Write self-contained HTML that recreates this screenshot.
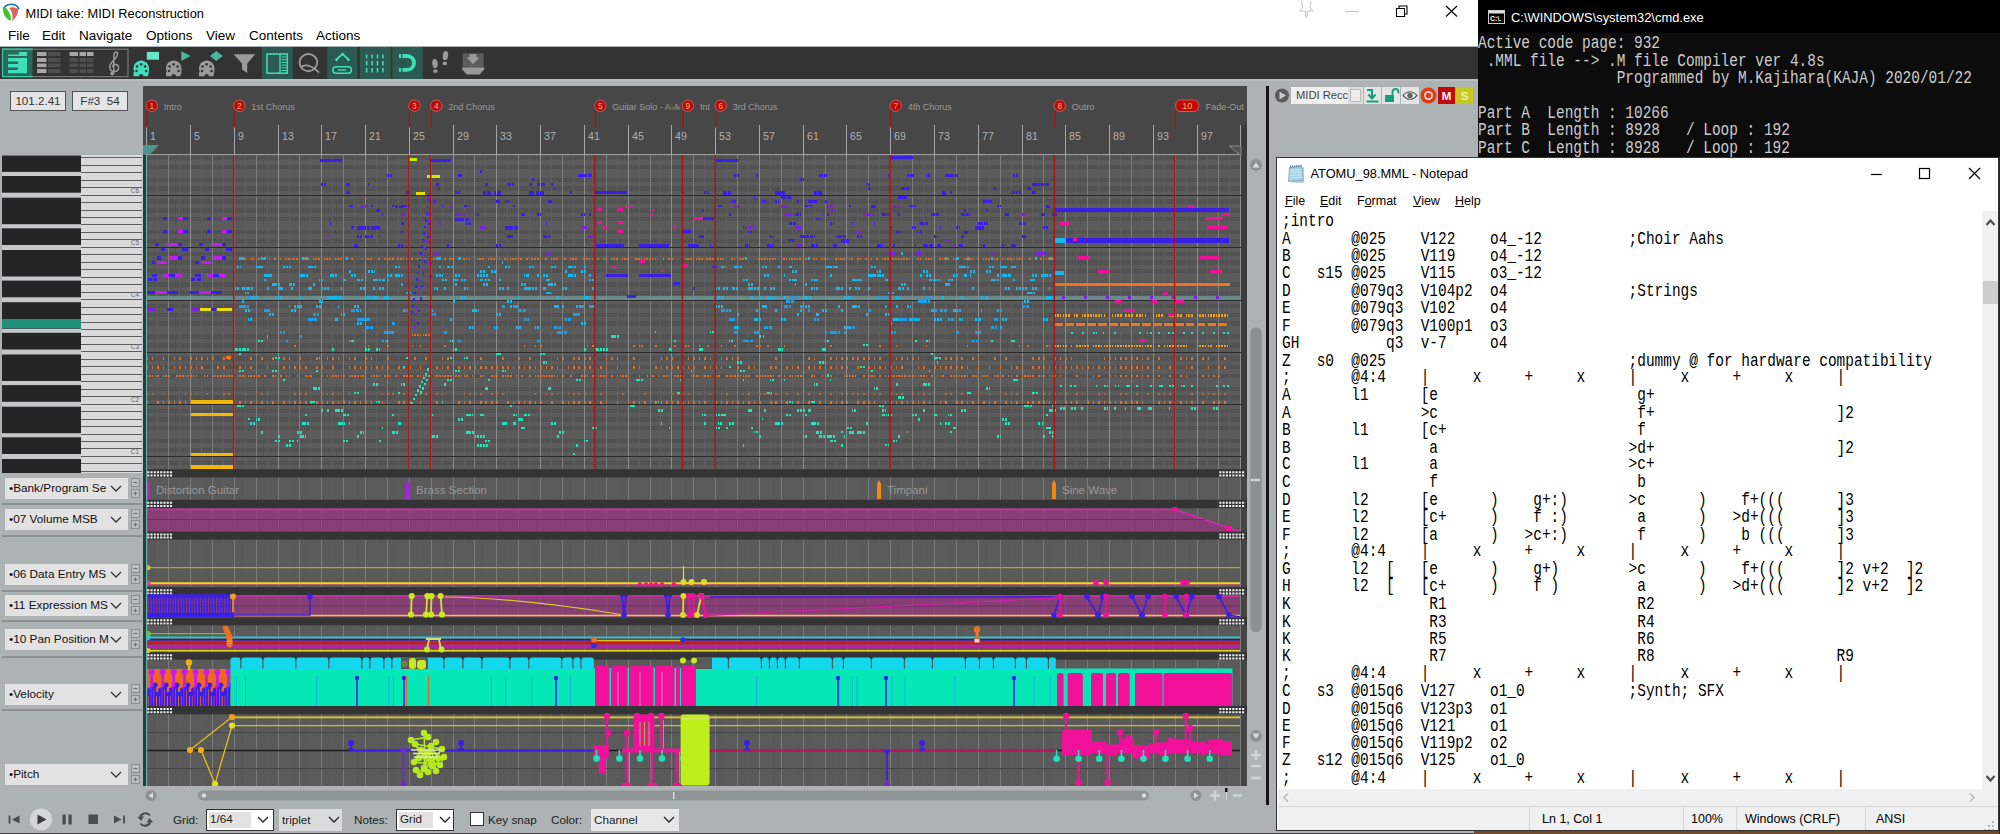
<!DOCTYPE html><html><head><meta charset="utf-8"><title>MIDI take: MIDI Reconstruction</title><style>
*{box-sizing:border-box;margin:0;padding:0}
html,body{width:2000px;height:834px;overflow:hidden;background:#adb2b2;font-family:"Liberation Sans",sans-serif;}
.abs{position:absolute}
#root{position:relative;width:2000px;height:834px;overflow:hidden;background:#adb2b2}
#rtitle{left:0;top:0;width:1478px;height:46px;background:#fff}
#rtitle .t{left:25.5px;top:5.5px;font-size:12.85px;color:#000;white-space:nowrap}
#rmenu span{position:absolute;top:28px;font-size:13.5px;color:#000;white-space:nowrap}
#tb{left:0;top:47px;width:1478px;height:32px;background:#333}
#topshade{left:0;top:79px;width:1478px;height:2px;background:#b7bcbc}
.box{background:#e4e4e4;border:1px solid #555;font-size:11.6px;color:#333;text-align:center;line-height:18px;height:20px;top:91px;white-space:pre}
#ruler{left:143px;top:86px;width:1104px;height:69px;background:#474747;overflow:hidden}
.combo{left:5px;width:123px;height:21px;background:#e2e2e2;font-size:11.8px;color:#111;line-height:21px;padding-left:4px;white-space:nowrap;overflow:hidden}
.pm{left:131px;width:9px;height:9px;border:1px solid #8a8f8f;background:#b9bebe}
.hl{left:2px;width:140px;height:2px;background:#8b9090}
#cmd{left:1478px;top:0;width:522px;height:157px;background:#0c0c0c;overflow:hidden}
#cmdtitle{left:0;top:0;width:522px;height:33px;background:#000}
#cmdtitle .t{left:33px;top:9.5px;font-size:12.9px;color:#fff;white-space:nowrap}
.mono{font-family:"Liberation Mono",monospace;font-size:17.34px;line-height:15.818px;white-space:pre;transform:scale(0.8333,1.1);transform-origin:0 0;tab-size:8;-moz-tab-size:8}
#cmdtext{left:0px;top:35px;color:#ccc}
#np{left:1276px;top:157px;width:723px;height:674px;background:#fff;border:1px solid #333;overflow:hidden}
#nptitle .t{left:32.500px;top:8px;font-size:12.8px;color:#000;white-space:nowrap}
#npmenu span{position:absolute;top:36px;font-size:12.5px;color:#000;white-space:nowrap}
#nptext{left:4px;top:55.200px;color:#000}
#npvs{left:704px;top:53px;width:17px;height:577.500px;background:#f0f0f0}
#nphs{left:0px;top:630.500px;width:721px;height:17.500px;background:#f0f0f0}
#npstat{left:0px;top:648px;width:721px;height:24px;background:#f0f0f0;border-top:1px solid #d7d7d7}
#npstat span{position:absolute;top:4.500px;font-size:12.5px;color:#000;white-space:nowrap}
#npstat i{position:absolute;top:0;width:1px;height:24px;background:#d7d7d7}
.lbl{font-size:11.700px;color:#222;white-space:nowrap}
#npi{position:absolute;left:1px;top:0;width:721px;height:672px;overflow:hidden}</style></head><body><div id="root">
<div id="rtitle" class="abs"><svg class="abs" style="left:0;top:0" width="1478" height="30"><path d="M3.5 9.5C5 3 17 2.500 19 9.500" fill="none" stroke="#2a7db0" stroke-width="1.800"/><path d="M3 8.500C2.500 13 5.500 18.500 10.500 21C12 17 9 10 4.500 7z" fill="#3cc428"/><path d="M9 8c3 3 4.500 8 3 13c4 -3 6.500 -7.500 6 -12c-3 -2 -6 -2.500 -9 -1z" fill="#d4645c"/><path d="M1301.500 1l1 7l-3 3h6v5l0.800 1.500l0.800 -1.500v-5h6l-3 -3l1 -7" fill="none" stroke="#c4c4c4" stroke-width="1"/><path d="M1345 11.500h14" stroke="#bdbdbd" stroke-width="1"/><path d="M1396.500 8.500h8v8h-8zM1399 8.500v-2.500h8v8h-2.500" fill="none" stroke="#000" stroke-width="1.100"/><path d="M1446 6l11 10.500M1457 6l-11 10.500" stroke="#000" stroke-width="1.200"/></svg><div class="abs t">MIDI take: MIDI Reconstruction</div>
<div id="rmenu">
<span style="left:8px">File</span>
<span style="left:42px">Edit</span>
<span style="left:79px">Navigate</span>
<span style="left:146px">Options</span>
<span style="left:206px">View</span>
<span style="left:249px">Contents</span>
<span style="left:316px">Actions</span>
</div></div>
<div id="tb" class="abs"><svg class="abs" style="left:0;top:0" width="1478" height="32" viewBox="0 0 1478 32"><rect x="2" y="1.500" width="30.500" height="28.500" fill="#2a6a5c"/><rect x="262" y="0" width="30.7" height="32" fill="#2c5a52"/><rect x="327.3" y="0" width="30" height="32" fill="#2c5a52"/><rect x="359.8" y="0" width="31" height="32" fill="#2c5a52"/><rect x="392.4" y="0" width="30.4" height="32" fill="#2c5a52"/><rect x="2.500" y="2.200" width="125.500" height="27.500" fill="none" stroke="#858585"/><path d="M32.500 2.200H2.500V29.700H32.500" fill="none" stroke="#35c8a4" stroke-width="1.300"/><path d="M19 5.100h8v3.900h-19v-1.500h11zM8 11h19v3.500h-19zM8 17h19v3.500h-19zM8 23h19v3.300h-19zM18 14.500h9v2.500h-9zM18 20.500h9v2.500h-9z" fill="#3fe0b8"/><rect x="37" y="5" width="9.500" height="4" fill="#a6a6a6"/><rect x="48" y="5" width="12.500" height="4" fill="#4e4e4e"/><rect x="37" y="11" width="9.500" height="4" fill="#a6a6a6"/><rect x="48" y="11" width="12.500" height="4" fill="#4e4e4e"/><rect x="37" y="16.5" width="9.500" height="3.7" fill="#a6a6a6"/><rect x="48" y="16.5" width="12.500" height="3.7" fill="#4e4e4e"/><rect x="37" y="22" width="9.500" height="4" fill="#a6a6a6"/><rect x="48" y="22" width="12.500" height="4" fill="#4e4e4e"/><rect x="69.5" y="5" width="8.5" height="4" fill="#a6a6a6"/><rect x="69.5" y="11" width="8.5" height="4" fill="#4e4e4e"/><rect x="69.5" y="16.5" width="8.5" height="3.7" fill="#4e4e4e"/><rect x="69.5" y="22" width="8.5" height="4" fill="#4e4e4e"/><rect x="79.5" y="5" width="6.5" height="4" fill="#a6a6a6"/><rect x="79.5" y="11" width="6.5" height="4" fill="#4e4e4e"/><rect x="79.5" y="16.5" width="6.5" height="3.7" fill="#4e4e4e"/><rect x="79.5" y="22" width="6.5" height="4" fill="#4e4e4e"/><rect x="87" y="5" width="6.5" height="4" fill="#a6a6a6"/><rect x="87" y="11" width="6.5" height="4" fill="#4e4e4e"/><rect x="87" y="16.5" width="6.5" height="3.7" fill="#4e4e4e"/><rect x="87" y="22" width="6.5" height="4" fill="#4e4e4e"/><path d="M113.800 27V9.500c0 -2.800 1.300 -4.500 2.700 -4.500c1.600 0 1.300 3.800 -1.300 6.600c-2.800 3 -5.400 4.800 -5.400 8.300c0 2.900 2.200 4.500 4.700 4.500c2.500 0 4.100 -1.600 4.100 -3.700c0 -1.900 -1.400 -3.300 -3.200 -3.300c-1.700 0 -2.900 1.200 -2.900 2.700" fill="none" stroke="#9a9a9a" stroke-width="1.500"/><circle cx="112.200" cy="26.600" r="1.900" fill="#9a9a9a"/><path d="M133.5 29.3v-3.200c0 -0.800 0.800 -1.200 0.800 -2c0 -0.600 -0.800 -1 -0.800 -2.400c0 -4.500 3.400 -8.100 7.750 -8.100s7.750 3.600 7.750 8.100c0 2.800 -0.500 5.200 -1.200 7.600h-4.400c0 -1.500 -0.900 -2.300 -2.200 -2.300s-2.200 0.800 -2.200 2.300z" fill="#3fe0b8"/><circle cx="137.1" cy="19.500" r="1.250" fill="#333"/><circle cx="141.1" cy="17.300" r="1.250" fill="#333"/><circle cx="145.1" cy="19.500" r="1.250" fill="#333"/><circle cx="136.5" cy="24" r="1.250" fill="#333"/><circle cx="146.1" cy="24" r="1.250" fill="#333"/><rect x="146.800" y="4.900" width="12.200" height="7.800" fill="#68e6c8"/><path d="M166 29.3v-3.200c0 -0.800 0.800 -1.200 0.800 -2c0 -0.600 -0.800 -1 -0.800 -2.400c0 -4.500 3.400 -8.100 7.750 -8.100s7.750 3.600 7.750 8.100c0 2.800 -0.500 5.200 -1.200 7.600h-4.400c0 -1.500 -0.900 -2.300 -2.200 -2.300s-2.200 0.800 -2.200 2.300z" fill="#9a9a9a"/><circle cx="169.6" cy="19.500" r="1.250" fill="#333"/><circle cx="173.6" cy="17.300" r="1.250" fill="#333"/><circle cx="177.6" cy="19.500" r="1.250" fill="#333"/><circle cx="169" cy="24" r="1.250" fill="#333"/><circle cx="178.6" cy="24" r="1.250" fill="#333"/><path d="M181.300 4.200l9.300 4.900l-9.300 4.900z" fill="#47b898"/><path d="M199 29.3v-3.200c0 -0.800 0.800 -1.200 0.800 -2c0 -0.600 -0.800 -1 -0.800 -2.400c0 -4.500 3.400 -8.100 7.750 -8.100s7.750 3.600 7.750 8.100c0 2.800 -0.500 5.200 -1.200 7.600h-4.400c0 -1.500 -0.900 -2.300 -2.200 -2.300s-2.200 0.800 -2.200 2.300z" fill="#9a9a9a"/><circle cx="202.6" cy="19.500" r="1.250" fill="#333"/><circle cx="206.6" cy="17.300" r="1.250" fill="#333"/><circle cx="210.6" cy="19.500" r="1.250" fill="#333"/><circle cx="202" cy="24" r="1.250" fill="#333"/><circle cx="211.6" cy="24" r="1.250" fill="#333"/><path d="M216.300 3.900l6.500 5l-6.500 5l-6.500 -5z" fill="#47b898"/><path d="M233.600 7.200h21.700l-8.100 9.300v9.400l-5.200 -3.400v-6z" fill="#9a9a9a"/><rect x="267" y="7" width="20.300" height="19.200" fill="none" stroke="#3fe0b8" stroke-width="1.500"/><path d="M280 7v19.200" stroke="#3fe0b8" stroke-width="1.300"/><path d="M281.500 10h5M281.500 12.700h5M281.500 15.400h5M281.500 18.100h5M281.500 20.800h5M281.500 23.500h5" stroke="#3fe0b8" stroke-width="1"/><ellipse cx="308.400" cy="15.600" rx="8.800" ry="8.600" fill="none" stroke="#9a9a9a" stroke-width="1.900"/><path d="M300.500 20.500c4.500 -3.500 11 -2.500 18.500 5.200" fill="none" stroke="#9a9a9a" stroke-width="1.700"/><path d="M336.500 12.500l6 -5.500l6 5.500" fill="none" stroke="#3fe0b8" stroke-width="1.800"/><circle cx="336.500" cy="12.800" r="1.400" fill="#3fe0b8"/><circle cx="348.500" cy="12.800" r="1.400" fill="#3fe0b8"/><circle cx="342.500" cy="7.200" r="1.400" fill="#3fe0b8"/><rect x="332.800" y="19.800" width="18.600" height="6.400" rx="3.200" fill="none" stroke="#3fe0b8" stroke-width="1.500"/><path d="M338 23h8" stroke="#3fe0b8" stroke-width="1.300"/><path d="M366.60 7.500v4M366.60 14v4.500M366.60 21v4.500" stroke="#3fe0b8" stroke-width="1.500"/><path d="M372.05 7.500v4M372.05 14v4.500M372.05 21v4.500" stroke="#3fe0b8" stroke-width="1.500"/><path d="M377.50 7.500v4M377.50 14v4.500M377.50 21v4.500" stroke="#3fe0b8" stroke-width="1.500"/><path d="M382.95 7.500v4M382.95 14v4.500M382.95 21v4.500" stroke="#3fe0b8" stroke-width="1.500"/><path d="M399 9h7.500c5 0 7.500 3.300 7.500 6.900s-2.500 6.900 -7.500 6.900h-7.500" fill="none" stroke="#3fe0b8" stroke-width="3.800"/><path d="M401.800 6.500v5M401.800 20.300v5" stroke="#2c5a52" stroke-width="1.200"/><ellipse cx="435" cy="16.500" rx="2.700" ry="4.600" fill="#9a9a9a" transform="rotate(-8 435 16.500)"/><rect x="433.300" y="22.600" width="4.200" height="3.200" rx="1.200" fill="#9a9a9a"/><ellipse cx="445.400" cy="8.600" rx="2.700" ry="4.600" fill="#9a9a9a" transform="rotate(8 445.400 8.600)"/><rect x="442.800" y="14.700" width="4.200" height="3.200" rx="1.200" fill="#9a9a9a"/><rect x="462.700" y="6.400" width="21" height="14.200" fill="#5c5c5c"/><path d="M469.500 7h7v3.500h3l-6.500 6.500l-6.500 -6.500h3z" fill="#9a9a9a"/><path d="M462.200 20.600h22v1.700l-4.500 5.200h-13l-4.500 -5.200z" fill="#9a9a9a"/></svg></div>
<div id="topshade" class="abs"></div>
<div class="abs box" style="left:10px;width:56px">101.2.41</div>
<div class="abs box" style="left:72px;width:56px">F#3  54</div>
<svg class="abs" style="left:0;top:79px" width="1478" height="755" viewBox="0 79 1478 755"><rect x="143" y="86" width="1104" height="69" fill="#474747"/><rect x="1241" y="125" width="6" height="30" fill="#3a3a3a"/><path d="M146 154.5H1241" stroke="#9c9c9c" stroke-width="1"/><text x="150.0" y="139.5" font-family="Liberation Sans,sans-serif" font-size="10.6" fill="#b0b0b0">1</text><text x="194.0" y="139.5" font-family="Liberation Sans,sans-serif" font-size="10.6" fill="#b0b0b0">5</text><text x="238.0" y="139.5" font-family="Liberation Sans,sans-serif" font-size="10.6" fill="#b0b0b0">9</text><text x="282.0" y="139.5" font-family="Liberation Sans,sans-serif" font-size="10.6" fill="#b0b0b0">13</text><text x="325.0" y="139.5" font-family="Liberation Sans,sans-serif" font-size="10.6" fill="#b0b0b0">17</text><text x="369.0" y="139.5" font-family="Liberation Sans,sans-serif" font-size="10.6" fill="#b0b0b0">21</text><text x="413.0" y="139.5" font-family="Liberation Sans,sans-serif" font-size="10.6" fill="#b0b0b0">25</text><text x="457.0" y="139.5" font-family="Liberation Sans,sans-serif" font-size="10.6" fill="#b0b0b0">29</text><text x="500.0" y="139.5" font-family="Liberation Sans,sans-serif" font-size="10.6" fill="#b0b0b0">33</text><text x="544.0" y="139.5" font-family="Liberation Sans,sans-serif" font-size="10.6" fill="#b0b0b0">37</text><text x="588.0" y="139.5" font-family="Liberation Sans,sans-serif" font-size="10.6" fill="#b0b0b0">41</text><text x="632.0" y="139.5" font-family="Liberation Sans,sans-serif" font-size="10.6" fill="#b0b0b0">45</text><text x="675.0" y="139.5" font-family="Liberation Sans,sans-serif" font-size="10.6" fill="#b0b0b0">49</text><text x="719.0" y="139.5" font-family="Liberation Sans,sans-serif" font-size="10.6" fill="#b0b0b0">53</text><text x="763.0" y="139.5" font-family="Liberation Sans,sans-serif" font-size="10.6" fill="#b0b0b0">57</text><text x="807.0" y="139.5" font-family="Liberation Sans,sans-serif" font-size="10.6" fill="#b0b0b0">61</text><text x="850.0" y="139.5" font-family="Liberation Sans,sans-serif" font-size="10.6" fill="#b0b0b0">65</text><text x="894.0" y="139.5" font-family="Liberation Sans,sans-serif" font-size="10.6" fill="#b0b0b0">69</text><text x="938.0" y="139.5" font-family="Liberation Sans,sans-serif" font-size="10.6" fill="#b0b0b0">73</text><text x="982.0" y="139.5" font-family="Liberation Sans,sans-serif" font-size="10.6" fill="#b0b0b0">77</text><text x="1026.0" y="139.5" font-family="Liberation Sans,sans-serif" font-size="10.6" fill="#b0b0b0">81</text><text x="1069.0" y="139.5" font-family="Liberation Sans,sans-serif" font-size="10.6" fill="#b0b0b0">85</text><text x="1113.0" y="139.5" font-family="Liberation Sans,sans-serif" font-size="10.6" fill="#b0b0b0">89</text><text x="1157.0" y="139.5" font-family="Liberation Sans,sans-serif" font-size="10.6" fill="#b0b0b0">93</text><text x="1201.0" y="139.5" font-family="Liberation Sans,sans-serif" font-size="10.6" fill="#b0b0b0">97</text><path d="M146.5 125V155M190.5 125V155M234.5 125V155M278.5 125V155M321.5 125V155M365.5 125V155M409.5 125V155M453.5 125V155M496.5 125V155M540.5 125V155M584.5 125V155M628.5 125V155M671.5 125V155M715.5 125V155M759.5 125V155M803.5 125V155M846.5 125V155M890.5 125V155M934.5 125V155M978.5 125V155M1022.5 125V155M1065.5 125V155M1109.5 125V155M1153.5 125V155M1197.5 125V155M1240.5 125V155" stroke="#a6a6a6" stroke-width="1"/><clipPath id="cg"><rect x="600" y="95" width="80" height="20"/></clipPath><clipPath id="ci"><rect x="690" y="95" width="22" height="20"/></clipPath><path d="M146.8 111V127.500" stroke="#961a1a" stroke-width="1.500"/><circle cx="151.8" cy="105.700" r="5.700" fill="#b80a0a" stroke="#d86a5a" stroke-width="0.800"/><text x="151.8" y="108.700" font-family="Liberation Sans,sans-serif" font-size="8.300" fill="#f4b070" text-anchor="middle">1</text><text x="163.8" y="109.5" font-family="Liberation Sans,sans-serif" font-size="9" fill="#9a9a9a">Intro</text><path d="M234.3 111V127.500" stroke="#961a1a" stroke-width="1.500"/><circle cx="239.3" cy="105.700" r="5.700" fill="#b80a0a" stroke="#d86a5a" stroke-width="0.800"/><text x="239.3" y="108.700" font-family="Liberation Sans,sans-serif" font-size="8.300" fill="#f4b070" text-anchor="middle">2</text><text x="251.3" y="109.5" font-family="Liberation Sans,sans-serif" font-size="9" fill="#9a9a9a">1st Chorus</text><path d="M409.4 111V127.500" stroke="#961a1a" stroke-width="1.500"/><circle cx="414.4" cy="105.700" r="5.700" fill="#b80a0a" stroke="#d86a5a" stroke-width="0.800"/><text x="414.4" y="108.700" font-family="Liberation Sans,sans-serif" font-size="8.300" fill="#f4b070" text-anchor="middle">3</text><path d="M431.2 111V127.500" stroke="#961a1a" stroke-width="1.500"/><circle cx="436.2" cy="105.700" r="5.700" fill="#b80a0a" stroke="#d86a5a" stroke-width="0.800"/><text x="436.2" y="108.700" font-family="Liberation Sans,sans-serif" font-size="8.300" fill="#f4b070" text-anchor="middle">4</text><text x="448.2" y="109.5" font-family="Liberation Sans,sans-serif" font-size="9" fill="#9a9a9a">2nd Chorus</text><path d="M595.3 111V127.500" stroke="#961a1a" stroke-width="1.500"/><circle cx="600.3" cy="105.700" r="5.700" fill="#b80a0a" stroke="#d86a5a" stroke-width="0.800"/><text x="600.3" y="108.700" font-family="Liberation Sans,sans-serif" font-size="8.300" fill="#f4b070" text-anchor="middle">5</text><text x="612.3" y="109.5" font-family="Liberation Sans,sans-serif" font-size="9" fill="#9a9a9a" clip-path="url(#cg)">Guitar Solo - A&#9837;M</text><path d="M682.9 111V127.500" stroke="#961a1a" stroke-width="1.500"/><circle cx="687.9" cy="105.700" r="5.700" fill="#b80a0a" stroke="#d86a5a" stroke-width="0.800"/><text x="687.9" y="108.700" font-family="Liberation Sans,sans-serif" font-size="8.300" fill="#f4b070" text-anchor="middle">9</text><text x="699.9" y="109.5" font-family="Liberation Sans,sans-serif" font-size="9" fill="#9a9a9a" clip-path="url(#ci)">Int</text><path d="M715.7 111V127.500" stroke="#961a1a" stroke-width="1.500"/><circle cx="720.7" cy="105.700" r="5.700" fill="#b80a0a" stroke="#d86a5a" stroke-width="0.800"/><text x="720.7" y="108.700" font-family="Liberation Sans,sans-serif" font-size="8.300" fill="#f4b070" text-anchor="middle">6</text><text x="732.7" y="109.5" font-family="Liberation Sans,sans-serif" font-size="9" fill="#9a9a9a">3rd Chorus</text><path d="M890.7 111V127.500" stroke="#961a1a" stroke-width="1.500"/><circle cx="895.7" cy="105.700" r="5.700" fill="#b80a0a" stroke="#d86a5a" stroke-width="0.800"/><text x="895.7" y="108.700" font-family="Liberation Sans,sans-serif" font-size="8.300" fill="#f4b070" text-anchor="middle">7</text><text x="907.7" y="109.5" font-family="Liberation Sans,sans-serif" font-size="9" fill="#9a9a9a">4th Chorus</text><path d="M1054.8 111V127.500" stroke="#961a1a" stroke-width="1.500"/><circle cx="1059.8" cy="105.700" r="5.700" fill="#b80a0a" stroke="#d86a5a" stroke-width="0.800"/><text x="1059.8" y="108.700" font-family="Liberation Sans,sans-serif" font-size="8.300" fill="#f4b070" text-anchor="middle">8</text><text x="1071.8" y="109.5" font-family="Liberation Sans,sans-serif" font-size="9" fill="#9a9a9a">Outro</text><path d="M1175.2 111V127.500" stroke="#961a1a" stroke-width="1.500"/><rect x="1175.7" y="100" width="23" height="11.5" rx="5" fill="#c00808" stroke="#e06a5a" stroke-width="0.8"/><text x="1187.2" y="109.3" font-family="Liberation Sans,sans-serif" font-size="9" fill="#f4b070" text-anchor="middle">10</text><text x="1205.7" y="109.5" font-family="Liberation Sans,sans-serif" font-size="9" fill="#9a9a9a">Fade-Out</text><path d="M143 145h16l-9 9.5h-7z" fill="#4f9c92" opacity="0.9"/><path d="M1229 146h12v9.5z" fill="#555" stroke="#8a8a8a" stroke-width="1"/><rect x="2" y="155" width="141" height="318" fill="#c4c8c8"/><rect x="81" y="155" width="60.500" height="318" fill="#dadada"/><path d="M81 157.5H141.500M81 165.5H141.500M81 172.5H141.500M81 180.5H141.500M81 187.5H141.500M81 195.5H141.500M81 202.5H141.500M81 210.5H141.500M81 217.5H141.500M81 224.5H141.500M81 232.5H141.500M81 239.5H141.500M81 247.5H141.500M81 254.5H141.500M81 262.5H141.500M81 269.5H141.500M81 277.5H141.500M81 284.5H141.500M81 292.5H141.500M81 299.5H141.500M81 307.5H141.500M81 314.5H141.500M81 322.5H141.500M81 329.5H141.500M81 336.5H141.500M81 344.5H141.500M81 351.5H141.500M81 359.5H141.500M81 366.5H141.500M81 374.5H141.500M81 381.5H141.500M81 389.5H141.500M81 396.5H141.500M81 404.5H141.500M81 411.5H141.500M81 419.5H141.500M81 426.5H141.500M81 434.5H141.500M81 441.5H141.500M81 448.5H141.500M81 456.5H141.500M81 463.5H141.500M81 471.5H141.500" stroke="#5e5e5e" stroke-width="1" shape-rendering="crispEdges"/><rect x="2" y="155.5" width="79" height="16.4" fill="#242626"/><rect x="2" y="176.0" width="79" height="16.7" fill="#242626"/><rect x="2" y="197.7" width="79" height="26.5" fill="#242626"/><rect x="2" y="228.3" width="79" height="16.7" fill="#242626"/><text x="139" y="192.5" font-family="Liberation Sans,sans-serif" font-size="6.500" fill="#666" text-anchor="end">C6</text><rect x="2" y="250.0" width="79" height="26.5" fill="#242626"/><rect x="2" y="280.6" width="79" height="16.7" fill="#242626"/><text x="139" y="244.8" font-family="Liberation Sans,sans-serif" font-size="6.500" fill="#666" text-anchor="end">C5</text><rect x="2" y="302.2" width="79" height="26.5" fill="#242626"/><rect x="2" y="332.8" width="79" height="16.7" fill="#242626"/><text x="139" y="297.0" font-family="Liberation Sans,sans-serif" font-size="6.500" fill="#666" text-anchor="end">C4</text><rect x="2" y="354.5" width="79" height="26.5" fill="#242626"/><rect x="2" y="385.1" width="79" height="16.7" fill="#242626"/><text x="139" y="349.3" font-family="Liberation Sans,sans-serif" font-size="6.500" fill="#666" text-anchor="end">C3</text><rect x="2" y="406.7" width="79" height="26.5" fill="#242626"/><rect x="2" y="437.3" width="79" height="16.7" fill="#242626"/><text x="139" y="401.5" font-family="Liberation Sans,sans-serif" font-size="6.500" fill="#666" text-anchor="end">C2</text><rect x="2" y="459.0" width="79" height="14.0" fill="#242626"/><text x="139" y="453.8" font-family="Liberation Sans,sans-serif" font-size="6.500" fill="#666" text-anchor="end">C1</text><rect x="2" y="319" width="79" height="9.200" fill="#1f8f78"/><circle cx="1256" cy="165" r="6" fill="#8d9292"/><path d="M1252.5 167.5l3.5 -5l3.5 5z" fill="#d8dcdc"/><rect x="1250.300" y="327.500" width="11.400" height="304.500" rx="5.500" fill="#8b9090"/><circle cx="1256" cy="736" r="6" fill="#8d9292"/><path d="M1252.5 733.5l3.5 5l3.5 -5z" fill="#d8dcdc"/><path d="M1251 755h10M1256 750v10" stroke="#d0d4d4" stroke-width="2.6"/><path d="M1251 766h10" stroke="#d0d4d4" stroke-width="2.2"/><path d="M1251 778h10" stroke="#d0d4d4" stroke-width="2.6"/><path d="M1251 480h9" stroke="#d0d4d4" stroke-width="2.4"/><circle cx="151" cy="795.5" r="5.5" fill="#8d9292"/><path d="M153 792.5l-4.5 3l4.5 3z" fill="#d8dcdc"/><rect x="198" y="790.5" width="951" height="10" rx="5" fill="#8f9494"/><circle cx="204" cy="795.5" r="2.2" fill="#d8dcdc"/><circle cx="1144" cy="795.5" r="2.2" fill="#d8dcdc"/><rect x="673" y="792" width="1.5" height="7" fill="#d8dcdc"/><circle cx="1196" cy="795.5" r="5.5" fill="#8d9292"/><path d="M1194 792.5l4.500 3l-4.500 3z" fill="#d8dcdc"/><path d="M1210 795.5h10M1215 790.500v10" stroke="#d0d4d4" stroke-width="2.4"/><path d="M1233 795.500h9" stroke="#d0d4d4" stroke-width="2.4"/><rect x="1225" y="788" width="2.5" height="4" fill="#111"/><rect x="1226" y="792" width="1" height="8" fill="#d0d4d4"/><path d="M9.500 815.500v8" stroke="#4a4d4d" stroke-width="1.800"/><path d="M19.500 815.500l-7.500 4l7.500 4z" fill="#4a4d4d"/><circle cx="41" cy="819.5" r="11" fill="#d3d7d7"/><path d="M37.5 814.500l9 5l-9 5z" fill="#3a3d3d"/><rect x="62.5" y="814.500" width="3.200" height="10" fill="#4a4d4d"/><rect x="68.500" y="814.500" width="3.200" height="10" fill="#4a4d4d"/><rect x="88.5" y="814.500" width="9.500" height="9.500" fill="#4a4d4d"/><path d="M114 815.500l7.500 4l-7.500 4z" fill="#4a4d4d"/><path d="M124 815.500v8" stroke="#4a4d4d" stroke-width="1.800"/><path d="M150 815.500a5.600 5.600 0 0 0 -10 2.500M140.500 823.500a5.600 5.600 0 0 0 10 -2.500" fill="none" stroke="#4a4d4d" stroke-width="2"/><path d="M137.500 817l3.500 4l3 -4.500zM153 822l-3.500 -4l-3 4.500z" fill="#4a4d4d"/><circle cx="1282" cy="95.5" r="7" fill="#5a5d5d"/><path d="M1279.500 91.500l6.500 4l-6.500 4z" fill="#c8cccc"/><rect x="1348" y="87" width="15" height="17" fill="#dedede"/><rect x="1350.5" y="89.5" width="10" height="12" fill="#ececec" stroke="#b0b0b0" stroke-width="0.8"/><rect x="1364" y="87" width="17" height="17" fill="#e4e4e4"/><path d="M1367 90h5v7M1368.500 94.500l3.500 4l3.500 -4M1366.500 101.500h12" stroke="#11a078" stroke-width="2" fill="none"/><rect x="1382" y="87" width="18" height="17" fill="#e4e4e4"/><rect x="1385" y="95" width="9" height="7" fill="#11a078"/><path d="M1392.500 95v-3a3 3 0 0 1 6 0v1.500" stroke="#11a078" stroke-width="1.800" fill="none"/><rect x="1401" y="87" width="18" height="17" fill="#e4e4e4"/><path d="M1403 95.500q7 -7.500 14 0q-7 7.500 -14 0z" fill="#fff" stroke="#666" stroke-width="1.200"/><circle cx="1410" cy="95.500" r="2.800" fill="#666"/><circle cx="1428.5" cy="95.500" r="8" fill="#d8401c"/><circle cx="1428.500" cy="95.500" r="3.600" fill="none" stroke="#f4d0c0" stroke-width="1.800"/><rect x="1438" y="87" width="17" height="17" fill="#c40808"/><text x="1446.500" y="100" font-family="Liberation Sans,sans-serif" font-size="11.500" font-weight="bold" fill="#fff" text-anchor="middle">M</text><rect x="1456" y="87" width="17" height="17" fill="#c8c820"/><text x="1464.500" y="100" font-family="Liberation Sans,sans-serif" font-size="11.500" font-weight="bold" fill="#f0f0a0" text-anchor="middle">S</text></svg>
<svg class="abs" style="left:143px;top:155px" width="1104" height="314" viewBox="143 155 1104 314" shape-rendering="crispEdges"><rect x="143" y="155" width="1104" height="314" fill="#5b5b5b"/><path d="M143 155.90h1104v4.36h-1104zM143 164.61h1104v4.36h-1104zM143 177.68h1104v4.36h-1104zM143 186.39h1104v4.36h-1104zM143 199.45h1104v4.36h-1104zM143 208.16h1104v4.36h-1104zM143 216.88h1104v4.36h-1104zM143 229.94h1104v4.36h-1104zM143 238.65h1104v4.36h-1104zM143 251.72h1104v4.36h-1104zM143 260.43h1104v4.36h-1104zM143 269.13h1104v4.36h-1104zM143 282.20h1104v4.36h-1104zM143 290.91h1104v4.36h-1104zM143 303.98h1104v4.36h-1104zM143 312.69h1104v4.36h-1104zM143 321.39h1104v4.36h-1104zM143 334.46h1104v4.36h-1104zM143 343.17h1104v4.36h-1104zM143 356.24h1104v4.36h-1104zM143 364.95h1104v4.36h-1104zM143 373.65h1104v4.36h-1104zM143 386.72h1104v4.36h-1104zM143 395.43h1104v4.36h-1104zM143 408.50h1104v4.36h-1104zM143 417.21h1104v4.36h-1104zM143 425.92h1104v4.36h-1104zM143 438.98h1104v4.36h-1104zM143 447.69h1104v4.36h-1104zM143 460.75h1104v4.36h-1104z" fill="#525252"/><path d="M157.5 155v314M179.5 155v314M201.5 155v314M223.5 155v314M245.5 155v314M267.5 155v314M289.5 155v314M310.5 155v314M332.5 155v314M354.5 155v314M376.5 155v314M398.5 155v314M420.5 155v314M442.5 155v314M464.5 155v314M485.5 155v314M507.5 155v314M529.5 155v314M551.5 155v314M573.5 155v314M595.5 155v314M617.5 155v314M639.5 155v314M660.5 155v314M682.5 155v314M704.5 155v314M726.5 155v314M748.5 155v314M770.5 155v314M792.5 155v314M814.5 155v314M836.5 155v314M857.5 155v314M879.5 155v314M901.5 155v314M923.5 155v314M945.5 155v314M967.5 155v314M989.5 155v314M1011.5 155v314M1032.5 155v314M1054.5 155v314M1076.5 155v314M1098.5 155v314M1120.5 155v314M1142.5 155v314M1164.5 155v314M1186.5 155v314M1207.5 155v314M1229.5 155v314" stroke="#5e5e5e" stroke-width="1" fill="none"/><path d="M168.5 155v314M212.5 155v314M256.5 155v314M299.5 155v314M343.5 155v314M387.5 155v314M431.5 155v314M474.5 155v314M518.5 155v314M562.5 155v314M606.5 155v314M650.5 155v314M693.5 155v314M737.5 155v314M781.5 155v314M825.5 155v314M868.5 155v314M912.5 155v314M956.5 155v314M1000.5 155v314M1043.5 155v314M1087.5 155v314M1131.5 155v314M1175.5 155v314M1218.5 155v314" stroke="#7c7c7c" stroke-width="1" fill="none"/><path d="M146.5 155v314M190.5 155v314M234.5 155v314M278.5 155v314M321.5 155v314M365.5 155v314M409.5 155v314M453.5 155v314M496.5 155v314M540.5 155v314M584.5 155v314M628.5 155v314M671.5 155v314M715.5 155v314M759.5 155v314M803.5 155v314M846.5 155v314M890.5 155v314M934.5 155v314M978.5 155v314M1022.5 155v314M1065.5 155v314M1109.5 155v314M1153.5 155v314M1197.5 155v314M1240.5 155v314" stroke="#8c8c8c" stroke-width="1" fill="none"/><path d="M143 195.5h1104M143 247.5h1104M143 300.5h1104M143 352.5h1104M143 404.5h1104M143 456.5h1104" stroke="#2b2b2b" stroke-width="1" fill="none"/><rect x="146" y="295.6" width="1101" height="4.2" fill="#6f9a98" opacity="0.75"/><path d="M146.3 357.2h1.6v2.5h-1.6zM151.8 357.2h1.6v2.5h-1.6zM162.7 357.2h1.6v2.5h-1.6zM173.7 357.2h1.6v2.5h-1.6zM179.1 357.2h1.6v2.5h-1.6zM190.1 357.2h1.6v2.5h-1.6zM195.5 357.2h1.6v2.5h-1.6zM201.0 357.2h1.6v2.5h-1.6zM206.5 357.2h1.6v2.5h-1.6zM211.9 357.2h1.6v2.5h-1.6zM222.9 357.2h1.6v2.5h-1.6zM228.4 357.2h1.6v2.5h-1.6zM250.2 357.2h1.6v2.5h-1.6zM261.2 357.2h1.6v2.5h-1.6zM272.1 357.2h1.6v2.5h-1.6zM277.6 357.2h1.6v2.5h-1.6zM283.1 357.2h1.6v2.5h-1.6zM288.5 357.2h1.6v2.5h-1.6zM299.5 357.2h1.6v2.5h-1.6zM315.9 357.2h1.6v2.5h-1.6zM326.8 357.2h1.6v2.5h-1.6zM332.3 357.2h1.6v2.5h-1.6zM337.8 357.2h1.6v2.5h-1.6zM348.7 357.2h1.6v2.5h-1.6zM354.2 357.2h1.6v2.5h-1.6zM365.1 357.2h1.6v2.5h-1.6zM370.6 357.2h1.6v2.5h-1.6zM387.0 357.2h1.6v2.5h-1.6zM414.3 357.2h1.6v2.5h-1.6zM425.3 357.2h1.6v2.5h-1.6zM430.7 357.2h1.6v2.5h-1.6zM441.7 357.2h1.6v2.5h-1.6zM447.1 357.2h1.6v2.5h-1.6zM452.6 357.2h1.6v2.5h-1.6zM480.0 357.2h1.6v2.5h-1.6zM501.9 357.2h1.6v2.5h-1.6zM518.3 357.2h1.6v2.5h-1.6zM529.2 357.2h1.6v2.5h-1.6zM556.5 357.2h1.6v2.5h-1.6zM562.0 357.2h1.6v2.5h-1.6zM573.0 357.2h1.6v2.5h-1.6zM578.4 357.2h1.6v2.5h-1.6zM583.9 357.2h1.6v2.5h-1.6zM589.4 357.2h1.6v2.5h-1.6zM594.8 357.2h1.6v2.5h-1.6zM605.8 357.2h1.6v2.5h-1.6zM611.2 357.2h1.6v2.5h-1.6zM616.7 357.2h1.6v2.5h-1.6zM627.7 357.2h1.6v2.5h-1.6zM633.1 357.2h1.6v2.5h-1.6zM660.5 357.2h1.6v2.5h-1.6zM666.0 357.2h1.6v2.5h-1.6zM671.4 357.2h1.6v2.5h-1.6zM687.8 357.2h1.6v2.5h-1.6zM693.3 357.2h1.6v2.5h-1.6zM698.8 357.2h1.6v2.5h-1.6zM704.2 357.2h1.6v2.5h-1.6zM709.7 357.2h1.6v2.5h-1.6zM720.7 357.2h1.6v2.5h-1.6zM726.1 357.2h1.6v2.5h-1.6zM731.6 357.2h1.6v2.5h-1.6zM737.1 357.2h1.6v2.5h-1.6zM775.3 357.2h1.6v2.5h-1.6zM802.7 357.2h1.6v2.5h-1.6zM808.2 357.2h1.6v2.5h-1.6zM813.6 357.2h1.6v2.5h-1.6zM824.6 357.2h1.6v2.5h-1.6zM830.0 357.2h1.6v2.5h-1.6zM835.5 357.2h1.6v2.5h-1.6zM841.0 357.2h1.6v2.5h-1.6zM846.5 357.2h1.6v2.5h-1.6zM851.9 357.2h1.6v2.5h-1.6zM857.4 357.2h1.6v2.5h-1.6zM862.9 357.2h1.6v2.5h-1.6zM868.3 357.2h1.6v2.5h-1.6zM873.8 357.2h1.6v2.5h-1.6zM879.3 357.2h1.6v2.5h-1.6zM895.7 357.2h1.6v2.5h-1.6zM901.2 357.2h1.6v2.5h-1.6zM906.6 357.2h1.6v2.5h-1.6zM912.1 357.2h1.6v2.5h-1.6zM917.6 357.2h1.6v2.5h-1.6zM934.0 357.2h1.6v2.5h-1.6zM939.5 357.2h1.6v2.5h-1.6zM944.9 357.2h1.6v2.5h-1.6zM950.4 357.2h1.6v2.5h-1.6zM955.9 357.2h1.6v2.5h-1.6zM961.3 357.2h1.6v2.5h-1.6zM972.3 357.2h1.6v2.5h-1.6zM977.7 357.2h1.6v2.5h-1.6zM994.1 357.2h1.6v2.5h-1.6zM1005.1 357.2h1.6v2.5h-1.6zM1032.4 357.2h1.6v2.5h-1.6zM1037.9 357.2h1.6v2.5h-1.6zM1043.4 357.2h1.6v2.5h-1.6zM1054.3 357.2h1.6v2.5h-1.6zM1059.8 357.2h1.6v2.5h-1.6zM1065.3 357.2h1.6v2.5h-1.6zM1070.7 357.2h1.6v2.5h-1.6zM1103.5 357.2h1.6v2.5h-1.6zM1109.0 357.2h1.6v2.5h-1.6zM1114.5 357.2h1.6v2.5h-1.6zM1120.0 357.2h1.6v2.5h-1.6zM1125.4 357.2h1.6v2.5h-1.6zM1130.9 357.2h1.6v2.5h-1.6zM1136.4 357.2h1.6v2.5h-1.6zM1141.8 357.2h1.6v2.5h-1.6zM1147.3 357.2h1.6v2.5h-1.6zM1158.2 357.2h1.6v2.5h-1.6zM1180.1 357.2h1.6v2.5h-1.6zM1185.6 357.2h1.6v2.5h-1.6zM1191.1 357.2h1.6v2.5h-1.6zM1196.5 357.2h1.6v2.5h-1.6zM1202.0 357.2h1.6v2.5h-1.6zM1207.5 357.2h1.6v2.5h-1.6zM1223.9 357.2h1.6v2.5h-1.6zM146.3 366.0h1.6v2.5h-1.6zM151.8 366.0h1.6v2.5h-1.6zM157.2 366.0h1.6v2.5h-1.6zM162.7 366.0h1.6v2.5h-1.6zM173.7 366.0h1.6v2.5h-1.6zM179.1 366.0h1.6v2.5h-1.6zM184.6 366.0h1.6v2.5h-1.6zM190.1 366.0h1.6v2.5h-1.6zM195.5 366.0h1.6v2.5h-1.6zM201.0 366.0h1.6v2.5h-1.6zM217.4 366.0h1.6v2.5h-1.6zM222.9 366.0h1.6v2.5h-1.6zM233.8 366.0h1.6v2.5h-1.6zM239.3 366.0h1.6v2.5h-1.6zM244.8 366.0h1.6v2.5h-1.6zM250.2 366.0h1.6v2.5h-1.6zM266.6 366.0h1.6v2.5h-1.6zM283.1 366.0h1.6v2.5h-1.6zM288.5 366.0h1.6v2.5h-1.6zM294.0 366.0h1.6v2.5h-1.6zM299.5 366.0h1.6v2.5h-1.6zM304.9 366.0h1.6v2.5h-1.6zM315.9 366.0h1.6v2.5h-1.6zM321.3 366.0h1.6v2.5h-1.6zM332.3 366.0h1.6v2.5h-1.6zM348.7 366.0h1.6v2.5h-1.6zM354.2 366.0h1.6v2.5h-1.6zM359.6 366.0h1.6v2.5h-1.6zM365.1 366.0h1.6v2.5h-1.6zM370.6 366.0h1.6v2.5h-1.6zM376.0 366.0h1.6v2.5h-1.6zM381.5 366.0h1.6v2.5h-1.6zM387.0 366.0h1.6v2.5h-1.6zM397.9 366.0h1.6v2.5h-1.6zM403.4 366.0h1.6v2.5h-1.6zM408.9 366.0h1.6v2.5h-1.6zM419.8 366.0h1.6v2.5h-1.6zM430.7 366.0h1.6v2.5h-1.6zM436.2 366.0h1.6v2.5h-1.6zM441.7 366.0h1.6v2.5h-1.6zM447.1 366.0h1.6v2.5h-1.6zM452.6 366.0h1.6v2.5h-1.6zM458.1 366.0h1.6v2.5h-1.6zM463.6 366.0h1.6v2.5h-1.6zM469.0 366.0h1.6v2.5h-1.6zM474.5 366.0h1.6v2.5h-1.6zM480.0 366.0h1.6v2.5h-1.6zM485.4 366.0h1.6v2.5h-1.6zM490.9 366.0h1.6v2.5h-1.6zM496.4 366.0h1.6v2.5h-1.6zM501.9 366.0h1.6v2.5h-1.6zM507.3 366.0h1.6v2.5h-1.6zM512.8 366.0h1.6v2.5h-1.6zM518.3 366.0h1.6v2.5h-1.6zM523.7 366.0h1.6v2.5h-1.6zM529.2 366.0h1.6v2.5h-1.6zM534.7 366.0h1.6v2.5h-1.6zM540.1 366.0h1.6v2.5h-1.6zM545.6 366.0h1.6v2.5h-1.6zM551.1 366.0h1.6v2.5h-1.6zM556.5 366.0h1.6v2.5h-1.6zM567.5 366.0h1.6v2.5h-1.6zM573.0 366.0h1.6v2.5h-1.6zM578.4 366.0h1.6v2.5h-1.6zM583.9 366.0h1.6v2.5h-1.6zM589.4 366.0h1.6v2.5h-1.6zM594.8 366.0h1.6v2.5h-1.6zM600.3 366.0h1.6v2.5h-1.6zM605.8 366.0h1.6v2.5h-1.6zM616.7 366.0h1.6v2.5h-1.6zM633.1 366.0h1.6v2.5h-1.6zM638.6 366.0h1.6v2.5h-1.6zM655.0 366.0h1.6v2.5h-1.6zM660.5 366.0h1.6v2.5h-1.6zM666.0 366.0h1.6v2.5h-1.6zM671.4 366.0h1.6v2.5h-1.6zM676.9 366.0h1.6v2.5h-1.6zM682.4 366.0h1.6v2.5h-1.6zM687.8 366.0h1.6v2.5h-1.6zM693.3 366.0h1.6v2.5h-1.6zM704.2 366.0h1.6v2.5h-1.6zM709.7 366.0h1.6v2.5h-1.6zM715.2 366.0h1.6v2.5h-1.6zM720.7 366.0h1.6v2.5h-1.6zM737.1 366.0h1.6v2.5h-1.6zM748.0 366.0h1.6v2.5h-1.6zM753.5 366.0h1.6v2.5h-1.6zM769.9 366.0h1.6v2.5h-1.6zM775.3 366.0h1.6v2.5h-1.6zM780.8 366.0h1.6v2.5h-1.6zM786.3 366.0h1.6v2.5h-1.6zM791.8 366.0h1.6v2.5h-1.6zM797.2 366.0h1.6v2.5h-1.6zM802.7 366.0h1.6v2.5h-1.6zM808.2 366.0h1.6v2.5h-1.6zM813.6 366.0h1.6v2.5h-1.6zM819.1 366.0h1.6v2.5h-1.6zM824.6 366.0h1.6v2.5h-1.6zM830.0 366.0h1.6v2.5h-1.6zM835.5 366.0h1.6v2.5h-1.6zM841.0 366.0h1.6v2.5h-1.6zM846.5 366.0h1.6v2.5h-1.6zM857.4 366.0h1.6v2.5h-1.6zM868.3 366.0h1.6v2.5h-1.6zM873.8 366.0h1.6v2.5h-1.6zM879.3 366.0h1.6v2.5h-1.6zM884.8 366.0h1.6v2.5h-1.6zM890.2 366.0h1.6v2.5h-1.6zM895.7 366.0h1.6v2.5h-1.6zM901.2 366.0h1.6v2.5h-1.6zM917.6 366.0h1.6v2.5h-1.6zM923.0 366.0h1.6v2.5h-1.6zM934.0 366.0h1.6v2.5h-1.6zM939.5 366.0h1.6v2.5h-1.6zM944.9 366.0h1.6v2.5h-1.6zM950.4 366.0h1.6v2.5h-1.6zM955.9 366.0h1.6v2.5h-1.6zM961.3 366.0h1.6v2.5h-1.6zM966.8 366.0h1.6v2.5h-1.6zM977.7 366.0h1.6v2.5h-1.6zM988.7 366.0h1.6v2.5h-1.6zM999.6 366.0h1.6v2.5h-1.6zM1010.6 366.0h1.6v2.5h-1.6zM1016.0 366.0h1.6v2.5h-1.6zM1021.5 366.0h1.6v2.5h-1.6zM1032.4 366.0h1.6v2.5h-1.6zM1037.9 366.0h1.6v2.5h-1.6zM1043.4 366.0h1.6v2.5h-1.6zM1048.8 366.0h1.6v2.5h-1.6zM1054.3 366.0h1.6v2.5h-1.6zM1059.8 366.0h1.6v2.5h-1.6zM1065.3 366.0h1.6v2.5h-1.6zM1070.7 366.0h1.6v2.5h-1.6zM1076.2 366.0h1.6v2.5h-1.6zM1081.7 366.0h1.6v2.5h-1.6zM1087.1 366.0h1.6v2.5h-1.6zM1092.6 366.0h1.6v2.5h-1.6zM1098.1 366.0h1.6v2.5h-1.6zM1103.5 366.0h1.6v2.5h-1.6zM1109.0 366.0h1.6v2.5h-1.6zM1114.5 366.0h1.6v2.5h-1.6zM1120.0 366.0h1.6v2.5h-1.6zM1125.4 366.0h1.6v2.5h-1.6zM1130.9 366.0h1.6v2.5h-1.6zM1136.4 366.0h1.6v2.5h-1.6zM1141.8 366.0h1.6v2.5h-1.6zM1147.3 366.0h1.6v2.5h-1.6zM1158.2 366.0h1.6v2.5h-1.6zM1169.2 366.0h1.6v2.5h-1.6zM1174.7 366.0h1.6v2.5h-1.6zM1185.6 366.0h1.6v2.5h-1.6zM1191.1 366.0h1.6v2.5h-1.6zM1196.5 366.0h1.6v2.5h-1.6zM1207.5 366.0h1.6v2.5h-1.6zM1218.4 366.0h1.6v2.5h-1.6zM1223.9 366.0h1.6v2.5h-1.6zM244.2 257.6h1.6v2.5h-1.6zM249.7 257.6h1.6v2.5h-1.6zM252.4 257.6h1.6v2.5h-1.6zM257.9 257.6h1.6v2.5h-1.6zM260.6 257.6h1.6v2.5h-1.6zM263.4 257.6h1.6v2.5h-1.6zM268.8 257.6h1.6v2.5h-1.6zM274.3 257.6h1.6v2.5h-1.6zM279.8 257.6h1.6v2.5h-1.6zM285.2 257.6h1.6v2.5h-1.6zM288.0 257.6h1.6v2.5h-1.6zM290.7 257.6h1.6v2.5h-1.6zM293.4 257.6h1.6v2.5h-1.6zM296.2 257.6h1.6v2.5h-1.6zM301.6 257.6h1.6v2.5h-1.6zM304.4 257.6h1.6v2.5h-1.6zM307.1 257.6h1.6v2.5h-1.6zM312.6 257.6h1.6v2.5h-1.6zM315.3 257.6h1.6v2.5h-1.6zM318.1 257.6h1.6v2.5h-1.6zM320.8 257.6h1.6v2.5h-1.6zM323.5 257.6h1.6v2.5h-1.6zM326.3 257.6h1.6v2.5h-1.6zM329.0 257.6h1.6v2.5h-1.6zM334.5 257.6h1.6v2.5h-1.6zM337.2 257.6h1.6v2.5h-1.6zM339.9 257.6h1.6v2.5h-1.6zM350.9 257.6h1.6v2.5h-1.6zM361.8 257.6h1.6v2.5h-1.6zM364.6 257.6h1.6v2.5h-1.6zM367.3 257.6h1.6v2.5h-1.6zM370.0 257.6h1.6v2.5h-1.6zM378.2 257.6h1.6v2.5h-1.6zM383.7 257.6h1.6v2.5h-1.6zM386.4 257.6h1.6v2.5h-1.6zM389.2 257.6h1.6v2.5h-1.6zM391.9 257.6h1.6v2.5h-1.6zM397.4 257.6h1.6v2.5h-1.6zM400.1 257.6h1.6v2.5h-1.6zM402.8 257.6h1.6v2.5h-1.6zM405.6 257.6h1.6v2.5h-1.6zM408.3 257.6h1.6v2.5h-1.6zM411.0 257.6h1.6v2.5h-1.6zM416.5 257.6h1.6v2.5h-1.6zM419.3 257.6h1.6v2.5h-1.6zM424.7 257.6h1.6v2.5h-1.6zM430.2 257.6h1.6v2.5h-1.6zM432.9 257.6h1.6v2.5h-1.6zM435.7 257.6h1.6v2.5h-1.6zM438.4 257.6h1.6v2.5h-1.6zM443.9 257.6h1.6v2.5h-1.6zM449.3 257.6h1.6v2.5h-1.6zM452.1 257.6h1.6v2.5h-1.6zM457.5 257.6h1.6v2.5h-1.6zM463.0 257.6h1.6v2.5h-1.6zM465.7 257.6h1.6v2.5h-1.6zM468.5 257.6h1.6v2.5h-1.6zM476.7 257.6h1.6v2.5h-1.6zM479.4 257.6h1.6v2.5h-1.6zM482.2 257.6h1.6v2.5h-1.6zM487.6 257.6h1.6v2.5h-1.6zM490.4 257.6h1.6v2.5h-1.6zM493.1 257.6h1.6v2.5h-1.6zM498.6 257.6h1.6v2.5h-1.6zM504.0 257.6h1.6v2.5h-1.6zM506.8 257.6h1.6v2.5h-1.6zM509.5 257.6h1.6v2.5h-1.6zM512.2 257.6h1.6v2.5h-1.6zM515.0 257.6h1.6v2.5h-1.6zM517.7 257.6h1.6v2.5h-1.6zM520.4 257.6h1.6v2.5h-1.6zM525.9 257.6h1.6v2.5h-1.6zM531.4 257.6h1.6v2.5h-1.6zM534.1 257.6h1.6v2.5h-1.6zM536.9 257.6h1.6v2.5h-1.6zM539.6 257.6h1.6v2.5h-1.6zM545.1 257.6h1.6v2.5h-1.6zM550.5 257.6h1.6v2.5h-1.6zM553.3 257.6h1.6v2.5h-1.6zM556.0 257.6h1.6v2.5h-1.6zM561.5 257.6h1.6v2.5h-1.6zM564.2 257.6h1.6v2.5h-1.6zM569.7 257.6h1.6v2.5h-1.6zM572.4 257.6h1.6v2.5h-1.6zM575.1 257.6h1.6v2.5h-1.6zM583.4 257.6h1.6v2.5h-1.6zM586.1 257.6h1.6v2.5h-1.6zM588.8 257.6h1.6v2.5h-1.6zM591.6 257.6h1.6v2.5h-1.6zM597.0 257.6h1.6v2.5h-1.6zM602.5 257.6h1.6v2.5h-1.6zM605.2 257.6h1.6v2.5h-1.6zM610.7 257.6h1.6v2.5h-1.6zM613.4 257.6h1.6v2.5h-1.6zM616.2 257.6h1.6v2.5h-1.6zM621.6 257.6h1.6v2.5h-1.6zM624.4 257.6h1.6v2.5h-1.6zM627.1 257.6h1.6v2.5h-1.6zM635.3 257.6h1.6v2.5h-1.6zM638.1 257.6h1.6v2.5h-1.6zM640.8 257.6h1.6v2.5h-1.6zM643.5 257.6h1.6v2.5h-1.6zM646.3 257.6h1.6v2.5h-1.6zM649.0 257.6h1.6v2.5h-1.6zM651.7 257.6h1.6v2.5h-1.6zM654.5 257.6h1.6v2.5h-1.6zM662.7 257.6h1.6v2.5h-1.6zM668.1 257.6h1.6v2.5h-1.6zM670.9 257.6h1.6v2.5h-1.6zM681.8 257.6h1.6v2.5h-1.6zM684.5 257.6h1.6v2.5h-1.6zM687.3 257.6h1.6v2.5h-1.6zM690.0 257.6h1.6v2.5h-1.6zM692.8 257.6h1.6v2.5h-1.6zM695.5 257.6h1.6v2.5h-1.6zM698.2 257.6h1.6v2.5h-1.6zM701.0 257.6h1.6v2.5h-1.6zM706.4 257.6h1.6v2.5h-1.6zM709.2 257.6h1.6v2.5h-1.6zM711.9 257.6h1.6v2.5h-1.6zM714.6 257.6h1.6v2.5h-1.6zM717.4 257.6h1.6v2.5h-1.6zM720.1 257.6h1.6v2.5h-1.6zM722.8 257.6h1.6v2.5h-1.6zM731.0 257.6h1.6v2.5h-1.6zM733.8 257.6h1.6v2.5h-1.6zM739.2 257.6h1.6v2.5h-1.6zM742.0 257.6h1.6v2.5h-1.6zM758.4 257.6h1.6v2.5h-1.6zM761.1 257.6h1.6v2.5h-1.6zM763.9 257.6h1.6v2.5h-1.6zM766.6 257.6h1.6v2.5h-1.6zM769.3 257.6h1.6v2.5h-1.6zM772.1 257.6h1.6v2.5h-1.6zM774.8 257.6h1.6v2.5h-1.6zM783.0 257.6h1.6v2.5h-1.6zM785.7 257.6h1.6v2.5h-1.6zM788.5 257.6h1.6v2.5h-1.6zM791.2 257.6h1.6v2.5h-1.6zM793.9 257.6h1.6v2.5h-1.6zM796.7 257.6h1.6v2.5h-1.6zM799.4 257.6h1.6v2.5h-1.6zM804.9 257.6h1.6v2.5h-1.6zM807.6 257.6h1.6v2.5h-1.6zM813.1 257.6h1.6v2.5h-1.6zM815.8 257.6h1.6v2.5h-1.6zM821.3 257.6h1.6v2.5h-1.6zM824.0 257.6h1.6v2.5h-1.6zM826.8 257.6h1.6v2.5h-1.6zM835.0 257.6h1.6v2.5h-1.6zM837.7 257.6h1.6v2.5h-1.6zM840.4 257.6h1.6v2.5h-1.6zM843.2 257.6h1.6v2.5h-1.6zM848.6 257.6h1.6v2.5h-1.6zM851.4 257.6h1.6v2.5h-1.6zM856.9 257.6h1.6v2.5h-1.6zM859.6 257.6h1.6v2.5h-1.6zM865.1 257.6h1.6v2.5h-1.6zM867.8 257.6h1.6v2.5h-1.6zM870.5 257.6h1.6v2.5h-1.6zM876.0 257.6h1.6v2.5h-1.6zM881.5 257.6h1.6v2.5h-1.6zM884.2 257.6h1.6v2.5h-1.6zM886.9 257.6h1.6v2.5h-1.6zM889.7 257.6h1.6v2.5h-1.6zM892.4 257.6h1.6v2.5h-1.6zM895.1 257.6h1.6v2.5h-1.6zM897.9 257.6h1.6v2.5h-1.6zM900.6 257.6h1.6v2.5h-1.6zM903.3 257.6h1.6v2.5h-1.6zM906.1 257.6h1.6v2.5h-1.6zM908.8 257.6h1.6v2.5h-1.6zM917.0 257.6h1.6v2.5h-1.6zM919.8 257.6h1.6v2.5h-1.6zM925.2 257.6h1.6v2.5h-1.6zM928.0 257.6h1.6v2.5h-1.6zM930.7 257.6h1.6v2.5h-1.6zM938.9 257.6h1.6v2.5h-1.6zM941.6 257.6h1.6v2.5h-1.6zM944.4 257.6h1.6v2.5h-1.6zM947.1 257.6h1.6v2.5h-1.6zM952.6 257.6h1.6v2.5h-1.6zM955.3 257.6h1.6v2.5h-1.6zM963.5 257.6h1.6v2.5h-1.6zM966.3 257.6h1.6v2.5h-1.6zM969.0 257.6h1.6v2.5h-1.6zM971.7 257.6h1.6v2.5h-1.6zM977.2 257.6h1.6v2.5h-1.6zM982.7 257.6h1.6v2.5h-1.6zM985.4 257.6h1.6v2.5h-1.6zM988.1 257.6h1.6v2.5h-1.6zM990.9 257.6h1.6v2.5h-1.6zM993.6 257.6h1.6v2.5h-1.6zM996.3 257.6h1.6v2.5h-1.6zM1001.8 257.6h1.6v2.5h-1.6zM1004.5 257.6h1.6v2.5h-1.6zM1007.3 257.6h1.6v2.5h-1.6zM1010.0 257.6h1.6v2.5h-1.6zM1012.7 257.6h1.6v2.5h-1.6zM1015.5 257.6h1.6v2.5h-1.6zM1018.2 257.6h1.6v2.5h-1.6zM1021.0 257.6h1.6v2.5h-1.6zM1029.2 257.6h1.6v2.5h-1.6zM1040.1 257.6h1.6v2.5h-1.6zM1045.6 257.6h1.6v2.5h-1.6zM1048.3 257.6h1.6v2.5h-1.6zM1051.0 257.6h1.6v2.5h-1.6zM294.0 344.6h1.6v2.5h-1.6zM367.8 344.6h1.6v2.5h-1.6zM387.0 344.6h1.6v2.5h-1.6zM411.6 344.6h1.6v2.5h-1.6zM419.8 344.6h1.6v2.5h-1.6zM444.4 344.6h1.6v2.5h-1.6zM523.7 344.6h1.6v2.5h-1.6zM534.7 344.6h1.6v2.5h-1.6zM540.1 344.6h1.6v2.5h-1.6zM586.6 344.6h1.6v2.5h-1.6zM592.1 344.6h1.6v2.5h-1.6zM633.1 344.6h1.6v2.5h-1.6zM638.6 344.6h1.6v2.5h-1.6zM641.3 344.6h1.6v2.5h-1.6zM655.0 344.6h1.6v2.5h-1.6zM674.2 344.6h1.6v2.5h-1.6zM685.1 344.6h1.6v2.5h-1.6zM687.8 344.6h1.6v2.5h-1.6zM698.8 344.6h1.6v2.5h-1.6zM707.0 344.6h1.6v2.5h-1.6zM720.7 344.6h1.6v2.5h-1.6zM734.3 344.6h1.6v2.5h-1.6zM756.2 344.6h1.6v2.5h-1.6zM758.9 344.6h1.6v2.5h-1.6zM767.1 344.6h1.6v2.5h-1.6zM783.6 344.6h1.6v2.5h-1.6zM830.0 344.6h1.6v2.5h-1.6zM879.3 344.6h1.6v2.5h-1.6zM895.7 344.6h1.6v2.5h-1.6zM925.8 344.6h1.6v2.5h-1.6zM966.8 344.6h1.6v2.5h-1.6zM1018.8 344.6h1.6v2.5h-1.6zM1027.0 344.6h1.6v2.5h-1.6zM1046.1 344.6h1.6v2.5h-1.6zM1048.8 344.6h1.6v2.5h-1.6zM411.6 333.5h1.6v2.5h-1.6zM414.3 333.5h1.6v2.5h-1.6zM417.1 333.5h1.6v2.5h-1.6zM419.8 333.5h1.6v2.5h-1.6zM422.5 333.5h1.6v2.5h-1.6zM425.3 333.5h1.6v2.5h-1.6zM428.0 333.5h1.6v2.5h-1.6z" fill="#d8702a"/><path d="M146.3 374.9h1.6v2.5h-1.6zM149.0 374.9h1.6v2.5h-1.6zM151.8 374.9h1.6v2.5h-1.6zM154.5 374.9h1.6v2.5h-1.6zM157.2 374.9h1.6v2.5h-1.6zM162.7 374.9h1.6v2.5h-1.6zM165.4 374.9h1.6v2.5h-1.6zM168.2 374.9h1.6v2.5h-1.6zM176.4 374.9h1.6v2.5h-1.6zM179.1 374.9h1.6v2.5h-1.6zM181.9 374.9h1.6v2.5h-1.6zM184.6 374.9h1.6v2.5h-1.6zM187.3 374.9h1.6v2.5h-1.6zM190.1 374.9h1.6v2.5h-1.6zM192.8 374.9h1.6v2.5h-1.6zM195.5 374.9h1.6v2.5h-1.6zM203.7 374.9h1.6v2.5h-1.6zM206.5 374.9h1.6v2.5h-1.6zM211.9 374.9h1.6v2.5h-1.6zM214.7 374.9h1.6v2.5h-1.6zM217.4 374.9h1.6v2.5h-1.6zM220.1 374.9h1.6v2.5h-1.6zM222.9 374.9h1.6v2.5h-1.6zM225.6 374.9h1.6v2.5h-1.6zM228.4 374.9h1.6v2.5h-1.6zM231.1 374.9h1.6v2.5h-1.6zM233.8 374.9h1.6v2.5h-1.6zM236.6 374.9h1.6v2.5h-1.6zM239.3 374.9h1.6v2.5h-1.6zM242.0 374.9h1.6v2.5h-1.6zM244.8 374.9h1.6v2.5h-1.6zM247.5 374.9h1.6v2.5h-1.6zM250.2 374.9h1.6v2.5h-1.6zM253.0 374.9h1.6v2.5h-1.6zM255.7 374.9h1.6v2.5h-1.6zM258.4 374.9h1.6v2.5h-1.6zM263.9 374.9h1.6v2.5h-1.6zM272.1 374.9h1.6v2.5h-1.6zM274.8 374.9h1.6v2.5h-1.6zM280.3 374.9h1.6v2.5h-1.6zM285.8 374.9h1.6v2.5h-1.6zM288.5 374.9h1.6v2.5h-1.6zM296.7 374.9h1.6v2.5h-1.6zM304.9 374.9h1.6v2.5h-1.6zM307.7 374.9h1.6v2.5h-1.6zM310.4 374.9h1.6v2.5h-1.6zM321.3 374.9h1.6v2.5h-1.6zM326.8 374.9h1.6v2.5h-1.6zM329.5 374.9h1.6v2.5h-1.6zM332.3 374.9h1.6v2.5h-1.6zM335.0 374.9h1.6v2.5h-1.6zM337.8 374.9h1.6v2.5h-1.6zM340.5 374.9h1.6v2.5h-1.6zM343.2 374.9h1.6v2.5h-1.6zM348.7 374.9h1.6v2.5h-1.6zM351.4 374.9h1.6v2.5h-1.6zM354.2 374.9h1.6v2.5h-1.6zM356.9 374.9h1.6v2.5h-1.6zM359.6 374.9h1.6v2.5h-1.6zM362.4 374.9h1.6v2.5h-1.6zM370.6 374.9h1.6v2.5h-1.6zM373.3 374.9h1.6v2.5h-1.6zM376.0 374.9h1.6v2.5h-1.6zM378.8 374.9h1.6v2.5h-1.6zM384.2 374.9h1.6v2.5h-1.6zM387.0 374.9h1.6v2.5h-1.6zM389.7 374.9h1.6v2.5h-1.6zM395.2 374.9h1.6v2.5h-1.6zM403.4 374.9h1.6v2.5h-1.6zM406.1 374.9h1.6v2.5h-1.6zM408.9 374.9h1.6v2.5h-1.6zM411.6 374.9h1.6v2.5h-1.6zM417.1 374.9h1.6v2.5h-1.6zM419.8 374.9h1.6v2.5h-1.6zM422.5 374.9h1.6v2.5h-1.6zM425.3 374.9h1.6v2.5h-1.6zM428.0 374.9h1.6v2.5h-1.6zM433.5 374.9h1.6v2.5h-1.6zM436.2 374.9h1.6v2.5h-1.6zM438.9 374.9h1.6v2.5h-1.6zM441.7 374.9h1.6v2.5h-1.6zM444.4 374.9h1.6v2.5h-1.6zM447.1 374.9h1.6v2.5h-1.6zM449.9 374.9h1.6v2.5h-1.6zM452.6 374.9h1.6v2.5h-1.6zM455.4 374.9h1.6v2.5h-1.6zM458.1 374.9h1.6v2.5h-1.6zM460.8 374.9h1.6v2.5h-1.6zM463.6 374.9h1.6v2.5h-1.6zM466.3 374.9h1.6v2.5h-1.6zM471.8 374.9h1.6v2.5h-1.6zM480.0 374.9h1.6v2.5h-1.6zM482.7 374.9h1.6v2.5h-1.6zM490.9 374.9h1.6v2.5h-1.6zM493.6 374.9h1.6v2.5h-1.6zM496.4 374.9h1.6v2.5h-1.6zM501.9 374.9h1.6v2.5h-1.6zM504.6 374.9h1.6v2.5h-1.6zM507.3 374.9h1.6v2.5h-1.6zM510.1 374.9h1.6v2.5h-1.6zM515.5 374.9h1.6v2.5h-1.6zM521.0 374.9h1.6v2.5h-1.6zM529.2 374.9h1.6v2.5h-1.6zM534.7 374.9h1.6v2.5h-1.6zM537.4 374.9h1.6v2.5h-1.6zM540.1 374.9h1.6v2.5h-1.6zM542.9 374.9h1.6v2.5h-1.6zM545.6 374.9h1.6v2.5h-1.6zM548.3 374.9h1.6v2.5h-1.6zM551.1 374.9h1.6v2.5h-1.6zM553.8 374.9h1.6v2.5h-1.6zM556.5 374.9h1.6v2.5h-1.6zM562.0 374.9h1.6v2.5h-1.6zM570.2 374.9h1.6v2.5h-1.6zM581.2 374.9h1.6v2.5h-1.6zM583.9 374.9h1.6v2.5h-1.6zM586.6 374.9h1.6v2.5h-1.6zM592.1 374.9h1.6v2.5h-1.6zM594.8 374.9h1.6v2.5h-1.6zM597.6 374.9h1.6v2.5h-1.6zM600.3 374.9h1.6v2.5h-1.6zM603.0 374.9h1.6v2.5h-1.6zM605.8 374.9h1.6v2.5h-1.6zM611.2 374.9h1.6v2.5h-1.6zM616.7 374.9h1.6v2.5h-1.6zM619.5 374.9h1.6v2.5h-1.6zM622.2 374.9h1.6v2.5h-1.6zM624.9 374.9h1.6v2.5h-1.6zM627.7 374.9h1.6v2.5h-1.6zM638.6 374.9h1.6v2.5h-1.6zM646.8 374.9h1.6v2.5h-1.6zM652.3 374.9h1.6v2.5h-1.6zM657.7 374.9h1.6v2.5h-1.6zM663.2 374.9h1.6v2.5h-1.6zM666.0 374.9h1.6v2.5h-1.6zM668.7 374.9h1.6v2.5h-1.6zM674.2 374.9h1.6v2.5h-1.6zM676.9 374.9h1.6v2.5h-1.6zM679.6 374.9h1.6v2.5h-1.6zM682.4 374.9h1.6v2.5h-1.6zM690.6 374.9h1.6v2.5h-1.6zM693.3 374.9h1.6v2.5h-1.6zM696.0 374.9h1.6v2.5h-1.6zM698.8 374.9h1.6v2.5h-1.6zM701.5 374.9h1.6v2.5h-1.6zM704.2 374.9h1.6v2.5h-1.6zM707.0 374.9h1.6v2.5h-1.6zM709.7 374.9h1.6v2.5h-1.6zM715.2 374.9h1.6v2.5h-1.6zM717.9 374.9h1.6v2.5h-1.6zM726.1 374.9h1.6v2.5h-1.6zM728.9 374.9h1.6v2.5h-1.6zM731.6 374.9h1.6v2.5h-1.6zM734.3 374.9h1.6v2.5h-1.6zM737.1 374.9h1.6v2.5h-1.6zM739.8 374.9h1.6v2.5h-1.6zM742.5 374.9h1.6v2.5h-1.6zM745.3 374.9h1.6v2.5h-1.6zM748.0 374.9h1.6v2.5h-1.6zM756.2 374.9h1.6v2.5h-1.6zM758.9 374.9h1.6v2.5h-1.6zM761.7 374.9h1.6v2.5h-1.6zM764.4 374.9h1.6v2.5h-1.6zM767.1 374.9h1.6v2.5h-1.6zM769.9 374.9h1.6v2.5h-1.6zM772.6 374.9h1.6v2.5h-1.6zM778.1 374.9h1.6v2.5h-1.6zM780.8 374.9h1.6v2.5h-1.6zM783.6 374.9h1.6v2.5h-1.6zM789.0 374.9h1.6v2.5h-1.6zM791.8 374.9h1.6v2.5h-1.6zM794.5 374.9h1.6v2.5h-1.6zM797.2 374.9h1.6v2.5h-1.6zM800.0 374.9h1.6v2.5h-1.6zM810.9 374.9h1.6v2.5h-1.6zM813.6 374.9h1.6v2.5h-1.6zM821.8 374.9h1.6v2.5h-1.6zM824.6 374.9h1.6v2.5h-1.6zM827.3 374.9h1.6v2.5h-1.6zM830.0 374.9h1.6v2.5h-1.6zM843.7 374.9h1.6v2.5h-1.6zM846.5 374.9h1.6v2.5h-1.6zM849.2 374.9h1.6v2.5h-1.6zM851.9 374.9h1.6v2.5h-1.6zM854.7 374.9h1.6v2.5h-1.6zM862.9 374.9h1.6v2.5h-1.6zM868.3 374.9h1.6v2.5h-1.6zM871.1 374.9h1.6v2.5h-1.6zM873.8 374.9h1.6v2.5h-1.6zM879.3 374.9h1.6v2.5h-1.6zM884.8 374.9h1.6v2.5h-1.6zM887.5 374.9h1.6v2.5h-1.6zM890.2 374.9h1.6v2.5h-1.6zM893.0 374.9h1.6v2.5h-1.6zM895.7 374.9h1.6v2.5h-1.6zM898.4 374.9h1.6v2.5h-1.6zM901.2 374.9h1.6v2.5h-1.6zM903.9 374.9h1.6v2.5h-1.6zM906.6 374.9h1.6v2.5h-1.6zM909.4 374.9h1.6v2.5h-1.6zM912.1 374.9h1.6v2.5h-1.6zM914.8 374.9h1.6v2.5h-1.6zM917.6 374.9h1.6v2.5h-1.6zM920.3 374.9h1.6v2.5h-1.6zM923.0 374.9h1.6v2.5h-1.6zM925.8 374.9h1.6v2.5h-1.6zM931.2 374.9h1.6v2.5h-1.6zM936.7 374.9h1.6v2.5h-1.6zM939.5 374.9h1.6v2.5h-1.6zM942.2 374.9h1.6v2.5h-1.6zM950.4 374.9h1.6v2.5h-1.6zM953.1 374.9h1.6v2.5h-1.6zM955.9 374.9h1.6v2.5h-1.6zM958.6 374.9h1.6v2.5h-1.6zM961.3 374.9h1.6v2.5h-1.6zM964.1 374.9h1.6v2.5h-1.6zM966.8 374.9h1.6v2.5h-1.6zM972.3 374.9h1.6v2.5h-1.6zM975.0 374.9h1.6v2.5h-1.6zM977.7 374.9h1.6v2.5h-1.6zM980.5 374.9h1.6v2.5h-1.6zM983.2 374.9h1.6v2.5h-1.6zM985.9 374.9h1.6v2.5h-1.6zM994.1 374.9h1.6v2.5h-1.6zM996.9 374.9h1.6v2.5h-1.6zM1002.4 374.9h1.6v2.5h-1.6zM1007.8 374.9h1.6v2.5h-1.6zM1010.6 374.9h1.6v2.5h-1.6zM1016.0 374.9h1.6v2.5h-1.6zM1021.5 374.9h1.6v2.5h-1.6zM1024.2 374.9h1.6v2.5h-1.6zM1027.0 374.9h1.6v2.5h-1.6zM1029.7 374.9h1.6v2.5h-1.6zM1032.4 374.9h1.6v2.5h-1.6zM1037.9 374.9h1.6v2.5h-1.6zM1040.6 374.9h1.6v2.5h-1.6zM1043.4 374.9h1.6v2.5h-1.6zM1048.8 374.9h1.6v2.5h-1.6zM1051.6 374.9h1.6v2.5h-1.6zM1054.3 374.9h1.6v2.5h-1.6zM1059.8 374.9h1.6v2.5h-1.6zM1076.2 374.9h1.6v2.5h-1.6zM1092.6 374.9h1.6v2.5h-1.6zM1098.1 374.9h1.6v2.5h-1.6zM1109.0 374.9h1.6v2.5h-1.6zM1114.5 374.9h1.6v2.5h-1.6zM1120.0 374.9h1.6v2.5h-1.6zM1125.4 374.9h1.6v2.5h-1.6zM1130.9 374.9h1.6v2.5h-1.6zM1136.4 374.9h1.6v2.5h-1.6zM1141.8 374.9h1.6v2.5h-1.6zM1147.3 374.9h1.6v2.5h-1.6zM1152.8 374.9h1.6v2.5h-1.6zM1158.2 374.9h1.6v2.5h-1.6zM1169.2 374.9h1.6v2.5h-1.6zM1180.1 374.9h1.6v2.5h-1.6zM1185.6 374.9h1.6v2.5h-1.6zM1202.0 374.9h1.6v2.5h-1.6zM1207.5 374.9h1.6v2.5h-1.6zM1212.9 374.9h1.6v2.5h-1.6zM1218.4 374.9h1.6v2.5h-1.6zM146.3 401.3h1.6v2.5h-1.6zM157.2 401.3h1.6v2.5h-1.6zM162.7 401.3h1.6v2.5h-1.6zM168.2 401.3h1.6v2.5h-1.6zM173.7 401.3h1.6v2.5h-1.6zM179.1 401.3h1.6v2.5h-1.6zM184.6 401.3h1.6v2.5h-1.6zM190.1 401.3h1.6v2.5h-1.6zM195.5 401.3h1.6v2.5h-1.6zM201.0 401.3h1.6v2.5h-1.6zM206.5 401.3h1.6v2.5h-1.6zM211.9 401.3h1.6v2.5h-1.6zM217.4 401.3h1.6v2.5h-1.6zM222.9 401.3h1.6v2.5h-1.6zM228.4 401.3h1.6v2.5h-1.6zM233.8 401.3h1.6v2.5h-1.6zM239.3 401.3h1.6v2.5h-1.6zM244.8 401.3h1.6v2.5h-1.6zM250.2 401.3h1.6v2.5h-1.6zM255.7 401.3h1.6v2.5h-1.6zM261.2 401.3h1.6v2.5h-1.6zM266.6 401.3h1.6v2.5h-1.6zM272.1 401.3h1.6v2.5h-1.6zM277.6 401.3h1.6v2.5h-1.6zM283.1 401.3h1.6v2.5h-1.6zM288.5 401.3h1.6v2.5h-1.6zM294.0 401.3h1.6v2.5h-1.6zM299.5 401.3h1.6v2.5h-1.6zM304.9 401.3h1.6v2.5h-1.6zM310.4 401.3h1.6v2.5h-1.6zM315.9 401.3h1.6v2.5h-1.6zM321.3 401.3h1.6v2.5h-1.6zM326.8 401.3h1.6v2.5h-1.6zM332.3 401.3h1.6v2.5h-1.6zM337.8 401.3h1.6v2.5h-1.6zM343.2 401.3h1.6v2.5h-1.6zM348.7 401.3h1.6v2.5h-1.6zM354.2 401.3h1.6v2.5h-1.6zM359.6 401.3h1.6v2.5h-1.6zM365.1 401.3h1.6v2.5h-1.6zM370.6 401.3h1.6v2.5h-1.6zM381.5 401.3h1.6v2.5h-1.6zM397.9 401.3h1.6v2.5h-1.6zM403.4 401.3h1.6v2.5h-1.6zM408.9 401.3h1.6v2.5h-1.6zM419.8 401.3h1.6v2.5h-1.6zM436.2 401.3h1.6v2.5h-1.6zM441.7 401.3h1.6v2.5h-1.6zM452.6 401.3h1.6v2.5h-1.6zM458.1 401.3h1.6v2.5h-1.6zM463.6 401.3h1.6v2.5h-1.6zM469.0 401.3h1.6v2.5h-1.6zM480.0 401.3h1.6v2.5h-1.6zM485.4 401.3h1.6v2.5h-1.6zM490.9 401.3h1.6v2.5h-1.6zM496.4 401.3h1.6v2.5h-1.6zM507.3 401.3h1.6v2.5h-1.6zM512.8 401.3h1.6v2.5h-1.6zM518.3 401.3h1.6v2.5h-1.6zM523.7 401.3h1.6v2.5h-1.6zM529.2 401.3h1.6v2.5h-1.6zM534.7 401.3h1.6v2.5h-1.6zM540.1 401.3h1.6v2.5h-1.6zM551.1 401.3h1.6v2.5h-1.6zM562.0 401.3h1.6v2.5h-1.6zM567.5 401.3h1.6v2.5h-1.6zM573.0 401.3h1.6v2.5h-1.6zM578.4 401.3h1.6v2.5h-1.6zM583.9 401.3h1.6v2.5h-1.6zM589.4 401.3h1.6v2.5h-1.6zM600.3 401.3h1.6v2.5h-1.6zM605.8 401.3h1.6v2.5h-1.6zM616.7 401.3h1.6v2.5h-1.6zM627.7 401.3h1.6v2.5h-1.6zM633.1 401.3h1.6v2.5h-1.6zM638.6 401.3h1.6v2.5h-1.6zM644.1 401.3h1.6v2.5h-1.6zM655.0 401.3h1.6v2.5h-1.6zM660.5 401.3h1.6v2.5h-1.6zM666.0 401.3h1.6v2.5h-1.6zM671.4 401.3h1.6v2.5h-1.6zM676.9 401.3h1.6v2.5h-1.6zM682.4 401.3h1.6v2.5h-1.6zM687.8 401.3h1.6v2.5h-1.6zM693.3 401.3h1.6v2.5h-1.6zM698.8 401.3h1.6v2.5h-1.6zM704.2 401.3h1.6v2.5h-1.6zM715.2 401.3h1.6v2.5h-1.6zM720.7 401.3h1.6v2.5h-1.6zM726.1 401.3h1.6v2.5h-1.6zM731.6 401.3h1.6v2.5h-1.6zM737.1 401.3h1.6v2.5h-1.6zM742.5 401.3h1.6v2.5h-1.6zM748.0 401.3h1.6v2.5h-1.6zM753.5 401.3h1.6v2.5h-1.6zM758.9 401.3h1.6v2.5h-1.6zM769.9 401.3h1.6v2.5h-1.6zM775.3 401.3h1.6v2.5h-1.6zM780.8 401.3h1.6v2.5h-1.6zM786.3 401.3h1.6v2.5h-1.6zM791.8 401.3h1.6v2.5h-1.6zM797.2 401.3h1.6v2.5h-1.6zM802.7 401.3h1.6v2.5h-1.6zM808.2 401.3h1.6v2.5h-1.6zM813.6 401.3h1.6v2.5h-1.6zM819.1 401.3h1.6v2.5h-1.6zM824.6 401.3h1.6v2.5h-1.6zM830.0 401.3h1.6v2.5h-1.6zM835.5 401.3h1.6v2.5h-1.6zM841.0 401.3h1.6v2.5h-1.6zM846.5 401.3h1.6v2.5h-1.6zM857.4 401.3h1.6v2.5h-1.6zM862.9 401.3h1.6v2.5h-1.6zM868.3 401.3h1.6v2.5h-1.6zM873.8 401.3h1.6v2.5h-1.6zM884.8 401.3h1.6v2.5h-1.6zM890.2 401.3h1.6v2.5h-1.6zM895.7 401.3h1.6v2.5h-1.6zM901.2 401.3h1.6v2.5h-1.6zM906.6 401.3h1.6v2.5h-1.6zM912.1 401.3h1.6v2.5h-1.6zM917.6 401.3h1.6v2.5h-1.6zM923.0 401.3h1.6v2.5h-1.6zM928.5 401.3h1.6v2.5h-1.6zM939.5 401.3h1.6v2.5h-1.6zM944.9 401.3h1.6v2.5h-1.6zM955.9 401.3h1.6v2.5h-1.6zM961.3 401.3h1.6v2.5h-1.6zM966.8 401.3h1.6v2.5h-1.6zM972.3 401.3h1.6v2.5h-1.6zM977.7 401.3h1.6v2.5h-1.6zM983.2 401.3h1.6v2.5h-1.6zM988.7 401.3h1.6v2.5h-1.6zM994.1 401.3h1.6v2.5h-1.6zM1005.1 401.3h1.6v2.5h-1.6zM1010.6 401.3h1.6v2.5h-1.6zM1016.0 401.3h1.6v2.5h-1.6zM1021.5 401.3h1.6v2.5h-1.6zM1027.0 401.3h1.6v2.5h-1.6zM1032.4 401.3h1.6v2.5h-1.6zM1037.9 401.3h1.6v2.5h-1.6zM1043.4 401.3h1.6v2.5h-1.6zM1048.8 401.3h1.6v2.5h-1.6zM1054.3 401.3h1.6v2.5h-1.6zM1065.3 401.3h1.6v2.5h-1.6zM1070.7 401.3h1.6v2.5h-1.6zM1076.2 401.3h1.6v2.5h-1.6zM1087.1 401.3h1.6v2.5h-1.6zM1092.6 401.3h1.6v2.5h-1.6zM1098.1 401.3h1.6v2.5h-1.6zM1103.5 401.3h1.6v2.5h-1.6zM1109.0 401.3h1.6v2.5h-1.6zM1114.5 401.3h1.6v2.5h-1.6zM1120.0 401.3h1.6v2.5h-1.6zM1125.4 401.3h1.6v2.5h-1.6zM1130.9 401.3h1.6v2.5h-1.6zM1136.4 401.3h1.6v2.5h-1.6zM1141.8 401.3h1.6v2.5h-1.6zM1152.8 401.3h1.6v2.5h-1.6zM1158.2 401.3h1.6v2.5h-1.6zM1163.7 401.3h1.6v2.5h-1.6zM1169.2 401.3h1.6v2.5h-1.6zM1174.7 401.3h1.6v2.5h-1.6zM1180.1 401.3h1.6v2.5h-1.6zM1185.6 401.3h1.6v2.5h-1.6zM1191.1 401.3h1.6v2.5h-1.6zM1202.0 401.3h1.6v2.5h-1.6zM1212.9 401.3h1.6v2.5h-1.6zM1218.4 401.3h1.6v2.5h-1.6zM1223.9 401.3h1.6v2.5h-1.6z" fill="#e0702a"/><path d="M146.3 392.5h1.6v2.5h-1.6zM151.8 392.5h1.6v2.5h-1.6zM162.7 392.5h1.6v2.5h-1.6zM168.2 392.5h1.6v2.5h-1.6zM184.6 392.5h1.6v2.5h-1.6zM190.1 392.5h1.6v2.5h-1.6zM195.5 392.5h1.6v2.5h-1.6zM206.5 392.5h1.6v2.5h-1.6zM222.9 392.5h1.6v2.5h-1.6zM228.4 392.5h1.6v2.5h-1.6zM244.8 392.5h1.6v2.5h-1.6zM255.7 392.5h1.6v2.5h-1.6zM261.2 392.5h1.6v2.5h-1.6zM266.6 392.5h1.6v2.5h-1.6zM294.0 392.5h1.6v2.5h-1.6zM299.5 392.5h1.6v2.5h-1.6zM304.9 392.5h1.6v2.5h-1.6zM321.3 392.5h1.6v2.5h-1.6zM326.8 392.5h1.6v2.5h-1.6zM332.3 392.5h1.6v2.5h-1.6zM337.8 392.5h1.6v2.5h-1.6zM348.7 392.5h1.6v2.5h-1.6zM381.5 392.5h1.6v2.5h-1.6zM387.0 392.5h1.6v2.5h-1.6zM392.4 392.5h1.6v2.5h-1.6zM403.4 392.5h1.6v2.5h-1.6zM408.9 392.5h1.6v2.5h-1.6zM419.8 392.5h1.6v2.5h-1.6zM425.3 392.5h1.6v2.5h-1.6zM430.7 392.5h1.6v2.5h-1.6zM436.2 392.5h1.6v2.5h-1.6zM441.7 392.5h1.6v2.5h-1.6zM463.6 392.5h1.6v2.5h-1.6zM469.0 392.5h1.6v2.5h-1.6zM474.5 392.5h1.6v2.5h-1.6zM480.0 392.5h1.6v2.5h-1.6zM490.9 392.5h1.6v2.5h-1.6zM496.4 392.5h1.6v2.5h-1.6zM501.9 392.5h1.6v2.5h-1.6zM534.7 392.5h1.6v2.5h-1.6zM545.6 392.5h1.6v2.5h-1.6zM551.1 392.5h1.6v2.5h-1.6zM556.5 392.5h1.6v2.5h-1.6zM567.5 392.5h1.6v2.5h-1.6zM573.0 392.5h1.6v2.5h-1.6zM578.4 392.5h1.6v2.5h-1.6zM583.9 392.5h1.6v2.5h-1.6zM594.8 392.5h1.6v2.5h-1.6zM600.3 392.5h1.6v2.5h-1.6zM605.8 392.5h1.6v2.5h-1.6zM616.7 392.5h1.6v2.5h-1.6zM622.2 392.5h1.6v2.5h-1.6zM644.1 392.5h1.6v2.5h-1.6zM649.5 392.5h1.6v2.5h-1.6zM671.4 392.5h1.6v2.5h-1.6zM676.9 392.5h1.6v2.5h-1.6zM682.4 392.5h1.6v2.5h-1.6zM687.8 392.5h1.6v2.5h-1.6zM698.8 392.5h1.6v2.5h-1.6zM709.7 392.5h1.6v2.5h-1.6zM720.7 392.5h1.6v2.5h-1.6zM726.1 392.5h1.6v2.5h-1.6zM742.5 392.5h1.6v2.5h-1.6zM748.0 392.5h1.6v2.5h-1.6zM758.9 392.5h1.6v2.5h-1.6zM764.4 392.5h1.6v2.5h-1.6zM769.9 392.5h1.6v2.5h-1.6zM775.3 392.5h1.6v2.5h-1.6zM780.8 392.5h1.6v2.5h-1.6zM786.3 392.5h1.6v2.5h-1.6zM797.2 392.5h1.6v2.5h-1.6zM802.7 392.5h1.6v2.5h-1.6zM808.2 392.5h1.6v2.5h-1.6zM819.1 392.5h1.6v2.5h-1.6zM824.6 392.5h1.6v2.5h-1.6zM830.0 392.5h1.6v2.5h-1.6zM841.0 392.5h1.6v2.5h-1.6zM846.5 392.5h1.6v2.5h-1.6zM851.9 392.5h1.6v2.5h-1.6zM857.4 392.5h1.6v2.5h-1.6zM862.9 392.5h1.6v2.5h-1.6zM873.8 392.5h1.6v2.5h-1.6zM879.3 392.5h1.6v2.5h-1.6zM890.2 392.5h1.6v2.5h-1.6zM895.7 392.5h1.6v2.5h-1.6zM901.2 392.5h1.6v2.5h-1.6zM912.1 392.5h1.6v2.5h-1.6zM917.6 392.5h1.6v2.5h-1.6zM923.0 392.5h1.6v2.5h-1.6zM928.5 392.5h1.6v2.5h-1.6zM944.9 392.5h1.6v2.5h-1.6zM950.4 392.5h1.6v2.5h-1.6zM961.3 392.5h1.6v2.5h-1.6zM966.8 392.5h1.6v2.5h-1.6zM977.7 392.5h1.6v2.5h-1.6zM988.7 392.5h1.6v2.5h-1.6zM999.6 392.5h1.6v2.5h-1.6zM1005.1 392.5h1.6v2.5h-1.6zM1010.6 392.5h1.6v2.5h-1.6zM1016.0 392.5h1.6v2.5h-1.6zM1032.4 392.5h1.6v2.5h-1.6zM1043.4 392.5h1.6v2.5h-1.6zM1048.8 392.5h1.6v2.5h-1.6zM1054.3 392.5h1.6v2.5h-1.6zM1059.8 392.5h1.6v2.5h-1.6zM1065.3 392.5h1.6v2.5h-1.6zM1076.2 392.5h1.6v2.5h-1.6zM1081.7 392.5h1.6v2.5h-1.6zM1098.1 392.5h1.6v2.5h-1.6zM1103.5 392.5h1.6v2.5h-1.6zM1120.0 392.5h1.6v2.5h-1.6zM1125.4 392.5h1.6v2.5h-1.6zM1136.4 392.5h1.6v2.5h-1.6zM1147.3 392.5h1.6v2.5h-1.6zM1158.2 392.5h1.6v2.5h-1.6zM1163.7 392.5h1.6v2.5h-1.6zM1169.2 392.5h1.6v2.5h-1.6zM1174.7 392.5h1.6v2.5h-1.6zM1191.1 392.5h1.6v2.5h-1.6zM1196.5 392.5h1.6v2.5h-1.6zM1202.0 392.5h1.6v2.5h-1.6zM1207.5 392.5h1.6v2.5h-1.6zM1212.9 392.5h1.6v2.5h-1.6zM1218.4 392.5h1.6v2.5h-1.6zM1223.9 392.5h1.6v2.5h-1.6z" fill="#b86a3a"/><path d="M1055.0 283.0h175.0v3.4h-175.0zM1054.3 322.6h8.8v3.4h-8.8zM1065.3 322.6h8.8v3.4h-8.8zM1076.2 322.6h8.8v3.4h-8.8zM1087.1 322.6h8.8v3.4h-8.8zM1098.1 322.6h8.8v3.4h-8.8zM1109.0 322.6h8.8v3.4h-8.8zM1120.0 322.6h8.8v3.4h-8.8zM1130.9 322.6h8.8v3.4h-8.8zM1141.8 322.6h8.8v3.4h-8.8zM1152.8 322.6h8.8v3.4h-8.8zM1163.7 322.6h8.8v3.4h-8.8zM1174.7 322.6h8.8v3.4h-8.8zM1185.6 322.6h8.8v3.4h-8.8zM1196.5 322.6h8.8v3.4h-8.8zM1207.5 322.6h8.8v3.4h-8.8zM1218.4 322.6h8.8v3.4h-8.8z" fill="#f0731e"/><path d="M1054.3 314.2h1.6v2.4h-1.6zM1057.1 314.2h1.6v2.4h-1.6zM1059.8 314.2h1.6v2.4h-1.6zM1062.5 314.2h1.6v2.4h-1.6zM1065.3 314.2h1.6v2.4h-1.6zM1068.0 314.2h1.6v2.4h-1.6zM1073.5 314.2h1.6v2.4h-1.6zM1076.2 314.2h1.6v2.4h-1.6zM1081.7 314.2h1.6v2.4h-1.6zM1084.4 314.2h1.6v2.4h-1.6zM1087.1 314.2h1.6v2.4h-1.6zM1089.9 314.2h1.6v2.4h-1.6zM1092.6 314.2h1.6v2.4h-1.6zM1095.3 314.2h1.6v2.4h-1.6zM1098.1 314.2h1.6v2.4h-1.6zM1100.8 314.2h1.6v2.4h-1.6zM1103.5 314.2h1.6v2.4h-1.6zM1111.8 314.2h1.6v2.4h-1.6zM1114.5 314.2h1.6v2.4h-1.6zM1117.2 314.2h1.6v2.4h-1.6zM1120.0 314.2h1.6v2.4h-1.6zM1125.4 314.2h1.6v2.4h-1.6zM1128.2 314.2h1.6v2.4h-1.6zM1130.9 314.2h1.6v2.4h-1.6zM1136.4 314.2h1.6v2.4h-1.6zM1139.1 314.2h1.6v2.4h-1.6zM1141.8 314.2h1.6v2.4h-1.6zM1144.6 314.2h1.6v2.4h-1.6zM1152.8 314.2h1.6v2.4h-1.6zM1155.5 314.2h1.6v2.4h-1.6zM1158.2 314.2h1.6v2.4h-1.6zM1161.0 314.2h1.6v2.4h-1.6zM1169.2 314.2h1.6v2.4h-1.6zM1171.9 314.2h1.6v2.4h-1.6zM1174.7 314.2h1.6v2.4h-1.6zM1177.4 314.2h1.6v2.4h-1.6zM1180.1 314.2h1.6v2.4h-1.6zM1185.6 314.2h1.6v2.4h-1.6zM1188.3 314.2h1.6v2.4h-1.6zM1191.1 314.2h1.6v2.4h-1.6zM1196.5 314.2h1.6v2.4h-1.6zM1199.3 314.2h1.6v2.4h-1.6zM1202.0 314.2h1.6v2.4h-1.6zM1204.7 314.2h1.6v2.4h-1.6zM1207.5 314.2h1.6v2.4h-1.6zM1210.2 314.2h1.6v2.4h-1.6zM1212.9 314.2h1.6v2.4h-1.6zM1215.7 314.2h1.6v2.4h-1.6zM1218.4 314.2h1.6v2.4h-1.6zM1221.2 314.2h1.6v2.4h-1.6zM1223.9 314.2h1.6v2.4h-1.6zM1226.6 314.2h1.6v2.4h-1.6zM1054.3 344.8h1.6v2.4h-1.6zM1057.1 344.8h1.6v2.4h-1.6zM1059.8 344.8h1.6v2.4h-1.6zM1062.5 344.8h1.6v2.4h-1.6zM1065.3 344.8h1.6v2.4h-1.6zM1070.7 344.8h1.6v2.4h-1.6zM1076.2 344.8h1.6v2.4h-1.6zM1078.9 344.8h1.6v2.4h-1.6zM1081.7 344.8h1.6v2.4h-1.6zM1084.4 344.8h1.6v2.4h-1.6zM1087.1 344.8h1.6v2.4h-1.6zM1092.6 344.8h1.6v2.4h-1.6zM1095.3 344.8h1.6v2.4h-1.6zM1098.1 344.8h1.6v2.4h-1.6zM1100.8 344.8h1.6v2.4h-1.6zM1103.5 344.8h1.6v2.4h-1.6zM1106.3 344.8h1.6v2.4h-1.6zM1109.0 344.8h1.6v2.4h-1.6zM1111.8 344.8h1.6v2.4h-1.6zM1114.5 344.8h1.6v2.4h-1.6zM1117.2 344.8h1.6v2.4h-1.6zM1120.0 344.8h1.6v2.4h-1.6zM1122.7 344.8h1.6v2.4h-1.6zM1125.4 344.8h1.6v2.4h-1.6zM1128.2 344.8h1.6v2.4h-1.6zM1130.9 344.8h1.6v2.4h-1.6zM1133.6 344.8h1.6v2.4h-1.6zM1136.4 344.8h1.6v2.4h-1.6zM1139.1 344.8h1.6v2.4h-1.6zM1141.8 344.8h1.6v2.4h-1.6zM1144.6 344.8h1.6v2.4h-1.6zM1147.3 344.8h1.6v2.4h-1.6zM1150.0 344.8h1.6v2.4h-1.6zM1152.8 344.8h1.6v2.4h-1.6zM1158.2 344.8h1.6v2.4h-1.6zM1163.7 344.8h1.6v2.4h-1.6zM1166.5 344.8h1.6v2.4h-1.6zM1169.2 344.8h1.6v2.4h-1.6zM1171.9 344.8h1.6v2.4h-1.6zM1174.7 344.8h1.6v2.4h-1.6zM1177.4 344.8h1.6v2.4h-1.6zM1180.1 344.8h1.6v2.4h-1.6zM1182.9 344.8h1.6v2.4h-1.6zM1185.6 344.8h1.6v2.4h-1.6zM1196.5 344.8h1.6v2.4h-1.6zM1199.3 344.8h1.6v2.4h-1.6zM1202.0 344.8h1.6v2.4h-1.6zM1204.7 344.8h1.6v2.4h-1.6zM1207.5 344.8h1.6v2.4h-1.6zM1210.2 344.8h1.6v2.4h-1.6zM1215.7 344.8h1.6v2.4h-1.6zM1218.4 344.8h1.6v2.4h-1.6zM1221.2 344.8h1.6v2.4h-1.6zM1223.9 344.8h1.6v2.4h-1.6zM1226.6 344.8h1.6v2.4h-1.6z" fill="#f0a020"/><path d="M1055.0 207.8h174.0v4.2h-174.0zM1066.0 238.4h163.0v4.2h-163.0z" fill="#3a1fe6"/><path d="M1055.0 238.4h11.0v4.2h-11.0z" fill="#19b6ea"/><path d="M1055.0 270.6h9.0v4.0h-9.0z" fill="#19b6ea"/><path d="M1060.0 221.5h9.0v3.0h-9.0zM1073.0 238.0h4.0v3.0h-4.0zM1078.0 256.0h12.0v3.0h-12.0zM1098.0 269.5h12.0v3.0h-12.0zM1115.0 300.3h6.0v3.0h-6.0zM1123.0 308.8h13.0v3.0h-13.0zM1140.0 339.4h5.0v3.0h-5.0zM1152.0 300.0h5.0v3.0h-5.0zM1163.0 292.0h5.0v3.0h-5.0zM1168.0 313.0h6.0v3.0h-6.0zM1176.0 300.0h8.0v3.0h-8.0zM1188.0 205.0h6.0v3.0h-6.0zM1200.0 256.0h20.0v3.0h-20.0zM1205.0 217.0h18.0v3.0h-18.0zM1207.0 226.0h20.0v3.0h-20.0zM1210.0 269.5h12.0v3.0h-12.0zM1222.0 213.0h8.0v3.0h-8.0zM597.0 208.0h5.0v3.0h-5.0zM618.0 208.0h5.0v3.0h-5.0zM618.0 221.0h5.0v3.0h-5.0zM618.0 230.0h5.0v3.0h-5.0zM640.0 260.0h5.0v3.0h-5.0zM683.0 264.0h5.0v3.0h-5.0zM597.0 221.0h5.0v3.0h-5.0z" fill="#f0109a"/><path d="M1059.7 384.5h1.8v2.6h-1.8zM1059.9 407.0h1.8v2.6h-1.8zM1062.8 407.0h1.8v2.6h-1.8zM1071.3 331.8h1.8v2.6h-1.8zM1069.9 384.5h1.8v2.6h-1.8zM1073.7 384.5h1.8v2.6h-1.8zM1070.7 407.0h1.8v2.6h-1.8zM1073.7 407.0h1.8v2.6h-1.8zM1081.9 331.8h1.8v2.6h-1.8zM1080.8 407.0h1.8v2.6h-1.8zM1093.1 331.8h1.8v2.6h-1.8zM1095.6 331.8h1.8v2.6h-1.8zM1095.6 384.5h1.8v2.6h-1.8zM1102.6 331.8h1.8v2.6h-1.8zM1104.3 384.5h1.8v2.6h-1.8zM1106.5 384.5h1.8v2.6h-1.8zM1104.2 407.0h1.8v2.6h-1.8zM1106.5 407.0h1.8v2.6h-1.8zM1114.2 331.8h1.8v2.6h-1.8zM1114.5 384.5h1.8v2.6h-1.8zM1117.5 384.5h1.8v2.6h-1.8zM1113.7 407.0h1.8v2.6h-1.8zM1125.9 384.5h1.8v2.6h-1.8zM1128.4 384.5h1.8v2.6h-1.8zM1124.6 407.0h1.8v2.6h-1.8zM1139.4 331.8h1.8v2.6h-1.8zM1136.4 384.5h1.8v2.6h-1.8zM1137.3 407.0h1.8v2.6h-1.8zM1139.4 407.0h1.8v2.6h-1.8zM1146.5 331.8h1.8v2.6h-1.8zM1150.3 331.8h1.8v2.6h-1.8zM1150.3 384.5h1.8v2.6h-1.8zM1147.7 407.0h1.8v2.6h-1.8zM1150.3 407.0h1.8v2.6h-1.8zM1158.4 331.8h1.8v2.6h-1.8zM1158.7 384.5h1.8v2.6h-1.8zM1161.2 384.5h1.8v2.6h-1.8zM1168.4 331.8h1.8v2.6h-1.8zM1172.2 331.8h1.8v2.6h-1.8zM1168.7 384.5h1.8v2.6h-1.8zM1172.2 384.5h1.8v2.6h-1.8zM1168.5 407.0h1.8v2.6h-1.8zM1183.1 331.8h1.8v2.6h-1.8zM1180.6 384.5h1.8v2.6h-1.8zM1183.1 384.5h1.8v2.6h-1.8zM1190.9 331.8h1.8v2.6h-1.8zM1190.9 384.5h1.8v2.6h-1.8zM1190.7 407.0h1.8v2.6h-1.8zM1194.1 407.0h1.8v2.6h-1.8zM1201.9 331.8h1.8v2.6h-1.8zM1213.0 331.8h1.8v2.6h-1.8zM1215.9 384.5h1.8v2.6h-1.8zM1213.2 407.0h1.8v2.6h-1.8zM1215.9 407.0h1.8v2.6h-1.8zM1223.0 331.8h1.8v2.6h-1.8zM1226.9 331.8h1.8v2.6h-1.8zM1222.9 384.5h1.8v2.6h-1.8zM1226.9 384.5h1.8v2.6h-1.8zM236.6 404.8h4.8v2.6h-4.8zM242.3 404.8h1.9v2.6h-1.9zM255.7 417.9h1.5v2.6h-1.5zM258.2 417.9h1.9v2.6h-1.9zM261.2 431.0h1.9v2.6h-1.9zM274.8 439.7h1.9v2.6h-1.9zM277.7 439.7h1.9v2.6h-1.9zM277.6 435.3h1.9v2.6h-1.9zM285.8 444.0h1.9v2.6h-1.9zM288.7 444.0h1.9v2.6h-1.9zM288.5 439.7h2.8v2.6h-2.8zM292.4 439.7h1.9v2.6h-1.9zM296.7 431.0h1.9v2.6h-1.9zM299.6 431.0h1.9v2.6h-1.9zM321.3 409.2h1.9v2.6h-1.9zM326.8 409.2h1.9v2.6h-1.9zM335.0 409.2h4.8v2.6h-4.8zM340.8 409.2h1.9v2.6h-1.9zM337.8 422.3h4.8v2.6h-4.8zM343.5 422.3h1.9v2.6h-1.9zM343.2 413.6h2.8v2.6h-2.8zM347.1 413.6h1.9v2.6h-1.9zM356.9 435.3h1.9v2.6h-1.9zM359.6 431.0h1.9v2.6h-1.9zM362.5 431.0h1.9v2.6h-1.9zM378.8 439.7h1.9v2.6h-1.9zM392.4 431.0h2.8v2.6h-2.8zM396.3 431.0h1.9v2.6h-1.9zM397.9 422.3h2.8v2.6h-2.8zM430.7 413.6h1.9v2.6h-1.9zM458.1 417.9h1.9v2.6h-1.9zM461.0 417.9h1.9v2.6h-1.9zM466.3 431.0h4.8v2.6h-4.8zM472.0 431.0h1.9v2.6h-1.9zM474.5 435.3h1.5v2.6h-1.5zM477.0 435.3h1.9v2.6h-1.9zM477.2 444.0h1.9v2.6h-1.9zM480.1 444.0h1.9v2.6h-1.9zM480.0 435.3h1.9v2.6h-1.9zM482.9 435.3h1.9v2.6h-1.9zM482.7 444.0h1.9v2.6h-1.9zM485.6 444.0h1.9v2.6h-1.9zM485.4 439.7h1.9v2.6h-1.9zM488.3 439.7h1.9v2.6h-1.9zM501.9 422.3h4.8v2.6h-4.8zM512.8 422.3h2.8v2.6h-2.8zM518.3 417.9h4.8v2.6h-4.8zM523.7 413.6h2.8v2.6h-2.8zM527.6 413.6h1.9v2.6h-1.9zM551.1 422.3h1.5v2.6h-1.5zM553.6 422.3h1.9v2.6h-1.9zM556.5 435.3h2.8v2.6h-2.8zM559.3 431.0h1.9v2.6h-1.9zM562.2 431.0h1.9v2.6h-1.9zM573.0 452.7h1.9v2.6h-1.9zM575.7 444.0h1.9v2.6h-1.9zM583.9 439.7h1.5v2.6h-1.5zM586.4 439.7h1.9v2.6h-1.9zM592.1 426.6h1.9v2.6h-1.9zM595.0 426.6h1.9v2.6h-1.9zM715.2 413.6h1.9v2.6h-1.9zM718.1 413.6h1.9v2.6h-1.9zM717.9 422.3h1.5v2.6h-1.5zM720.4 422.3h1.9v2.6h-1.9zM720.7 413.6h4.8v2.6h-4.8zM726.1 426.6h1.5v2.6h-1.5zM728.9 422.3h1.9v2.6h-1.9zM731.8 422.3h1.9v2.6h-1.9zM742.5 444.0h1.5v2.6h-1.5zM758.9 435.3h1.9v2.6h-1.9zM775.3 422.3h4.8v2.6h-4.8zM781.1 422.3h1.9v2.6h-1.9zM786.3 413.6h1.9v2.6h-1.9zM789.2 413.6h1.9v2.6h-1.9zM797.2 409.2h1.5v2.6h-1.5zM799.8 409.2h1.9v2.6h-1.9zM800.0 409.2h1.9v2.6h-1.9zM802.9 409.2h1.9v2.6h-1.9zM810.9 422.3h4.8v2.6h-4.8zM816.7 422.3h1.9v2.6h-1.9zM816.4 431.0h2.8v2.6h-2.8zM820.2 431.0h1.9v2.6h-1.9zM819.1 435.3h2.8v2.6h-2.8zM823.0 435.3h1.9v2.6h-1.9zM827.3 435.3h4.8v2.6h-4.8zM833.1 435.3h1.9v2.6h-1.9zM830.0 439.7h2.8v2.6h-2.8zM833.9 439.7h1.9v2.6h-1.9zM841.0 444.0h1.9v2.6h-1.9zM849.2 431.0h4.8v2.6h-4.8zM857.4 431.0h4.8v2.6h-4.8zM863.2 431.0h1.9v2.6h-1.9zM865.6 422.3h2.8v2.6h-2.8zM879.3 404.8h1.9v2.6h-1.9zM882.2 404.8h1.9v2.6h-1.9zM882.0 409.2h1.5v2.6h-1.5zM884.5 409.2h1.9v2.6h-1.9zM887.5 413.6h1.9v2.6h-1.9zM890.4 413.6h1.9v2.6h-1.9zM893.0 439.7h1.5v2.6h-1.5zM895.5 439.7h1.9v2.6h-1.9zM898.4 435.3h1.9v2.6h-1.9zM912.1 413.6h1.5v2.6h-1.5zM914.6 413.6h1.9v2.6h-1.9zM917.6 417.9h1.9v2.6h-1.9zM923.0 409.2h1.5v2.6h-1.5zM934.0 413.6h2.8v2.6h-2.8zM939.5 422.3h1.9v2.6h-1.9zM944.9 422.3h1.9v2.6h-1.9zM947.8 422.3h1.9v2.6h-1.9zM953.1 426.6h2.8v2.6h-2.8zM1002.4 417.9h1.5v2.6h-1.5zM1004.9 417.9h1.9v2.6h-1.9zM1005.1 422.3h1.9v2.6h-1.9zM1008.0 422.3h1.9v2.6h-1.9zM1024.2 404.8h4.8v2.6h-4.8zM1030.0 404.8h1.9v2.6h-1.9zM1046.1 426.6h4.8v2.6h-4.8zM1048.8 431.0h1.9v2.6h-1.9zM1051.8 431.0h1.9v2.6h-1.9zM1051.6 435.3h1.9v2.6h-1.9z" fill="#22e3b5"/><path d="M1062.0 296.0h3.0v3h-3.0zM1084.0 296.0h3.0v3h-3.0zM1106.0 296.0h3.0v3h-3.0zM1128.0 296.0h3.0v3h-3.0zM1150.0 296.0h3.0v3h-3.0zM1172.0 296.0h3.0v3h-3.0zM1194.0 296.0h3.0v3h-3.0zM1216.0 296.0h3.0v3h-3.0zM326.8 235.0h2.5v3.0h-2.5zM359.6 204.5h2.5v3.0h-2.5zM362.4 204.5h2.0v3.0h-2.0zM365.4 204.5h2.5v3.0h-2.5zM370.6 226.3h3.8v3.0h-3.8zM375.3 226.3h2.5v3.0h-2.5zM400.7 213.2h3.8v3.0h-3.8zM433.5 252.4h2.5v3.0h-2.5zM437.0 252.4h2.5v3.0h-2.5zM438.9 221.9h2.0v3.0h-2.0zM449.9 204.5h2.5v3.0h-2.5zM455.4 213.2h6.2v3.0h-6.2zM462.6 213.2h2.5v3.0h-2.5zM480.0 226.3h2.5v3.0h-2.5zM483.5 226.3h2.5v3.0h-2.5zM545.6 252.4h2.5v3.0h-2.5zM549.1 252.4h2.5v3.0h-2.5zM581.2 226.3h2.0v3.0h-2.0zM584.2 226.3h2.5v3.0h-2.5zM586.6 235.0h6.2v3.0h-6.2zM734.3 204.5h2.0v3.0h-2.0zM737.3 204.5h2.5v3.0h-2.5zM748.0 226.3h3.8v3.0h-3.8zM752.8 226.3h2.5v3.0h-2.5zM780.8 204.5h3.8v3.0h-3.8zM785.6 204.5h2.5v3.0h-2.5zM783.6 213.2h6.2v3.0h-6.2zM786.3 213.2h6.2v3.0h-6.2zM794.5 226.3h6.2v3.0h-6.2zM797.2 243.7h2.5v3.0h-2.5zM800.0 243.7h2.0v3.0h-2.0zM821.8 213.2h2.5v3.0h-2.5zM827.3 204.5h2.0v3.0h-2.0zM830.3 204.5h2.5v3.0h-2.5zM830.0 208.9h2.5v3.0h-2.5zM833.5 208.9h2.5v3.0h-2.5zM854.7 230.6h2.5v3.0h-2.5zM858.2 230.6h2.5v3.0h-2.5zM862.9 213.2h2.5v3.0h-2.5zM866.4 213.2h2.5v3.0h-2.5zM868.3 213.2h2.5v3.0h-2.5zM871.8 213.2h2.5v3.0h-2.5zM887.5 252.4h3.8v3.0h-3.8zM892.2 252.4h2.5v3.0h-2.5zM893.0 204.5h2.5v3.0h-2.5zM896.5 204.5h2.5v3.0h-2.5zM914.8 252.4h2.5v3.0h-2.5zM918.3 252.4h2.5v3.0h-2.5zM931.2 213.2h6.2v3.0h-6.2zM944.9 239.3h2.0v3.0h-2.0zM947.9 239.3h2.5v3.0h-2.5zM953.1 243.7h2.5v3.0h-2.5zM969.5 213.2h2.5v3.0h-2.5zM991.4 252.4h2.5v3.0h-2.5zM1021.5 213.2h3.8v3.0h-3.8zM1035.2 252.4h6.2v3.0h-6.2zM1042.4 252.4h2.5v3.0h-2.5z" fill="#7a22e0"/><path d="M163.0 217.0h3.8v3.4h-3.8zM183.0 217.0h5.0v3.4h-5.0zM206.7 217.0h3.8v3.4h-3.8zM226.7 217.0h5.0v3.4h-5.0zM163.0 230.0h3.8v3.4h-3.8zM183.0 230.0h5.0v3.4h-5.0zM206.7 230.0h3.8v3.4h-3.8zM226.7 230.0h5.0v3.4h-5.0zM155.3 242.9h3.8v3.4h-3.8zM178.4 242.9h3.8v3.4h-3.8zM199.1 242.9h3.8v3.4h-3.8zM222.1 242.9h3.8v3.4h-3.8zM161.1 247.7h3.8v3.4h-3.8zM182.2 247.7h5.8v3.4h-5.8zM204.8 247.7h3.8v3.4h-3.8zM225.9 247.7h5.8v3.4h-5.8zM157.3 256.1h3.8v3.4h-3.8zM178.4 256.1h3.8v3.4h-3.8zM201.0 256.1h3.8v3.4h-3.8zM222.1 256.1h3.8v3.4h-3.8zM151.5 260.7h3.8v3.4h-3.8zM195.2 260.7h3.8v3.4h-3.8zM151.5 273.5h5.8v3.4h-5.8zM168.8 273.5h6.5v3.4h-6.5zM195.2 273.5h5.8v3.4h-5.8zM212.5 273.5h6.5v3.4h-6.5zM147.7 278.0h3.8v3.4h-3.8zM153.4 278.0h3.8v3.4h-3.8zM191.4 278.0h3.8v3.4h-3.8zM197.2 278.0h3.8v3.4h-3.8zM145.8 290.7h9.6v3.4h-9.6zM166.9 290.7h11.5v3.4h-11.5zM189.5 290.7h9.6v3.4h-9.6zM210.6 290.7h11.5v3.4h-11.5zM166.9 307.7h5.8v3.4h-5.8zM210.6 307.7h5.8v3.4h-5.8zM596.0 243.5h28.0v3.4h-28.0zM639.0 243.5h30.0v3.4h-30.0zM606.0 273.8h22.0v3.4h-22.0zM639.0 273.8h32.0v3.4h-32.0zM703.0 216.5h11.0v3.4h-11.0z" fill="#3a1fe6"/><path d="M178.4 217.0h4.6v3.4h-4.6zM222.1 217.0h4.6v3.4h-4.6zM178.4 230.0h4.6v3.4h-4.6zM222.1 230.0h4.6v3.4h-4.6zM166.9 242.9h11.5v3.4h-11.5zM210.6 242.9h11.5v3.4h-11.5zM168.8 256.1h9.6v3.4h-9.6zM212.5 256.1h9.6v3.4h-9.6zM157.3 260.7h9.6v3.4h-9.6zM201.0 260.7h9.6v3.4h-9.6zM163.0 273.5h5.8v3.4h-5.8zM175.3 273.5h6.9v3.4h-6.9zM206.7 273.5h5.8v3.4h-5.8zM219.0 273.5h6.9v3.4h-6.9zM155.3 290.7h11.5v3.4h-11.5zM199.1 290.7h11.5v3.4h-11.5z" fill="#c51cf2"/><path d="M147.7 307.7h7.7v3.4h-7.7zM191.4 307.7h7.7v3.4h-7.7z" fill="#7a22e0"/><path d="M199.5 307.7h11.5v3.4h-11.5zM216.7 307.7h15.0v3.4h-15.0z" fill="#e8e000"/><path d="M190.5 400.3h42.0v3.2h-42.0zM190.5 413.2h42.0v3.2h-42.0zM190.5 452.5h42.0v3.2h-42.0zM190.5 465.3h42.0v3.2h-42.0z" fill="#f2b705"/><path d="M226.0 356.0h5.0v3.2h-5.0z" fill="#f0731e"/><path d="M233.8 287.3h1.9v2.8h-1.9zM236.7 287.3h1.9v2.8h-1.9zM236.6 265.5h1.9v2.8h-1.9zM239.5 265.5h1.9v2.8h-1.9zM239.3 256.8h4.8v2.8h-4.8zM242.0 287.3h2.8v2.8h-2.8zM245.9 287.3h1.9v2.8h-1.9zM244.8 309.0h1.9v2.8h-1.9zM247.7 309.0h1.9v2.8h-1.9zM247.5 317.7h1.9v2.8h-1.9zM250.4 317.7h1.9v2.8h-1.9zM253.0 296.0h1.9v2.8h-1.9zM255.9 296.0h1.9v2.8h-1.9zM258.4 265.5h1.9v2.8h-1.9zM261.3 265.5h1.9v2.8h-1.9zM261.2 265.5h1.5v2.8h-1.5zM263.9 278.5h1.9v2.8h-1.9zM266.6 287.3h1.9v2.8h-1.9zM269.4 313.4h1.9v2.8h-1.9zM272.3 313.4h1.9v2.8h-1.9zM277.6 296.0h1.5v2.8h-1.5zM280.1 296.0h1.9v2.8h-1.9zM283.1 265.5h1.9v2.8h-1.9zM285.9 265.5h1.9v2.8h-1.9zM285.8 265.5h1.9v2.8h-1.9zM288.7 265.5h1.9v2.8h-1.9zM288.5 304.7h1.9v2.8h-1.9zM291.3 309.0h1.9v2.8h-1.9zM294.2 309.0h1.9v2.8h-1.9zM294.0 304.7h1.9v2.8h-1.9zM296.9 304.7h1.9v2.8h-1.9zM296.7 304.7h4.8v2.8h-4.8zM299.5 296.0h1.9v2.8h-1.9zM302.2 256.8h1.9v2.8h-1.9zM307.7 287.3h1.9v2.8h-1.9zM310.4 287.3h1.9v2.8h-1.9zM315.9 304.7h1.9v2.8h-1.9zM318.8 304.7h1.9v2.8h-1.9zM318.6 300.3h1.9v2.8h-1.9zM321.5 300.3h1.9v2.8h-1.9zM329.5 274.2h4.8v2.8h-4.8zM335.3 274.2h1.9v2.8h-1.9zM332.3 296.0h1.9v2.8h-1.9zM335.0 317.7h2.8v2.8h-2.8zM337.8 304.7h1.5v2.8h-1.5zM340.5 313.4h1.5v2.8h-1.5zM343.0 313.4h1.9v2.8h-1.9zM354.2 304.7h1.9v2.8h-1.9zM357.1 304.7h1.9v2.8h-1.9zM356.9 322.1h1.9v2.8h-1.9zM359.8 322.1h1.9v2.8h-1.9zM359.6 309.0h1.5v2.8h-1.5zM362.4 317.7h4.8v2.8h-4.8zM367.8 269.8h1.9v2.8h-1.9zM370.7 269.8h1.9v2.8h-1.9zM370.6 269.8h1.9v2.8h-1.9zM373.5 269.8h1.9v2.8h-1.9zM373.3 278.5h4.8v2.8h-4.8zM379.1 278.5h1.9v2.8h-1.9zM384.2 296.0h4.8v2.8h-4.8zM387.0 278.5h1.9v2.8h-1.9zM389.7 274.2h1.9v2.8h-1.9zM395.2 274.2h4.8v2.8h-4.8zM400.9 274.2h1.9v2.8h-1.9zM406.1 291.6h1.9v2.8h-1.9zM409.0 291.6h1.9v2.8h-1.9zM242.0 300.3h2.0v2.8h-2.0zM244.8 291.6h1.6v2.8h-1.6zM247.4 291.6h2.0v2.8h-2.0zM247.5 287.3h2.0v2.8h-2.0zM250.5 287.3h2.0v2.8h-2.0zM250.2 296.0h1.6v2.8h-1.6zM255.7 265.5h3.0v2.8h-3.0zM259.7 265.5h2.0v2.8h-2.0zM258.4 265.5h2.0v2.8h-2.0zM261.2 256.8h1.6v2.8h-1.6zM263.8 256.8h2.0v2.8h-2.0zM263.9 274.2h3.0v2.8h-3.0zM267.9 274.2h2.0v2.8h-2.0zM266.6 274.2h2.0v2.8h-2.0zM269.6 274.2h2.0v2.8h-2.0zM272.1 282.9h5.0v2.8h-5.0zM278.1 282.9h2.0v2.8h-2.0zM277.6 287.3h5.0v2.8h-5.0zM288.5 282.9h3.0v2.8h-3.0zM292.5 282.9h2.0v2.8h-2.0zM291.3 287.3h1.6v2.8h-1.6zM299.5 274.2h5.0v2.8h-5.0zM305.5 274.2h2.0v2.8h-2.0zM304.9 256.8h3.0v2.8h-3.0zM307.7 265.5h5.0v2.8h-5.0zM313.7 265.5h2.0v2.8h-2.0zM310.4 265.5h3.0v2.8h-3.0zM313.1 282.9h2.0v2.8h-2.0zM318.6 278.5h1.6v2.8h-1.6zM321.2 278.5h2.0v2.8h-2.0zM321.3 287.3h2.0v2.8h-2.0zM324.3 287.3h2.0v2.8h-2.0zM324.1 287.3h1.6v2.8h-1.6zM326.7 287.3h2.0v2.8h-2.0zM326.8 296.0h5.0v2.8h-5.0zM332.8 296.0h2.0v2.8h-2.0zM332.3 296.0h2.0v2.8h-2.0zM335.3 296.0h2.0v2.8h-2.0zM335.0 296.0h1.6v2.8h-1.6zM337.8 296.0h1.6v2.8h-1.6zM340.4 296.0h2.0v2.8h-2.0zM340.5 287.3h1.6v2.8h-1.6zM343.2 278.5h3.0v2.8h-3.0zM346.0 256.8h1.6v2.8h-1.6zM348.7 269.8h2.0v2.8h-2.0zM351.4 274.2h2.0v2.8h-2.0zM354.4 274.2h2.0v2.8h-2.0zM356.9 278.5h3.0v2.8h-3.0zM360.9 278.5h2.0v2.8h-2.0zM359.6 287.3h2.0v2.8h-2.0zM362.6 287.3h2.0v2.8h-2.0zM365.1 296.0h2.0v2.8h-2.0zM368.1 296.0h2.0v2.8h-2.0zM370.6 296.0h5.0v2.8h-5.0zM373.3 287.3h2.0v2.8h-2.0zM376.0 296.0h2.0v2.8h-2.0zM378.8 287.3h2.0v2.8h-2.0zM381.8 287.3h2.0v2.8h-2.0zM381.5 278.5h3.0v2.8h-3.0zM387.0 274.2h2.0v2.8h-2.0zM395.2 265.5h2.0v2.8h-2.0zM398.2 265.5h2.0v2.8h-2.0zM400.7 282.9h2.0v2.8h-2.0zM430.7 309.0h1.9v2.8h-1.9zM433.5 287.3h1.9v2.8h-1.9zM436.4 287.3h1.9v2.8h-1.9zM436.2 256.8h4.8v2.8h-4.8zM438.9 265.5h1.9v2.8h-1.9zM441.7 274.2h1.5v2.8h-1.5zM444.4 287.3h1.9v2.8h-1.9zM449.9 317.7h1.9v2.8h-1.9zM452.6 300.3h1.9v2.8h-1.9zM455.4 282.9h1.5v2.8h-1.5zM458.1 256.8h2.8v2.8h-2.8zM460.8 278.5h1.9v2.8h-1.9zM463.7 278.5h1.9v2.8h-1.9zM463.6 287.3h1.9v2.8h-1.9zM466.5 287.3h1.9v2.8h-1.9zM469.0 326.4h1.9v2.8h-1.9zM471.9 326.4h1.9v2.8h-1.9zM471.8 309.0h4.8v2.8h-4.8zM477.5 309.0h1.9v2.8h-1.9zM474.5 296.0h1.9v2.8h-1.9zM477.2 274.2h1.5v2.8h-1.5zM479.8 274.2h1.9v2.8h-1.9zM480.0 269.8h1.9v2.8h-1.9zM482.9 269.8h1.9v2.8h-1.9zM482.7 274.2h1.9v2.8h-1.9zM485.6 274.2h1.9v2.8h-1.9zM485.4 278.5h1.9v2.8h-1.9zM488.3 278.5h1.9v2.8h-1.9zM493.6 326.4h1.5v2.8h-1.5zM496.2 326.4h1.9v2.8h-1.9zM496.4 313.4h1.5v2.8h-1.5zM498.9 313.4h1.9v2.8h-1.9zM499.1 287.3h1.9v2.8h-1.9zM502.0 287.3h1.9v2.8h-1.9zM501.9 261.1h1.5v2.8h-1.5zM504.6 265.5h2.8v2.8h-2.8zM508.4 265.5h1.9v2.8h-1.9zM507.3 287.3h1.9v2.8h-1.9zM512.8 304.7h4.8v2.8h-4.8zM515.5 326.4h2.8v2.8h-2.8zM519.4 326.4h1.9v2.8h-1.9zM518.3 296.0h1.9v2.8h-1.9zM521.0 282.9h1.9v2.8h-1.9zM523.9 282.9h1.9v2.8h-1.9zM523.7 274.2h1.5v2.8h-1.5zM526.2 274.2h1.9v2.8h-1.9zM526.5 274.2h2.8v2.8h-2.8zM529.2 287.3h1.5v2.8h-1.5zM531.7 287.3h1.9v2.8h-1.9zM531.9 287.3h1.9v2.8h-1.9zM534.8 287.3h1.9v2.8h-1.9zM534.7 326.4h1.5v2.8h-1.5zM537.2 326.4h1.9v2.8h-1.9zM542.9 287.3h2.8v2.8h-2.8zM545.6 278.5h1.9v2.8h-1.9zM548.3 278.5h1.5v2.8h-1.5zM551.1 265.5h1.5v2.8h-1.5zM553.6 265.5h1.9v2.8h-1.9zM553.8 304.7h4.8v2.8h-4.8zM556.5 326.4h1.9v2.8h-1.9zM559.4 326.4h1.9v2.8h-1.9zM559.3 326.4h1.9v2.8h-1.9zM562.0 304.7h1.9v2.8h-1.9zM564.8 269.8h1.9v2.8h-1.9zM567.5 265.5h4.8v2.8h-4.8zM570.2 265.5h2.8v2.8h-2.8zM574.1 265.5h1.9v2.8h-1.9zM575.7 304.7h1.9v2.8h-1.9zM578.6 304.7h1.9v2.8h-1.9zM581.2 322.1h1.9v2.8h-1.9zM584.1 322.1h1.9v2.8h-1.9zM583.9 296.0h4.8v2.8h-4.8zM586.6 296.0h1.9v2.8h-1.9zM589.4 274.2h1.9v2.8h-1.9zM436.2 274.2h2.0v2.8h-2.0zM438.9 274.2h2.0v2.8h-2.0zM441.7 278.5h2.0v2.8h-2.0zM444.7 278.5h2.0v2.8h-2.0zM447.1 265.5h3.0v2.8h-3.0zM451.1 265.5h2.0v2.8h-2.0zM452.6 278.5h5.0v2.8h-5.0zM455.4 274.2h1.6v2.8h-1.6zM458.0 274.2h2.0v2.8h-2.0zM460.8 296.0h2.0v2.8h-2.0zM463.8 296.0h2.0v2.8h-2.0zM463.6 296.0h2.0v2.8h-2.0zM480.0 278.5h3.0v2.8h-3.0zM482.7 282.9h2.0v2.8h-2.0zM485.7 282.9h2.0v2.8h-2.0zM488.2 265.5h1.6v2.8h-1.6zM490.9 269.8h1.6v2.8h-1.6zM493.5 269.8h2.0v2.8h-2.0zM499.1 278.5h2.0v2.8h-2.0zM507.3 300.3h2.0v2.8h-2.0zM510.3 300.3h2.0v2.8h-2.0zM510.1 304.7h2.0v2.8h-2.0zM513.1 304.7h2.0v2.8h-2.0zM523.7 287.3h5.0v2.8h-5.0zM529.2 265.5h2.0v2.8h-2.0zM531.9 265.5h2.0v2.8h-2.0zM537.4 274.2h1.6v2.8h-1.6zM542.9 274.2h2.0v2.8h-2.0zM545.9 274.2h2.0v2.8h-2.0zM545.6 291.6h5.0v2.8h-5.0zM548.3 282.9h5.0v2.8h-5.0zM554.3 282.9h2.0v2.8h-2.0zM556.5 296.0h2.0v2.8h-2.0zM562.0 287.3h2.0v2.8h-2.0zM565.0 287.3h2.0v2.8h-2.0zM567.5 274.2h5.0v2.8h-5.0zM573.5 274.2h2.0v2.8h-2.0zM581.2 269.8h2.0v2.8h-2.0zM584.2 269.8h2.0v2.8h-2.0zM583.9 265.5h1.6v2.8h-1.6zM589.4 278.5h2.0v2.8h-2.0zM592.4 278.5h2.0v2.8h-2.0zM592.1 287.3h2.0v2.8h-2.0zM715.2 304.7h1.9v2.8h-1.9zM718.1 304.7h1.9v2.8h-1.9zM720.7 265.5h2.8v2.8h-2.8zM724.5 265.5h1.9v2.8h-1.9zM723.4 287.3h1.9v2.8h-1.9zM726.3 287.3h1.9v2.8h-1.9zM728.9 309.0h1.9v2.8h-1.9zM734.3 326.4h4.8v2.8h-4.8zM737.1 313.4h1.5v2.8h-1.5zM742.5 278.5h2.8v2.8h-2.8zM746.4 278.5h1.9v2.8h-1.9zM745.3 256.8h1.9v2.8h-1.9zM748.0 287.3h4.8v2.8h-4.8zM750.7 296.0h1.9v2.8h-1.9zM753.5 317.7h4.8v2.8h-4.8zM759.2 317.7h1.9v2.8h-1.9zM756.2 309.0h1.9v2.8h-1.9zM761.7 265.5h1.9v2.8h-1.9zM764.6 265.5h1.9v2.8h-1.9zM764.4 274.2h1.5v2.8h-1.5zM766.9 274.2h1.9v2.8h-1.9zM769.9 287.3h1.9v2.8h-1.9zM772.8 287.3h1.9v2.8h-1.9zM772.6 296.0h2.8v2.8h-2.8zM776.5 296.0h1.9v2.8h-1.9zM775.3 309.0h1.9v2.8h-1.9zM780.8 317.7h1.9v2.8h-1.9zM783.7 317.7h1.9v2.8h-1.9zM783.6 296.0h1.9v2.8h-1.9zM786.5 296.0h1.9v2.8h-1.9zM789.0 265.5h2.8v2.8h-2.8zM791.8 278.5h4.8v2.8h-4.8zM794.5 296.0h2.8v2.8h-2.8zM797.2 313.4h1.9v2.8h-1.9zM800.0 309.0h1.5v2.8h-1.5zM802.5 309.0h1.9v2.8h-1.9zM805.4 282.9h1.9v2.8h-1.9zM808.2 256.8h1.5v2.8h-1.5zM810.9 278.5h1.9v2.8h-1.9zM813.8 278.5h1.9v2.8h-1.9zM813.6 287.3h1.5v2.8h-1.5zM816.2 287.3h1.9v2.8h-1.9zM816.4 313.4h2.8v2.8h-2.8zM821.8 309.0h1.9v2.8h-1.9zM824.7 309.0h1.9v2.8h-1.9zM824.6 309.0h1.5v2.8h-1.5zM830.0 274.2h1.9v2.8h-1.9zM832.8 265.5h2.8v2.8h-2.8zM835.5 287.3h4.8v2.8h-4.8zM841.3 287.3h1.9v2.8h-1.9zM838.3 304.7h1.9v2.8h-1.9zM841.0 309.0h1.9v2.8h-1.9zM843.7 326.4h1.9v2.8h-1.9zM846.6 326.4h1.9v2.8h-1.9zM846.5 296.0h4.8v2.8h-4.8zM849.2 287.3h1.5v2.8h-1.5zM851.9 278.5h4.8v2.8h-4.8zM857.7 278.5h1.9v2.8h-1.9zM854.7 278.5h2.8v2.8h-2.8zM857.4 278.5h1.9v2.8h-1.9zM860.3 278.5h1.9v2.8h-1.9zM865.6 313.4h1.9v2.8h-1.9zM868.3 287.3h1.5v2.8h-1.5zM871.1 274.2h4.8v2.8h-4.8zM876.8 274.2h1.9v2.8h-1.9zM879.3 274.2h1.9v2.8h-1.9zM882.2 274.2h1.9v2.8h-1.9zM882.0 296.0h1.5v2.8h-1.5zM884.5 296.0h1.9v2.8h-1.9zM884.8 313.4h1.9v2.8h-1.9zM887.6 313.4h1.9v2.8h-1.9zM715.2 287.3h2.0v2.8h-2.0zM718.2 287.3h2.0v2.8h-2.0zM717.9 296.0h2.0v2.8h-2.0zM720.9 296.0h2.0v2.8h-2.0zM720.7 304.7h2.0v2.8h-2.0zM731.6 287.3h3.0v2.8h-3.0zM735.6 287.3h2.0v2.8h-2.0zM734.3 265.5h5.0v2.8h-5.0zM740.3 265.5h2.0v2.8h-2.0zM737.1 265.5h2.0v2.8h-2.0zM740.1 265.5h2.0v2.8h-2.0zM748.0 282.9h2.0v2.8h-2.0zM751.0 282.9h2.0v2.8h-2.0zM750.7 287.3h2.0v2.8h-2.0zM753.5 287.3h2.0v2.8h-2.0zM756.5 287.3h2.0v2.8h-2.0zM758.9 296.0h2.0v2.8h-2.0zM761.7 304.7h5.0v2.8h-5.0zM764.4 287.3h2.0v2.8h-2.0zM767.1 296.0h2.0v2.8h-2.0zM770.1 296.0h2.0v2.8h-2.0zM769.9 287.3h2.0v2.8h-2.0zM772.9 287.3h2.0v2.8h-2.0zM778.1 265.5h2.0v2.8h-2.0zM783.6 274.2h1.6v2.8h-1.6zM789.0 278.5h2.0v2.8h-2.0zM791.8 269.8h2.0v2.8h-2.0zM794.8 269.8h2.0v2.8h-2.0zM794.5 282.9h1.6v2.8h-1.6zM802.7 296.0h5.0v2.8h-5.0zM808.7 296.0h2.0v2.8h-2.0zM805.4 304.7h2.0v2.8h-2.0zM808.4 304.7h2.0v2.8h-2.0zM810.9 287.3h2.0v2.8h-2.0zM813.6 278.5h1.6v2.8h-1.6zM816.2 278.5h2.0v2.8h-2.0zM816.4 287.3h1.6v2.8h-1.6zM824.6 265.5h3.0v2.8h-3.0zM828.6 265.5h2.0v2.8h-2.0zM827.3 265.5h2.0v2.8h-2.0zM830.3 265.5h2.0v2.8h-2.0zM832.8 265.5h2.0v2.8h-2.0zM835.8 265.5h2.0v2.8h-2.0zM843.7 296.0h2.0v2.8h-2.0zM846.7 296.0h2.0v2.8h-2.0zM846.5 296.0h1.6v2.8h-1.6zM851.9 304.7h5.0v2.8h-5.0zM857.9 304.7h2.0v2.8h-2.0zM854.7 287.3h2.0v2.8h-2.0zM857.7 287.3h2.0v2.8h-2.0zM868.3 274.2h3.0v2.8h-3.0zM871.1 265.5h2.0v2.8h-2.0zM874.1 265.5h2.0v2.8h-2.0zM873.8 274.2h2.0v2.8h-2.0zM876.5 269.8h1.6v2.8h-1.6zM879.1 269.8h2.0v2.8h-2.0zM882.0 274.2h1.6v2.8h-1.6zM884.8 278.5h3.0v2.8h-3.0zM887.5 291.6h3.0v2.8h-3.0zM891.5 291.6h2.0v2.8h-2.0zM890.2 322.1h1.9v2.8h-1.9zM893.0 317.7h4.8v2.8h-4.8zM895.7 296.0h1.5v2.8h-1.5zM898.2 296.0h1.9v2.8h-1.9zM901.2 252.4h1.9v2.8h-1.9zM903.9 282.9h1.9v2.8h-1.9zM906.6 304.7h1.9v2.8h-1.9zM909.5 304.7h1.9v2.8h-1.9zM909.4 317.7h2.8v2.8h-2.8zM912.1 317.7h4.8v2.8h-4.8zM917.8 317.7h1.9v2.8h-1.9zM923.0 269.8h1.9v2.8h-1.9zM925.9 269.8h1.9v2.8h-1.9zM925.8 274.2h1.9v2.8h-1.9zM928.7 274.2h1.9v2.8h-1.9zM928.5 287.3h1.9v2.8h-1.9zM931.2 309.0h2.8v2.8h-2.8zM935.1 309.0h1.9v2.8h-1.9zM934.0 317.7h1.9v2.8h-1.9zM936.9 317.7h1.9v2.8h-1.9zM936.7 317.7h1.9v2.8h-1.9zM939.6 317.7h1.9v2.8h-1.9zM944.9 256.8h1.9v2.8h-1.9zM947.7 278.5h1.9v2.8h-1.9zM950.6 278.5h1.9v2.8h-1.9zM953.1 309.0h4.8v2.8h-4.8zM958.9 309.0h1.9v2.8h-1.9zM958.6 317.7h1.9v2.8h-1.9zM961.5 317.7h1.9v2.8h-1.9zM961.3 296.0h1.5v2.8h-1.5zM964.1 274.2h2.8v2.8h-2.8zM966.8 256.8h1.9v2.8h-1.9zM969.5 274.2h1.9v2.8h-1.9zM972.3 287.3h1.9v2.8h-1.9zM975.0 317.7h1.5v2.8h-1.5zM977.5 317.7h1.9v2.8h-1.9zM977.7 317.7h2.8v2.8h-2.8zM980.5 309.0h1.9v2.8h-1.9zM985.9 269.8h1.9v2.8h-1.9zM988.8 269.8h1.9v2.8h-1.9zM988.7 265.5h1.9v2.8h-1.9zM991.6 265.5h1.9v2.8h-1.9zM991.4 256.8h1.5v2.8h-1.5zM994.1 278.5h1.9v2.8h-1.9zM997.0 278.5h1.9v2.8h-1.9zM996.9 309.0h1.9v2.8h-1.9zM999.8 309.0h1.9v2.8h-1.9zM999.6 326.4h1.9v2.8h-1.9zM1002.4 317.7h1.9v2.8h-1.9zM1005.3 317.7h1.9v2.8h-1.9zM1005.1 287.3h1.9v2.8h-1.9zM1008.0 287.3h1.9v2.8h-1.9zM1007.8 274.2h2.8v2.8h-2.8zM1010.6 265.5h1.9v2.8h-1.9zM1013.3 265.5h2.8v2.8h-2.8zM1024.2 300.3h1.5v2.8h-1.5zM1026.8 300.3h1.9v2.8h-1.9zM1029.7 278.5h4.8v2.8h-4.8zM1032.4 274.2h1.9v2.8h-1.9zM1035.3 274.2h1.9v2.8h-1.9zM1035.2 256.8h1.5v2.8h-1.5zM1043.4 317.7h1.9v2.8h-1.9zM1046.3 317.7h1.9v2.8h-1.9zM1046.1 296.0h4.8v2.8h-4.8zM1051.9 296.0h1.9v2.8h-1.9zM1048.8 287.3h1.5v2.8h-1.5zM895.7 304.7h2.0v2.8h-2.0zM898.4 287.3h3.0v2.8h-3.0zM902.4 287.3h2.0v2.8h-2.0zM901.2 282.9h2.0v2.8h-2.0zM904.2 282.9h2.0v2.8h-2.0zM906.6 287.3h2.0v2.8h-2.0zM920.3 274.2h2.0v2.8h-2.0zM923.0 287.3h2.0v2.8h-2.0zM928.5 278.5h3.0v2.8h-3.0zM932.5 278.5h2.0v2.8h-2.0zM934.0 278.5h3.0v2.8h-3.0zM938.0 278.5h2.0v2.8h-2.0zM942.2 296.0h2.0v2.8h-2.0zM944.9 282.9h5.0v2.8h-5.0zM947.7 278.5h2.0v2.8h-2.0zM950.7 278.5h2.0v2.8h-2.0zM953.1 274.2h1.6v2.8h-1.6zM955.7 274.2h2.0v2.8h-2.0zM955.9 256.8h3.0v2.8h-3.0zM958.6 265.5h2.0v2.8h-2.0zM961.6 265.5h2.0v2.8h-2.0zM961.3 265.5h2.0v2.8h-2.0zM964.3 265.5h2.0v2.8h-2.0zM964.1 265.5h2.0v2.8h-2.0zM967.1 265.5h2.0v2.8h-2.0zM966.8 265.5h2.0v2.8h-2.0zM969.5 269.8h2.0v2.8h-2.0zM972.5 269.8h2.0v2.8h-2.0zM980.5 296.0h2.0v2.8h-2.0zM985.9 296.0h2.0v2.8h-2.0zM991.4 278.5h5.0v2.8h-5.0zM997.4 278.5h2.0v2.8h-2.0zM996.9 274.2h2.0v2.8h-2.0zM999.6 265.5h5.0v2.8h-5.0zM1002.4 274.2h5.0v2.8h-5.0zM1008.4 274.2h2.0v2.8h-2.0zM1005.1 265.5h2.0v2.8h-2.0zM1013.3 278.5h2.0v2.8h-2.0zM1016.0 287.3h2.0v2.8h-2.0zM1019.0 287.3h2.0v2.8h-2.0zM1018.8 287.3h2.0v2.8h-2.0zM1021.8 287.3h2.0v2.8h-2.0zM1021.5 287.3h2.0v2.8h-2.0zM1024.5 287.3h2.0v2.8h-2.0zM1027.0 291.6h5.0v2.8h-5.0zM1033.0 291.6h2.0v2.8h-2.0zM1032.4 287.3h1.6v2.8h-1.6zM1035.0 287.3h2.0v2.8h-2.0zM1040.6 274.2h3.0v2.8h-3.0zM1044.6 274.2h2.0v2.8h-2.0zM1043.4 274.2h2.0v2.8h-2.0zM1046.4 274.2h2.0v2.8h-2.0zM1046.1 274.2h1.6v2.8h-1.6zM1048.7 274.2h2.0v2.8h-2.0zM1048.8 256.8h3.0v2.8h-3.0zM1052.8 256.8h2.0v2.8h-2.0z" fill="#19b6ea"/><path d="M239.3 304.7h6.5v2.8h-6.5zM246.8 304.7h2.6v2.8h-2.6zM247.5 296.0h3.9v2.8h-3.9zM263.9 309.0h6.5v2.8h-6.5zM280.3 330.8h2.1v2.8h-2.1zM283.1 330.8h2.1v2.8h-2.1zM285.8 339.5h2.6v2.8h-2.6zM299.5 335.2h2.6v2.8h-2.6zM307.7 317.7h2.6v2.8h-2.6zM311.3 317.7h2.6v2.8h-2.6zM310.4 317.7h6.5v2.8h-6.5zM313.1 313.4h2.6v2.8h-2.6zM316.7 313.4h2.6v2.8h-2.6zM351.4 309.0h3.9v2.8h-3.9zM356.3 309.0h2.6v2.8h-2.6zM356.9 317.7h2.6v2.8h-2.6zM359.6 317.7h2.6v2.8h-2.6zM362.4 317.7h3.9v2.8h-3.9zM367.3 317.7h2.6v2.8h-2.6zM365.1 326.4h3.9v2.8h-3.9zM370.0 326.4h2.6v2.8h-2.6zM381.5 339.5h2.1v2.8h-2.1zM384.6 339.5h2.6v2.8h-2.6zM384.2 330.8h6.5v2.8h-6.5zM391.7 330.8h2.6v2.8h-2.6zM387.0 330.8h2.6v2.8h-2.6zM390.6 330.8h2.6v2.8h-2.6zM389.7 330.8h2.6v2.8h-2.6zM392.4 322.1h2.1v2.8h-2.1zM403.4 309.0h2.6v2.8h-2.6zM407.0 309.0h2.6v2.8h-2.6zM430.7 313.4h2.1v2.8h-2.1zM433.8 313.4h2.6v2.8h-2.6zM444.4 330.8h2.6v2.8h-2.6zM458.1 339.5h2.6v2.8h-2.6zM471.8 326.4h2.6v2.8h-2.6zM501.9 304.7h2.6v2.8h-2.6zM512.8 304.7h3.9v2.8h-3.9zM518.3 309.0h3.9v2.8h-3.9zM523.2 309.0h2.6v2.8h-2.6zM523.7 317.7h2.1v2.8h-2.1zM526.8 317.7h2.6v2.8h-2.6zM537.4 339.5h3.9v2.8h-3.9zM553.8 326.4h3.9v2.8h-3.9zM558.7 326.4h2.6v2.8h-2.6zM556.5 330.8h6.5v2.8h-6.5zM564.0 330.8h2.6v2.8h-2.6zM564.8 317.7h2.6v2.8h-2.6zM568.4 317.7h2.6v2.8h-2.6zM573.0 313.4h6.5v2.8h-6.5zM581.2 304.7h2.6v2.8h-2.6zM589.4 304.7h2.6v2.8h-2.6zM593.0 304.7h2.6v2.8h-2.6zM592.1 304.7h3.9v2.8h-3.9zM720.7 309.0h3.9v2.8h-3.9zM725.6 309.0h2.6v2.8h-2.6zM728.9 317.7h6.5v2.8h-6.5zM734.3 330.8h2.6v2.8h-2.6zM742.5 339.5h6.5v2.8h-6.5zM750.0 339.5h2.6v2.8h-2.6zM745.3 339.5h3.9v2.8h-3.9zM753.5 330.8h6.5v2.8h-6.5zM756.2 330.8h2.6v2.8h-2.6zM764.4 326.4h3.9v2.8h-3.9zM769.3 326.4h2.6v2.8h-2.6zM783.6 304.7h3.9v2.8h-3.9zM788.5 304.7h2.6v2.8h-2.6zM786.3 300.3h3.9v2.8h-3.9zM791.2 300.3h2.6v2.8h-2.6zM791.8 296.0h2.1v2.8h-2.1zM794.8 296.0h2.6v2.8h-2.6zM800.0 304.7h2.6v2.8h-2.6zM808.2 309.0h2.1v2.8h-2.1zM813.6 317.7h2.1v2.8h-2.1zM816.7 317.7h2.6v2.8h-2.6zM824.6 330.8h2.6v2.8h-2.6zM830.0 330.8h6.5v2.8h-6.5zM837.5 330.8h2.6v2.8h-2.6zM843.7 330.8h2.6v2.8h-2.6zM849.2 326.4h2.6v2.8h-2.6zM852.8 326.4h2.6v2.8h-2.6zM868.3 309.0h2.6v2.8h-2.6zM876.5 296.0h2.6v2.8h-2.6zM882.0 296.0h2.1v2.8h-2.1zM885.1 296.0h2.6v2.8h-2.6zM884.8 304.7h2.6v2.8h-2.6zM890.2 330.8h2.6v2.8h-2.6zM893.8 330.8h2.6v2.8h-2.6zM898.4 317.7h3.9v2.8h-3.9zM903.3 317.7h2.6v2.8h-2.6zM901.2 317.7h2.1v2.8h-2.1zM904.2 317.7h2.6v2.8h-2.6zM912.1 317.7h3.9v2.8h-3.9zM917.0 317.7h2.6v2.8h-2.6zM917.6 300.3h6.5v2.8h-6.5zM920.3 300.3h6.5v2.8h-6.5zM927.8 300.3h2.6v2.8h-2.6zM925.8 296.0h2.1v2.8h-2.1zM928.9 296.0h2.6v2.8h-2.6zM934.0 309.0h2.6v2.8h-2.6zM939.5 309.0h3.9v2.8h-3.9zM944.4 309.0h2.6v2.8h-2.6zM947.7 317.7h2.6v2.8h-2.6zM951.3 317.7h2.6v2.8h-2.6zM955.9 330.8h2.6v2.8h-2.6zM972.3 339.5h2.6v2.8h-2.6zM975.9 339.5h2.6v2.8h-2.6zM975.0 330.8h2.6v2.8h-2.6zM978.6 330.8h2.6v2.8h-2.6zM991.4 326.4h2.1v2.8h-2.1zM994.5 326.4h2.6v2.8h-2.6zM994.1 317.7h3.9v2.8h-3.9zM999.6 309.0h2.6v2.8h-2.6zM1021.5 304.7h3.9v2.8h-3.9zM1026.4 304.7h2.6v2.8h-2.6z" fill="#1c9fe8"/><path d="M233.8 348.2h4.2v2.4h-4.2zM239.3 370.0h1.7v2.4h-1.7zM242.0 370.0h1.7v2.4h-1.7zM247.5 417.9h2.5v2.4h-2.5zM250.2 422.3h1.7v2.4h-1.7zM252.9 422.3h1.7v2.4h-1.7zM272.1 370.0h1.7v2.4h-1.7zM274.8 370.0h1.7v2.4h-1.7zM274.8 356.9h2.5v2.4h-2.5zM278.4 356.9h1.7v2.4h-1.7zM277.6 352.6h1.7v2.4h-1.7zM283.1 378.7h1.7v2.4h-1.7zM296.7 439.7h1.7v2.4h-1.7zM299.5 435.3h4.2v2.4h-4.2zM304.7 435.3h1.7v2.4h-1.7zM302.2 422.3h4.2v2.4h-4.2zM307.4 422.3h1.7v2.4h-1.7zM304.9 413.6h1.7v2.4h-1.7zM310.4 400.5h4.2v2.4h-4.2zM313.1 387.4h4.2v2.4h-4.2zM318.4 387.4h1.7v2.4h-1.7zM315.9 370.0h2.5v2.4h-2.5zM318.6 356.9h1.7v2.4h-1.7zM343.2 439.7h1.7v2.4h-1.7zM345.9 439.7h1.7v2.4h-1.7zM348.7 422.3h1.7v2.4h-1.7zM354.2 391.8h1.4v2.4h-1.4zM356.5 391.8h1.7v2.4h-1.7zM356.9 391.8h1.7v2.4h-1.7zM365.1 348.2h1.7v2.4h-1.7zM367.8 348.2h1.7v2.4h-1.7zM373.3 383.1h1.7v2.4h-1.7zM376.0 383.1h1.7v2.4h-1.7zM376.0 400.5h1.4v2.4h-1.4zM378.4 400.5h1.7v2.4h-1.7zM381.5 426.6h1.7v2.4h-1.7zM392.4 413.6h1.7v2.4h-1.7zM397.9 391.8h2.5v2.4h-2.5zM400.7 383.1h1.7v2.4h-1.7zM403.4 383.1h1.7v2.4h-1.7zM403.4 365.6h1.7v2.4h-1.7zM406.1 356.9h1.7v2.4h-1.7zM236.6 348.2h1.4v2.4h-1.4zM238.9 348.2h1.7v2.4h-1.7zM239.3 352.6h1.4v2.4h-1.4zM242.0 348.2h4.2v2.4h-4.2zM247.3 348.2h1.7v2.4h-1.7zM258.4 339.5h1.7v2.4h-1.7zM261.1 339.5h1.7v2.4h-1.7zM266.6 335.2h1.7v2.4h-1.7zM332.3 348.2h1.4v2.4h-1.4zM348.7 339.5h1.7v2.4h-1.7zM351.4 339.5h2.5v2.4h-2.5zM376.0 348.2h1.7v2.4h-1.7zM378.7 348.2h1.7v2.4h-1.7zM387.0 339.5h1.4v2.4h-1.4zM430.7 435.3h4.2v2.4h-4.2zM436.0 435.3h1.7v2.4h-1.7zM441.7 400.5h1.4v2.4h-1.4zM444.4 383.1h1.7v2.4h-1.7zM447.1 378.7h1.7v2.4h-1.7zM449.8 378.7h1.7v2.4h-1.7zM449.9 356.9h1.7v2.4h-1.7zM452.6 356.9h1.7v2.4h-1.7zM452.6 348.2h1.7v2.4h-1.7zM455.3 348.2h1.7v2.4h-1.7zM455.4 370.0h1.7v2.4h-1.7zM458.1 370.0h1.7v2.4h-1.7zM466.3 413.6h4.2v2.4h-4.2zM471.5 413.6h1.7v2.4h-1.7zM469.0 431.0h1.7v2.4h-1.7zM471.7 431.0h1.7v2.4h-1.7zM480.0 413.6h4.2v2.4h-4.2zM485.4 387.4h2.5v2.4h-2.5zM488.2 378.7h1.4v2.4h-1.4zM496.4 352.6h4.2v2.4h-4.2zM501.9 370.0h1.7v2.4h-1.7zM504.6 370.0h1.7v2.4h-1.7zM510.1 404.8h1.4v2.4h-1.4zM512.8 413.6h1.7v2.4h-1.7zM515.5 413.6h1.7v2.4h-1.7zM521.0 426.6h4.2v2.4h-4.2zM540.1 352.6h1.7v2.4h-1.7zM542.8 352.6h1.7v2.4h-1.7zM542.9 361.3h1.7v2.4h-1.7zM545.6 361.3h1.7v2.4h-1.7zM548.3 387.4h2.5v2.4h-2.5zM575.7 378.7h2.5v2.4h-2.5zM579.2 378.7h1.7v2.4h-1.7zM583.9 348.2h1.7v2.4h-1.7zM449.9 339.5h1.4v2.4h-1.4zM452.2 339.5h1.7v2.4h-1.7zM463.6 356.9h1.7v2.4h-1.7zM466.3 356.9h1.7v2.4h-1.7zM715.2 426.6h1.7v2.4h-1.7zM717.9 426.6h1.7v2.4h-1.7zM717.9 413.6h1.7v2.4h-1.7zM728.9 365.6h1.7v2.4h-1.7zM737.1 361.3h1.7v2.4h-1.7zM739.8 361.3h1.7v2.4h-1.7zM739.8 370.0h2.5v2.4h-2.5zM743.3 370.0h1.7v2.4h-1.7zM742.5 378.7h1.4v2.4h-1.4zM748.0 409.2h4.2v2.4h-4.2zM750.7 426.6h2.5v2.4h-2.5zM753.5 431.0h1.7v2.4h-1.7zM756.2 431.0h1.7v2.4h-1.7zM761.7 417.9h1.4v2.4h-1.4zM764.4 409.2h1.4v2.4h-1.4zM767.1 391.8h2.5v2.4h-2.5zM770.7 391.8h1.7v2.4h-1.7zM769.9 378.7h1.4v2.4h-1.4zM772.2 378.7h1.7v2.4h-1.7zM778.1 348.2h2.5v2.4h-2.5zM781.6 348.2h1.7v2.4h-1.7zM783.6 378.7h1.7v2.4h-1.7zM789.0 400.5h1.7v2.4h-1.7zM791.8 400.5h1.4v2.4h-1.4zM802.7 435.3h1.7v2.4h-1.7zM805.4 435.3h1.7v2.4h-1.7zM805.4 413.6h1.7v2.4h-1.7zM808.2 409.2h2.5v2.4h-2.5zM810.9 400.5h4.2v2.4h-4.2zM813.6 383.1h1.4v2.4h-1.4zM816.0 383.1h1.7v2.4h-1.7zM819.1 361.3h1.7v2.4h-1.7zM821.8 361.3h1.7v2.4h-1.7zM821.8 348.2h4.2v2.4h-4.2zM824.6 361.3h1.7v2.4h-1.7zM827.3 374.4h1.4v2.4h-1.4zM830.0 378.7h1.4v2.4h-1.4zM841.0 431.0h1.7v2.4h-1.7zM843.7 435.3h1.4v2.4h-1.4zM846.5 426.6h2.5v2.4h-2.5zM850.0 426.6h1.7v2.4h-1.7zM851.9 409.2h1.4v2.4h-1.4zM854.3 409.2h1.7v2.4h-1.7zM860.1 365.6h1.7v2.4h-1.7zM862.8 365.6h1.7v2.4h-1.7zM871.1 370.0h1.7v2.4h-1.7zM873.8 387.4h1.4v2.4h-1.4zM876.2 387.4h1.7v2.4h-1.7zM882.0 413.6h2.5v2.4h-2.5zM885.6 413.6h1.7v2.4h-1.7zM884.8 444.0h1.7v2.4h-1.7zM887.5 444.0h1.7v2.4h-1.7zM728.9 339.5h1.4v2.4h-1.4zM731.2 339.5h1.7v2.4h-1.7zM758.9 335.2h2.5v2.4h-2.5zM762.5 335.2h1.7v2.4h-1.7zM778.1 348.2h2.5v2.4h-2.5zM824.6 339.5h1.7v2.4h-1.7zM827.3 339.5h1.7v2.4h-1.7zM862.9 343.9h2.5v2.4h-2.5zM866.4 343.9h1.7v2.4h-1.7zM895.7 383.1h2.5v2.4h-2.5zM898.4 396.1h2.5v2.4h-2.5zM902.0 396.1h1.7v2.4h-1.7zM906.6 431.0h1.7v2.4h-1.7zM923.0 383.1h4.2v2.4h-4.2zM928.3 383.1h1.7v2.4h-1.7zM928.5 370.0h1.7v2.4h-1.7zM931.2 352.6h1.7v2.4h-1.7zM934.0 356.9h4.2v2.4h-4.2zM939.2 356.9h1.7v2.4h-1.7zM936.7 361.3h1.7v2.4h-1.7zM944.9 400.5h1.4v2.4h-1.4zM947.7 413.6h1.7v2.4h-1.7zM950.4 413.6h1.7v2.4h-1.7zM950.4 431.0h1.7v2.4h-1.7zM961.3 409.2h1.7v2.4h-1.7zM964.0 409.2h1.7v2.4h-1.7zM966.8 391.8h4.2v2.4h-4.2zM985.9 387.4h1.7v2.4h-1.7zM988.6 387.4h1.7v2.4h-1.7zM996.9 435.3h1.7v2.4h-1.7zM999.6 435.3h1.7v2.4h-1.7zM1005.1 417.9h1.7v2.4h-1.7zM1013.3 378.7h4.2v2.4h-4.2zM1032.4 391.8h2.5v2.4h-2.5zM1036.0 391.8h1.7v2.4h-1.7zM1037.9 422.3h2.5v2.4h-2.5zM1041.5 422.3h1.7v2.4h-1.7zM1043.4 435.3h1.4v2.4h-1.4zM1046.1 413.6h1.4v2.4h-1.4zM1048.8 409.2h4.2v2.4h-4.2zM1054.1 409.2h1.7v2.4h-1.7zM1051.6 404.8h1.7v2.4h-1.7zM914.8 339.5h1.7v2.4h-1.7zM925.8 339.5h1.7v2.4h-1.7zM928.5 339.5h1.7v2.4h-1.7zM991.4 339.5h1.7v2.4h-1.7zM1010.6 339.5h4.2v2.4h-4.2zM411.0 402.0h1.7v2.4h-1.7zM413.0 397.8h1.7v2.4h-1.7zM415.0 393.6h1.7v2.4h-1.7zM417.0 389.4h1.7v2.4h-1.7zM420.0 391.4h1.7v2.4h-1.7zM419.0 385.2h1.7v2.4h-1.7zM422.0 387.2h1.7v2.4h-1.7zM421.0 381.0h1.7v2.4h-1.7zM424.0 383.0h1.7v2.4h-1.7zM423.0 376.8h1.7v2.4h-1.7zM426.0 378.8h1.7v2.4h-1.7zM425.0 372.6h1.7v2.4h-1.7zM428.0 374.6h1.7v2.4h-1.7zM427.0 368.4h1.7v2.4h-1.7zM430.0 370.4h1.7v2.4h-1.7zM594.8 348.2h4.5v2.4h-4.5zM600.3 348.2h1.8v2.4h-1.8zM603.0 348.2h1.8v2.4h-1.8zM605.8 348.2h1.8v2.4h-1.8zM611.2 335.2h4.5v2.4h-4.5zM616.8 335.2h1.8v2.4h-1.8zM655.0 330.8h1.4v2.4h-1.4zM668.7 348.2h2.7v2.4h-2.7zM674.2 339.5h1.8v2.4h-1.8zM698.8 348.2h4.5v2.4h-4.5zM709.7 330.8h1.4v2.4h-1.4zM712.2 330.8h1.8v2.4h-1.8zM630.4 404.8h4.5v2.4h-4.5zM635.9 378.7h4.5v2.4h-4.5zM641.4 378.7h1.8v2.4h-1.8zM655.0 400.5h1.4v2.4h-1.4zM657.5 400.5h1.8v2.4h-1.8zM657.7 409.2h2.7v2.4h-2.7zM661.4 409.2h1.8v2.4h-1.8zM660.5 422.3h1.8v2.4h-1.8zM668.7 426.6h1.4v2.4h-1.4zM676.9 391.8h2.7v2.4h-2.7zM679.6 378.7h1.4v2.4h-1.4zM690.6 370.0h1.8v2.4h-1.8zM701.5 413.6h1.4v2.4h-1.4zM703.9 413.6h1.8v2.4h-1.8zM704.2 422.3h1.8v2.4h-1.8z" fill="#22e3b5"/><path d="M321.3 182.7h1.6v2.8h-1.6zM323.9 182.7h1.6v2.8h-1.6zM324.1 182.7h1.6v2.8h-1.6zM329.5 221.9h1.6v2.8h-1.6zM335.0 230.6h1.3v2.8h-1.3zM346.0 191.4h4.0v2.8h-4.0zM348.7 204.5h4.0v2.8h-4.0zM351.4 226.3h2.4v2.8h-2.4zM354.2 243.7h4.0v2.8h-4.0zM356.9 235.0h2.4v2.8h-2.4zM360.3 235.0h1.6v2.8h-1.6zM367.8 182.7h1.6v2.8h-1.6zM370.6 204.5h2.4v2.8h-2.4zM373.3 226.3h4.0v2.8h-4.0zM378.8 235.0h1.3v2.8h-1.3zM381.5 213.2h1.3v2.8h-1.3zM387.0 174.0h2.4v2.8h-2.4zM390.4 174.0h1.6v2.8h-1.6zM392.4 204.5h1.6v2.8h-1.6zM395.1 204.5h1.6v2.8h-1.6zM397.9 243.7h2.4v2.8h-2.4zM401.3 243.7h1.6v2.8h-1.6zM400.7 230.6h2.4v2.8h-2.4zM403.4 204.5h4.0v2.8h-4.0zM408.4 204.5h1.6v2.8h-1.6zM406.1 191.4h1.6v2.8h-1.6zM408.7 191.4h1.6v2.8h-1.6zM433.5 200.2h1.6v2.8h-1.6zM436.2 182.7h2.4v2.8h-2.4zM438.9 187.1h1.3v2.8h-1.3zM441.7 204.5h1.6v2.8h-1.6zM447.1 243.7h1.6v2.8h-1.6zM455.4 191.4h1.6v2.8h-1.6zM458.0 191.4h1.6v2.8h-1.6zM458.1 174.0h4.0v2.8h-4.0zM463.6 204.5h4.0v2.8h-4.0zM468.6 204.5h1.6v2.8h-1.6zM466.3 221.9h1.6v2.8h-1.6zM468.9 221.9h1.6v2.8h-1.6zM474.5 213.2h1.6v2.8h-1.6zM477.1 213.2h1.6v2.8h-1.6zM480.0 169.7h1.6v2.8h-1.6zM496.4 243.7h1.6v2.8h-1.6zM499.0 243.7h1.6v2.8h-1.6zM499.1 243.7h1.6v2.8h-1.6zM504.6 200.2h1.3v2.8h-1.3zM506.9 200.2h1.6v2.8h-1.6zM507.3 182.7h4.0v2.8h-4.0zM512.3 182.7h1.6v2.8h-1.6zM512.8 204.5h2.4v2.8h-2.4zM529.2 182.7h2.4v2.8h-2.4zM531.9 178.4h1.6v2.8h-1.6zM537.4 213.2h1.3v2.8h-1.3zM539.7 213.2h1.6v2.8h-1.6zM542.9 235.0h4.0v2.8h-4.0zM547.9 235.0h1.6v2.8h-1.6zM545.6 221.9h1.6v2.8h-1.6zM548.3 200.2h4.0v2.8h-4.0zM551.1 182.7h1.6v2.8h-1.6zM553.8 187.1h1.6v2.8h-1.6zM564.8 235.0h1.3v2.8h-1.3zM570.2 191.4h1.3v2.8h-1.3zM581.2 213.2h1.6v2.8h-1.6zM583.8 213.2h1.6v2.8h-1.6zM589.4 213.2h1.3v2.8h-1.3zM717.9 204.5h4.0v2.8h-4.0zM728.9 213.2h1.6v2.8h-1.6zM731.6 200.2h1.6v2.8h-1.6zM734.2 200.2h1.6v2.8h-1.6zM734.3 174.0h1.6v2.8h-1.6zM736.9 174.0h1.6v2.8h-1.6zM742.5 226.3h1.3v2.8h-1.3zM744.8 226.3h1.6v2.8h-1.6zM745.3 243.7h2.4v2.8h-2.4zM748.7 243.7h1.6v2.8h-1.6zM748.0 230.6h1.3v2.8h-1.3zM750.3 230.6h1.6v2.8h-1.6zM753.5 195.8h1.6v2.8h-1.6zM756.2 174.0h1.6v2.8h-1.6zM761.7 200.2h1.6v2.8h-1.6zM764.3 200.2h1.6v2.8h-1.6zM767.1 243.7h4.0v2.8h-4.0zM772.1 243.7h1.6v2.8h-1.6zM769.9 235.0h1.6v2.8h-1.6zM772.5 235.0h1.6v2.8h-1.6zM775.3 200.2h1.3v2.8h-1.3zM777.6 200.2h1.6v2.8h-1.6zM780.8 191.4h1.6v2.8h-1.6zM783.4 191.4h1.6v2.8h-1.6zM789.0 239.3h2.4v2.8h-2.4zM792.4 239.3h1.6v2.8h-1.6zM794.5 213.2h4.0v2.8h-4.0zM799.5 213.2h1.6v2.8h-1.6zM797.2 200.2h1.6v2.8h-1.6zM800.0 178.4h1.6v2.8h-1.6zM802.6 178.4h1.6v2.8h-1.6zM805.4 204.5h4.0v2.8h-4.0zM810.4 204.5h1.6v2.8h-1.6zM810.9 243.7h4.0v2.8h-4.0zM815.9 243.7h1.6v2.8h-1.6zM813.6 235.0h1.6v2.8h-1.6zM816.4 217.6h1.6v2.8h-1.6zM819.0 217.6h1.6v2.8h-1.6zM827.3 213.2h1.6v2.8h-1.6zM830.0 221.9h1.6v2.8h-1.6zM832.6 221.9h1.6v2.8h-1.6zM832.8 243.7h4.0v2.8h-4.0zM835.5 235.0h1.3v2.8h-1.3zM849.2 204.5h1.6v2.8h-1.6zM851.9 221.9h1.3v2.8h-1.3zM857.4 235.0h1.6v2.8h-1.6zM860.0 235.0h1.6v2.8h-1.6zM865.6 182.7h1.6v2.8h-1.6zM868.2 182.7h1.6v2.8h-1.6zM868.3 187.1h1.3v2.8h-1.3zM873.8 221.9h1.6v2.8h-1.6zM876.5 243.7h4.0v2.8h-4.0zM881.5 243.7h1.6v2.8h-1.6zM882.0 213.2h4.0v2.8h-4.0zM887.0 213.2h1.6v2.8h-1.6zM887.5 174.0h1.6v2.8h-1.6zM890.2 226.3h1.6v2.8h-1.6zM893.0 243.7h1.6v2.8h-1.6zM895.7 230.6h4.0v2.8h-4.0zM900.7 230.6h1.6v2.8h-1.6zM898.4 213.2h1.6v2.8h-1.6zM909.4 204.5h4.0v2.8h-4.0zM914.4 204.5h1.6v2.8h-1.6zM912.1 226.3h1.3v2.8h-1.3zM914.4 226.3h1.6v2.8h-1.6zM914.8 243.7h1.6v2.8h-1.6zM917.6 230.6h1.6v2.8h-1.6zM920.2 230.6h1.6v2.8h-1.6zM925.8 174.0h1.6v2.8h-1.6zM928.4 174.0h1.6v2.8h-1.6zM931.2 213.2h1.6v2.8h-1.6zM933.8 213.2h1.6v2.8h-1.6zM934.0 235.0h1.6v2.8h-1.6zM936.6 235.0h1.6v2.8h-1.6zM936.7 243.7h4.0v2.8h-4.0zM939.5 226.3h1.6v2.8h-1.6zM950.4 191.4h1.3v2.8h-1.3zM955.9 226.3h1.6v2.8h-1.6zM958.5 226.3h1.6v2.8h-1.6zM958.6 243.7h4.0v2.8h-4.0zM961.3 235.0h2.4v2.8h-2.4zM964.1 208.9h1.6v2.8h-1.6zM977.7 226.3h2.4v2.8h-2.4zM981.1 226.3h1.6v2.8h-1.6zM980.5 243.7h1.6v2.8h-1.6zM983.1 243.7h1.6v2.8h-1.6zM985.9 208.9h1.6v2.8h-1.6zM994.1 187.1h1.6v2.8h-1.6zM996.9 204.5h1.6v2.8h-1.6zM999.5 204.5h1.6v2.8h-1.6zM1002.4 243.7h1.3v2.8h-1.3zM1004.6 243.7h1.6v2.8h-1.6zM1010.6 191.4h1.6v2.8h-1.6zM1013.2 191.4h1.6v2.8h-1.6zM1013.3 174.0h1.6v2.8h-1.6zM1015.9 174.0h1.6v2.8h-1.6zM1016.0 191.4h2.4v2.8h-2.4zM1019.4 191.4h1.6v2.8h-1.6zM1021.5 235.0h4.0v2.8h-4.0zM1032.4 191.4h4.0v2.8h-4.0zM1037.9 182.7h1.6v2.8h-1.6zM1040.5 182.7h1.6v2.8h-1.6zM1040.6 213.2h4.0v2.8h-4.0zM1043.4 226.3h1.6v2.8h-1.6zM1046.0 226.3h1.6v2.8h-1.6zM1051.6 213.2h2.4v2.8h-2.4zM1055.0 213.2h1.6v2.8h-1.6zM682.4 191.4h2.0v2.8h-2.0zM687.8 243.7h3.0v2.8h-3.0zM693.3 287.3h2.0v2.8h-2.0zM698.8 235.0h5.0v2.8h-5.0zM701.5 208.9h2.0v2.8h-2.0zM704.2 191.4h2.0v2.8h-2.0zM707.2 191.4h2.0v2.8h-2.0zM709.7 243.7h1.6v2.8h-1.6zM712.4 265.5h5.0v2.8h-5.0z" fill="#3a1fe6"/><path d="M346.0 182.7h3.5v3.2h-3.5zM356.9 226.3h8.8v3.2h-8.8zM366.6 226.3h3.5v3.2h-3.5zM365.1 235.0h3.5v3.2h-3.5zM369.6 235.0h3.5v3.2h-3.5zM370.6 226.3h5.2v3.2h-5.2zM376.8 226.3h3.5v3.2h-3.5zM376.0 208.9h3.5v3.2h-3.5zM395.2 204.5h2.8v3.2h-2.8zM399.0 204.5h3.5v3.2h-3.5zM400.7 221.9h3.5v3.2h-3.5zM455.4 217.6h8.8v3.2h-8.8zM465.1 217.6h3.5v3.2h-3.5zM458.1 217.6h3.5v3.2h-3.5zM482.7 191.4h3.5v3.2h-3.5zM487.2 191.4h3.5v3.2h-3.5zM485.4 182.7h2.8v3.2h-2.8zM493.6 191.4h2.8v3.2h-2.8zM497.4 191.4h3.5v3.2h-3.5zM496.4 200.2h3.5v3.2h-3.5zM504.6 226.3h8.8v3.2h-8.8zM514.3 226.3h3.5v3.2h-3.5zM507.3 235.0h5.2v3.2h-5.2zM521.0 213.2h3.5v3.2h-3.5zM529.2 191.4h5.2v3.2h-5.2zM535.5 191.4h3.5v3.2h-3.5zM537.4 182.7h2.8v3.2h-2.8zM541.2 182.7h3.5v3.2h-3.5zM540.1 191.4h3.5v3.2h-3.5zM578.4 174.0h8.8v3.2h-8.8zM588.2 174.0h3.5v3.2h-3.5zM723.4 191.4h3.5v3.2h-3.5zM727.9 191.4h3.5v3.2h-3.5zM775.3 191.4h5.2v3.2h-5.2zM781.6 191.4h3.5v3.2h-3.5zM780.8 195.8h5.2v3.2h-5.2zM787.1 195.8h3.5v3.2h-3.5zM789.0 221.9h2.8v3.2h-2.8zM792.8 221.9h3.5v3.2h-3.5zM800.0 235.0h8.8v3.2h-8.8zM809.7 235.0h3.5v3.2h-3.5zM808.2 200.2h8.8v3.2h-8.8zM813.6 191.4h3.5v3.2h-3.5zM818.1 191.4h3.5v3.2h-3.5zM819.1 174.0h3.5v3.2h-3.5zM823.6 174.0h3.5v3.2h-3.5zM824.6 200.2h2.8v3.2h-2.8zM838.3 235.0h3.5v3.2h-3.5zM842.8 235.0h3.5v3.2h-3.5zM841.0 239.3h3.5v3.2h-3.5zM845.5 239.3h3.5v3.2h-3.5zM871.1 204.5h5.2v3.2h-5.2zM898.4 195.8h8.8v3.2h-8.8zM901.2 187.1h3.5v3.2h-3.5zM905.7 187.1h3.5v3.2h-3.5zM906.6 174.0h2.8v3.2h-2.8zM910.4 174.0h3.5v3.2h-3.5zM920.3 221.9h3.5v3.2h-3.5zM924.8 221.9h3.5v3.2h-3.5zM923.0 243.7h5.2v3.2h-5.2zM929.3 243.7h3.5v3.2h-3.5zM931.2 213.2h3.5v3.2h-3.5zM935.7 213.2h3.5v3.2h-3.5zM942.2 191.4h3.5v3.2h-3.5zM944.9 174.0h8.8v3.2h-8.8zM954.7 174.0h3.5v3.2h-3.5zM961.3 213.2h3.5v3.2h-3.5zM965.8 213.2h3.5v3.2h-3.5zM964.1 230.6h3.5v3.2h-3.5zM975.0 226.3h8.8v3.2h-8.8zM977.7 221.9h5.2v3.2h-5.2zM984.0 221.9h3.5v3.2h-3.5zM983.2 200.2h8.8v3.2h-8.8zM1005.1 213.2h3.5v3.2h-3.5zM1010.6 243.7h5.2v3.2h-5.2zM1018.8 221.9h2.8v3.2h-2.8zM1022.6 221.9h3.5v3.2h-3.5zM1027.0 187.1h3.5v3.2h-3.5zM1032.4 182.7h8.8v3.2h-8.8zM1040.6 182.7h3.5v3.2h-3.5zM1045.1 182.7h3.5v3.2h-3.5zM1046.1 204.5h3.5v3.2h-3.5zM683.0 229.5h8.0v3.2h-8.0zM690.0 243.5h9.0v3.2h-9.0zM627.0 295.0h9.0v3.2h-9.0zM673.0 282.0h7.0v3.2h-7.0z" fill="#3a1fe6"/><path d="M320.0 158.8h22.0v3.6h-22.0zM431.0 158.8h20.0v3.6h-20.0zM595.0 190.5h32.0v3.6h-32.0zM716.0 158.8h22.0v3.6h-22.0zM891.0 155.6h22.0v3.6h-22.0z" fill="#3a1fe6"/><path d="M409.0 158.0h8.0v3.0h-8.0z" fill="#c3f000"/><path d="M427.0 174.8h13.0v3.2h-13.0z" fill="#c3f000"/><path d="M416.0 192.0h9.0v2.8h-9.0z" fill="#e8e000"/><path d="M693.0 216.5h10.0v3.4h-10.0z" fill="#f0109a"/><path d="M410.5 318.0h1.7v2.6h-1.7zM417.0 322.0h1.7v2.6h-1.7zM411.4 311.4h1.7v2.6h-1.7zM412.4 304.8h1.7v2.6h-1.7zM418.4 309.6h1.7v2.6h-1.7zM413.4 298.2h1.7v2.6h-1.7zM414.3 291.6h1.7v2.6h-1.7zM419.8 297.2h1.7v2.6h-1.7zM415.2 285.0h1.7v2.6h-1.7zM416.2 278.4h1.7v2.6h-1.7zM421.2 284.8h1.7v2.6h-1.7zM417.1 271.8h1.7v2.6h-1.7zM418.1 265.2h1.7v2.6h-1.7zM422.6 272.4h1.7v2.6h-1.7zM419.1 258.6h1.7v2.6h-1.7zM420.0 252.0h1.7v2.6h-1.7zM424.0 260.0h1.7v2.6h-1.7zM420.9 245.4h1.7v2.6h-1.7zM421.9 238.8h1.7v2.6h-1.7zM425.4 247.6h1.7v2.6h-1.7zM422.9 232.2h1.7v2.6h-1.7zM423.8 225.6h1.7v2.6h-1.7zM426.8 235.2h1.7v2.6h-1.7zM424.8 219.0h1.7v2.6h-1.7zM425.7 212.4h1.7v2.6h-1.7zM428.2 222.8h1.7v2.6h-1.7zM426.6 205.8h1.7v2.6h-1.7zM427.6 199.2h1.7v2.6h-1.7zM429.6 210.4h1.7v2.6h-1.7zM428.6 192.6h1.7v2.6h-1.7z" fill="#3a1fe6"/><path d="M413.5 326.0h1.7v2.6h-1.7zM414.4 319.4h1.7v2.6h-1.7zM415.3 312.8h1.7v2.6h-1.7zM416.2 306.2h1.7v2.6h-1.7zM417.1 299.6h1.7v2.6h-1.7zM418.0 293.0h1.7v2.6h-1.7zM418.9 286.4h1.7v2.6h-1.7zM419.8 279.8h1.7v2.6h-1.7zM420.7 273.2h1.7v2.6h-1.7zM421.6 266.6h1.7v2.6h-1.7zM422.5 260.0h1.7v2.6h-1.7zM423.4 253.4h1.7v2.6h-1.7zM424.3 246.8h1.7v2.6h-1.7zM425.2 240.2h1.7v2.6h-1.7zM426.1 233.6h1.7v2.6h-1.7zM427.0 227.0h1.7v2.6h-1.7zM427.9 220.4h1.7v2.6h-1.7zM428.8 213.8h1.7v2.6h-1.7zM429.7 207.2h1.7v2.6h-1.7zM430.6 200.6h1.7v2.6h-1.7z" fill="#7a22e0"/><path d="M427.0 196.0h4.0v3.2h-4.0zM427.0 213.0h4.0v3.2h-4.0zM428.0 262.0h4.0v3.2h-4.0zM428.0 275.0h4.0v3.2h-4.0zM428.0 305.0h4.0v3.2h-4.0z" fill="#7a22e0"/><path d="M603.0 226.3h2.0v2.4h-2.0zM606.0 226.3h2.0v2.4h-2.0zM624.9 204.5h5.0v2.4h-5.0zM630.9 204.5h2.0v2.4h-2.0zM649.5 213.2h3.0v2.4h-3.0zM652.3 208.9h2.0v2.4h-2.0zM674.2 226.3h2.0v2.4h-2.0zM611.2 265.5h2.0v2.4h-2.0zM614.2 265.5h2.0v2.4h-2.0zM660.5 269.8h3.0v2.4h-3.0z" fill="#e0208a"/><path d="M233.8 155v314M408.9 155v314M430.7 155v314M594.8 155v314M682.4 155v314M715.2 155v314M890.2 155v314M1054.3 155v314M1174.7 155v314" stroke="#ac1414" stroke-width="1.500" fill="none" shape-rendering="geometricPrecision"/><rect x="1241" y="155" width="6" height="314" fill="#3c3c3c"/><rect x="143" y="155" width="3" height="314" fill="#2f3a3a"/><rect x="146" y="155" width="1.2" height="314" fill="#5fb3a8"/></svg>
<svg class="abs" style="left:143px;top:469px" width="1104" height="317" viewBox="143 469 1104 317"><rect x="143" y="469" width="1104" height="317" fill="#5a5a5a"/><path d="M157.5 469v317M179.5 469v317M201.5 469v317M223.5 469v317M245.5 469v317M267.5 469v317M289.5 469v317M310.5 469v317M332.5 469v317M354.5 469v317M376.5 469v317M398.5 469v317M420.5 469v317M442.5 469v317M464.5 469v317M485.5 469v317M507.5 469v317M529.5 469v317M551.5 469v317M573.5 469v317M595.5 469v317M617.5 469v317M639.5 469v317M660.5 469v317M682.5 469v317M704.5 469v317M726.5 469v317M748.5 469v317M770.5 469v317M792.5 469v317M814.5 469v317M836.5 469v317M857.5 469v317M879.5 469v317M901.5 469v317M923.5 469v317M945.5 469v317M967.5 469v317M989.5 469v317M1011.5 469v317M1032.5 469v317M1054.5 469v317M1076.5 469v317M1098.5 469v317M1120.5 469v317M1142.5 469v317M1164.5 469v317M1186.5 469v317M1207.5 469v317M1229.5 469v317" stroke="#5d5d5d" stroke-width="1" fill="none" shape-rendering="crispEdges"/><path d="M146.5 469v317M168.5 469v317M190.5 469v317M212.5 469v317M234.5 469v317M256.5 469v317M278.5 469v317M299.5 469v317M321.5 469v317M343.5 469v317M365.5 469v317M387.5 469v317M409.5 469v317M431.5 469v317M453.5 469v317M474.5 469v317M496.5 469v317M518.5 469v317M540.5 469v317M562.5 469v317M584.5 469v317M606.5 469v317M628.5 469v317M650.5 469v317M671.5 469v317M693.5 469v317M715.5 469v317M737.5 469v317M759.5 469v317M781.5 469v317M803.5 469v317M825.5 469v317M846.5 469v317M868.5 469v317M890.5 469v317M912.5 469v317M934.5 469v317M956.5 469v317M978.5 469v317M1000.5 469v317M1022.5 469v317M1043.5 469v317M1065.5 469v317M1087.5 469v317M1109.5 469v317M1131.5 469v317M1153.5 469v317M1175.5 469v317M1197.5 469v317M1218.5 469v317M1240.5 469v317" stroke="#7a7a7a" stroke-width="1" fill="none" shape-rendering="crispEdges"/><rect x="1241" y="469" width="6" height="317" fill="#444"/><rect x="143" y="469.2" width="1104" height="8.2" fill="#343434"/><path d="M147.20 471.2h2.100v2h-2.100zM1219.30 471.2h2.100v2h-2.100zM147.20 474.4h2.100v2h-2.100zM1219.30 474.4h2.100v2h-2.100zM150.45 471.2h2.100v2h-2.100zM1222.55 471.2h2.100v2h-2.100zM150.45 474.4h2.100v2h-2.100zM1222.55 474.4h2.100v2h-2.100zM153.70 471.2h2.100v2h-2.100zM1225.80 471.2h2.100v2h-2.100zM153.70 474.4h2.100v2h-2.100zM1225.80 474.4h2.100v2h-2.100zM156.95 471.2h2.100v2h-2.100zM1229.05 471.2h2.100v2h-2.100zM156.95 474.4h2.100v2h-2.100zM1229.05 474.4h2.100v2h-2.100zM160.20 471.2h2.100v2h-2.100zM1232.30 471.2h2.100v2h-2.100zM160.20 474.4h2.100v2h-2.100zM1232.30 474.4h2.100v2h-2.100zM163.45 471.2h2.100v2h-2.100zM1235.55 471.2h2.100v2h-2.100zM163.45 474.4h2.100v2h-2.100zM1235.55 474.4h2.100v2h-2.100zM166.70 471.2h2.100v2h-2.100zM1238.80 471.2h2.100v2h-2.100zM166.70 474.4h2.100v2h-2.100zM1238.80 474.4h2.100v2h-2.100zM169.95 471.2h2.100v2h-2.100zM1242.05 471.2h2.100v2h-2.100zM169.95 474.4h2.100v2h-2.100zM1242.05 474.4h2.100v2h-2.100z" fill="#f0f0f0"/><rect x="143" y="499.8" width="1104" height="8.4" fill="#343434"/><path d="M147.20 501.8h2.100v2h-2.100zM1219.30 501.8h2.100v2h-2.100zM147.20 505.0h2.100v2h-2.100zM1219.30 505.0h2.100v2h-2.100zM150.45 501.8h2.100v2h-2.100zM1222.55 501.8h2.100v2h-2.100zM150.45 505.0h2.100v2h-2.100zM1222.55 505.0h2.100v2h-2.100zM153.70 501.8h2.100v2h-2.100zM1225.80 501.8h2.100v2h-2.100zM153.70 505.0h2.100v2h-2.100zM1225.80 505.0h2.100v2h-2.100zM156.95 501.8h2.100v2h-2.100zM1229.05 501.8h2.100v2h-2.100zM156.95 505.0h2.100v2h-2.100zM1229.05 505.0h2.100v2h-2.100zM160.20 501.8h2.100v2h-2.100zM1232.30 501.8h2.100v2h-2.100zM160.20 505.0h2.100v2h-2.100zM1232.30 505.0h2.100v2h-2.100zM163.45 501.8h2.100v2h-2.100zM1235.55 501.8h2.100v2h-2.100zM163.45 505.0h2.100v2h-2.100zM1235.55 505.0h2.100v2h-2.100zM166.70 501.8h2.100v2h-2.100zM1238.80 501.8h2.100v2h-2.100zM166.70 505.0h2.100v2h-2.100zM1238.80 505.0h2.100v2h-2.100zM169.95 501.8h2.100v2h-2.100zM1242.05 501.8h2.100v2h-2.100zM169.95 505.0h2.100v2h-2.100zM1242.05 505.0h2.100v2h-2.100z" fill="#f0f0f0"/><rect x="143" y="531.4" width="1104" height="8.2" fill="#343434"/><path d="M147.20 533.4h2.100v2h-2.100zM1219.30 533.4h2.100v2h-2.100zM147.20 536.6h2.100v2h-2.100zM1219.30 536.6h2.100v2h-2.100zM150.45 533.4h2.100v2h-2.100zM1222.55 533.4h2.100v2h-2.100zM150.45 536.6h2.100v2h-2.100zM1222.55 536.6h2.100v2h-2.100zM153.70 533.4h2.100v2h-2.100zM1225.80 533.4h2.100v2h-2.100zM153.70 536.6h2.100v2h-2.100zM1225.80 536.6h2.100v2h-2.100zM156.95 533.4h2.100v2h-2.100zM1229.05 533.4h2.100v2h-2.100zM156.95 536.6h2.100v2h-2.100zM1229.05 536.6h2.100v2h-2.100zM160.20 533.4h2.100v2h-2.100zM1232.30 533.4h2.100v2h-2.100zM160.20 536.6h2.100v2h-2.100zM1232.30 536.6h2.100v2h-2.100zM163.45 533.4h2.100v2h-2.100zM1235.55 533.4h2.100v2h-2.100zM163.45 536.6h2.100v2h-2.100zM1235.55 536.6h2.100v2h-2.100zM166.70 533.4h2.100v2h-2.100zM1238.80 533.4h2.100v2h-2.100zM166.70 536.6h2.100v2h-2.100zM1238.80 536.6h2.100v2h-2.100zM169.95 533.4h2.100v2h-2.100zM1242.05 533.4h2.100v2h-2.100zM169.95 536.6h2.100v2h-2.100zM1242.05 536.6h2.100v2h-2.100z" fill="#f0f0f0"/><rect x="143" y="587.2" width="1104" height="8.0" fill="#343434"/><path d="M147.20 589.2h2.100v2h-2.100zM1219.30 589.2h2.100v2h-2.100zM147.20 592.4h2.100v2h-2.100zM1219.30 592.4h2.100v2h-2.100zM150.45 589.2h2.100v2h-2.100zM1222.55 589.2h2.100v2h-2.100zM150.45 592.4h2.100v2h-2.100zM1222.55 592.4h2.100v2h-2.100zM153.70 589.2h2.100v2h-2.100zM1225.80 589.2h2.100v2h-2.100zM153.70 592.4h2.100v2h-2.100zM1225.80 592.4h2.100v2h-2.100zM156.95 589.2h2.100v2h-2.100zM1229.05 589.2h2.100v2h-2.100zM156.95 592.4h2.100v2h-2.100zM1229.05 592.4h2.100v2h-2.100zM160.20 589.2h2.100v2h-2.100zM1232.30 589.2h2.100v2h-2.100zM160.20 592.4h2.100v2h-2.100zM1232.30 592.4h2.100v2h-2.100zM163.45 589.2h2.100v2h-2.100zM1235.55 589.2h2.100v2h-2.100zM163.45 592.4h2.100v2h-2.100zM1235.55 592.4h2.100v2h-2.100zM166.70 589.2h2.100v2h-2.100zM1238.80 589.2h2.100v2h-2.100zM166.70 592.4h2.100v2h-2.100zM1238.80 592.4h2.100v2h-2.100zM169.95 589.2h2.100v2h-2.100zM1242.05 589.2h2.100v2h-2.100zM169.95 592.4h2.100v2h-2.100zM1242.05 592.4h2.100v2h-2.100z" fill="#f0f0f0"/><rect x="143" y="617.2" width="1104" height="8.1" fill="#343434"/><path d="M147.20 619.2h2.100v2h-2.100zM1219.30 619.2h2.100v2h-2.100zM147.20 622.4h2.100v2h-2.100zM1219.30 622.4h2.100v2h-2.100zM150.45 619.2h2.100v2h-2.100zM1222.55 619.2h2.100v2h-2.100zM150.45 622.4h2.100v2h-2.100zM1222.55 622.4h2.100v2h-2.100zM153.70 619.2h2.100v2h-2.100zM1225.80 619.2h2.100v2h-2.100zM153.70 622.4h2.100v2h-2.100zM1225.80 622.4h2.100v2h-2.100zM156.95 619.2h2.100v2h-2.100zM1229.05 619.2h2.100v2h-2.100zM156.95 622.4h2.100v2h-2.100zM1229.05 622.4h2.100v2h-2.100zM160.20 619.2h2.100v2h-2.100zM1232.30 619.2h2.100v2h-2.100zM160.20 622.4h2.100v2h-2.100zM1232.30 622.4h2.100v2h-2.100zM163.45 619.2h2.100v2h-2.100zM1235.55 619.2h2.100v2h-2.100zM163.45 622.4h2.100v2h-2.100zM1235.55 622.4h2.100v2h-2.100zM166.70 619.2h2.100v2h-2.100zM1238.80 619.2h2.100v2h-2.100zM166.70 622.4h2.100v2h-2.100zM1238.80 622.4h2.100v2h-2.100zM169.95 619.2h2.100v2h-2.100zM1242.05 619.2h2.100v2h-2.100zM169.95 622.4h2.100v2h-2.100zM1242.05 622.4h2.100v2h-2.100z" fill="#f0f0f0"/><rect x="143" y="652.2" width="1104" height="7.5" fill="#343434"/><path d="M147.20 654.2h2.100v2h-2.100zM1219.30 654.2h2.100v2h-2.100zM147.20 657.4h2.100v2h-2.100zM1219.30 657.4h2.100v2h-2.100zM150.45 654.2h2.100v2h-2.100zM1222.55 654.2h2.100v2h-2.100zM150.45 657.4h2.100v2h-2.100zM1222.55 657.4h2.100v2h-2.100zM153.70 654.2h2.100v2h-2.100zM1225.80 654.2h2.100v2h-2.100zM153.70 657.4h2.100v2h-2.100zM1225.80 657.4h2.100v2h-2.100zM156.95 654.2h2.100v2h-2.100zM1229.05 654.2h2.100v2h-2.100zM156.95 657.4h2.100v2h-2.100zM1229.05 657.4h2.100v2h-2.100zM160.20 654.2h2.100v2h-2.100zM1232.30 654.2h2.100v2h-2.100zM160.20 657.4h2.100v2h-2.100zM1232.30 657.4h2.100v2h-2.100zM163.45 654.2h2.100v2h-2.100zM1235.55 654.2h2.100v2h-2.100zM163.45 657.4h2.100v2h-2.100zM1235.55 657.4h2.100v2h-2.100zM166.70 654.2h2.100v2h-2.100zM1238.80 654.2h2.100v2h-2.100zM166.70 657.4h2.100v2h-2.100zM1238.80 657.4h2.100v2h-2.100zM169.95 654.2h2.100v2h-2.100zM1242.05 654.2h2.100v2h-2.100zM169.95 657.4h2.100v2h-2.100zM1242.05 657.4h2.100v2h-2.100z" fill="#f0f0f0"/><rect x="143" y="706" width="1104" height="8.3" fill="#343434"/><path d="M147.20 708.0h2.100v2h-2.100zM1219.30 708.0h2.100v2h-2.100zM147.20 711.2h2.100v2h-2.100zM1219.30 711.2h2.100v2h-2.100zM150.45 708.0h2.100v2h-2.100zM1222.55 708.0h2.100v2h-2.100zM150.45 711.2h2.100v2h-2.100zM1222.55 711.2h2.100v2h-2.100zM153.70 708.0h2.100v2h-2.100zM1225.80 708.0h2.100v2h-2.100zM153.70 711.2h2.100v2h-2.100zM1225.80 711.2h2.100v2h-2.100zM156.95 708.0h2.100v2h-2.100zM1229.05 708.0h2.100v2h-2.100zM156.95 711.2h2.100v2h-2.100zM1229.05 711.2h2.100v2h-2.100zM160.20 708.0h2.100v2h-2.100zM1232.30 708.0h2.100v2h-2.100zM160.20 711.2h2.100v2h-2.100zM1232.30 711.2h2.100v2h-2.100zM163.45 708.0h2.100v2h-2.100zM1235.55 708.0h2.100v2h-2.100zM163.45 711.2h2.100v2h-2.100zM1235.55 711.2h2.100v2h-2.100zM166.70 708.0h2.100v2h-2.100zM1238.80 708.0h2.100v2h-2.100zM166.70 711.2h2.100v2h-2.100zM1238.80 711.2h2.100v2h-2.100zM169.95 708.0h2.100v2h-2.100zM1242.05 708.0h2.100v2h-2.100zM169.95 711.2h2.100v2h-2.100zM1242.05 711.2h2.100v2h-2.100z" fill="#f0f0f0"/><path d="M146 508.500H1175L1235 530L1240 531.500H146Z" fill="#96357f" opacity="0.78"/><path d="M146 509.500H1175L1235 530L1240 531" stroke="#cf2cae" stroke-width="1.500" fill="none"/><path d="M146 519.500H1205" stroke="#3a2a3a" stroke-width="1" opacity="0.450"/><rect x="1172.500" y="507" width="5" height="5" fill="#f0109a"/><rect x="1226" y="526" width="6" height="5" fill="#f0109a"/><path d="M146 499V484l2 -4l2 4V499Z" fill="#c51cc0"/><text x="156" y="493.500" font-family="Liberation Sans,sans-serif" font-size="11.500" fill="#989898">Distortion Guitar</text><path d="M406 499V484l2 -4l2 4V499Z" fill="#b01cf0"/><text x="416" y="493.500" font-family="Liberation Sans,sans-serif" font-size="11.500" fill="#989898">Brass Section</text><path d="M877 499V484l2 -4l2 4V499Z" fill="#f08a10"/><text x="887" y="493.500" font-family="Liberation Sans,sans-serif" font-size="11.500" fill="#989898">Timpani</text><path d="M1052 499V484l2 -4l2 4V499Z" fill="#f08a10"/><text x="1062" y="493.500" font-family="Liberation Sans,sans-serif" font-size="11.500" fill="#989898">Sine Wave</text><path d="M146 567.700H1240" stroke="#b8a820" stroke-width="1.200"/><path d="M146 583.300H1240" stroke="#e6e010" stroke-width="2.200"/><path d="M146 585.200H1240" stroke="#d020a0" stroke-width="1.300"/><path d="M683.500 566V583" stroke="#e6e010" stroke-width="1.200"/><circle cx="640" cy="584.500" r="2.300" fill="#f0109a"/><circle cx="646" cy="584.500" r="2.300" fill="#f0109a"/><circle cx="651" cy="584.500" r="2.300" fill="#f0109a"/><circle cx="656" cy="584.500" r="2.300" fill="#f0109a"/><circle cx="662" cy="584.500" r="2.300" fill="#f0109a"/><circle cx="674" cy="584.500" r="2.300" fill="#f0109a"/><circle cx="683.5" cy="582" r="3" fill="#dfe020"/><circle cx="691.5" cy="582" r="3" fill="#dfe020"/><circle cx="704" cy="582" r="3" fill="#dfe020"/><circle cx="1096" cy="582.500" r="2.800" fill="#f0109a"/><circle cx="1106" cy="582.500" r="2.800" fill="#f0109a"/><circle cx="1183" cy="582.500" r="2.800" fill="#f0109a"/><circle cx="1187" cy="582.500" r="2.800" fill="#f0109a"/><circle cx="148" cy="567.700" r="2.500" fill="#e0c020"/><circle cx="148" cy="583" r="2.500" fill="#e040a0"/><rect x="146" y="595" width="1094" height="22.500" fill="#96357f" opacity="0.720"/><path d="M146 606H1240" stroke="#3a2a3a" stroke-width="1" opacity="0.400"/><path d="M146 596H1240" stroke="#cf2cae" stroke-width="1.300"/><path d="M232 615.500H1240" stroke="#e0d020" stroke-width="1.300"/><path d="M147.0 596V616M149.7 596V616M152.5 596V616M155.2 596V616M157.9 596V616M160.6 596V616M163.4 596V616M166.1 596V616M168.8 596V616M171.6 596V616M174.3 596V616M177.0 596V616M179.8 596V616M182.5 596V616M185.2 596V616M187.9 596V616M190.7 596V616M193.4 596V616M196.1 596V616M198.9 596V616M201.6 596V616M204.3 596V616M207.1 596V616M209.8 596V616M212.5 596V616M215.2 596V616M218.0 596V616M220.7 596V616M223.4 596V616M226.2 596V616M228.9 596V616M231.6 596V616" stroke="#3a1fe6" stroke-width="1.600"/><path d="M146 596H232" stroke="#3a1fe6" stroke-width="3.500"/><path d="M146 615H234" stroke="#3a1fe6" stroke-width="4"/><path d="M232 615H310V597" stroke="#3a1fe6" stroke-width="1.400" fill="none"/><circle cx="310" cy="596.500" r="2.700" fill="#3a1fe6"/><circle cx="233" cy="596.500" r="3" fill="#f0a020"/><path d="M233 597V612" stroke="#f0a020" stroke-width="1.500"/><path d="M411.7 596L411 614.500" stroke="#c8e820" stroke-width="1.800"/><circle cx="411.7" cy="596" r="3.100" fill="#c8e820"/><circle cx="411" cy="614.500" r="3.100" fill="#c8e820"/><path d="M427.4 596L426 614.500" stroke="#c8e820" stroke-width="1.800"/><circle cx="427.4" cy="596" r="3.100" fill="#c8e820"/><circle cx="426" cy="614.500" r="3.100" fill="#c8e820"/><path d="M431.5 596L431 614.500" stroke="#c8e820" stroke-width="1.800"/><circle cx="431.5" cy="596" r="3.100" fill="#c8e820"/><circle cx="431" cy="614.500" r="3.100" fill="#c8e820"/><path d="M440.6 596L442 614.500" stroke="#c8e820" stroke-width="1.800"/><circle cx="440.6" cy="596" r="3.100" fill="#c8e820"/><circle cx="442" cy="614.500" r="3.100" fill="#c8e820"/><path d="M445 597 Q520 598 624 615" stroke="#d8c828" stroke-width="1.200" fill="none"/><path d="M620 596H628M622 596L624 615L626 596" fill="none" stroke="#3a1fe6" stroke-width="1.800"/><circle cx="624" cy="615" r="2.800" fill="#3a1fe6"/><path d="M664 596H672M666 596L668 615L670 596" fill="none" stroke="#3a1fe6" stroke-width="1.800"/><circle cx="668" cy="615" r="2.800" fill="#3a1fe6"/><path d="M683.4 596L683 615" stroke="#d8e020" stroke-width="1.800"/><circle cx="683.4" cy="596" r="2.900" fill="#d8e020"/><circle cx="683" cy="615" r="2.900" fill="#d8e020"/><path d="M689 596L690 615" stroke="#f0109a" stroke-width="1.800"/><circle cx="689" cy="596" r="2.900" fill="#f0109a"/><circle cx="690" cy="615" r="2.900" fill="#f0109a"/><path d="M693 596L694 615" stroke="#f0109a" stroke-width="1.800"/><circle cx="693" cy="596" r="2.900" fill="#f0109a"/><circle cx="694" cy="615" r="2.900" fill="#f0109a"/><path d="M701.3 596L697 615" stroke="#d8e020" stroke-width="1.800"/><circle cx="701.3" cy="596" r="2.900" fill="#d8e020"/><circle cx="697" cy="615" r="2.900" fill="#d8e020"/><path d="M701.3 596L706 615" stroke="#f0109a" stroke-width="1.800"/><circle cx="701.3" cy="596" r="2.900" fill="#f0109a"/><circle cx="706" cy="615" r="2.900" fill="#f0109a"/><path d="M710 597H1055" stroke="#3a1fe6" stroke-width="1.300"/><path d="M706 615.500L1055 598" stroke="#d020a0" stroke-width="1.300"/><path d="M1060 597L1054 615" stroke="#3a1fe6" stroke-width="1.600"/><circle cx="1060" cy="596.500" r="2.800" fill="#3a1fe6"/><circle cx="1054" cy="615" r="2.800" fill="#3a1fe6"/><path d="M1060 597L1060 615" stroke="#f0109a" stroke-width="1.600"/><circle cx="1060" cy="596.500" r="2.800" fill="#f0109a"/><circle cx="1060" cy="615" r="2.800" fill="#f0109a"/><path d="M1087 597L1098 615" stroke="#3a1fe6" stroke-width="1.600"/><circle cx="1087" cy="596.500" r="2.800" fill="#3a1fe6"/><circle cx="1098" cy="615" r="2.800" fill="#3a1fe6"/><path d="M1103 597L1098 615" stroke="#3a1fe6" stroke-width="1.600"/><circle cx="1103" cy="596.500" r="2.800" fill="#3a1fe6"/><circle cx="1098" cy="615" r="2.800" fill="#3a1fe6"/><path d="M1106 597L1106 615" stroke="#f0109a" stroke-width="1.600"/><circle cx="1106" cy="596.500" r="2.800" fill="#f0109a"/><circle cx="1106" cy="615" r="2.800" fill="#f0109a"/><path d="M1132 597L1142 615" stroke="#3a1fe6" stroke-width="1.600"/><circle cx="1132" cy="596.500" r="2.800" fill="#3a1fe6"/><circle cx="1142" cy="615" r="2.800" fill="#3a1fe6"/><path d="M1148 597L1142 615" stroke="#3a1fe6" stroke-width="1.600"/><circle cx="1148" cy="596.500" r="2.800" fill="#3a1fe6"/><circle cx="1142" cy="615" r="2.800" fill="#3a1fe6"/><path d="M1165 597L1165 615" stroke="#f0109a" stroke-width="1.600"/><circle cx="1165" cy="596.500" r="2.800" fill="#f0109a"/><circle cx="1165" cy="615" r="2.800" fill="#f0109a"/><path d="M1176 597L1186 615" stroke="#3a1fe6" stroke-width="1.600"/><circle cx="1176" cy="596.500" r="2.800" fill="#3a1fe6"/><circle cx="1186" cy="615" r="2.800" fill="#3a1fe6"/><path d="M1192 597L1186 615" stroke="#3a1fe6" stroke-width="1.600"/><circle cx="1192" cy="596.500" r="2.800" fill="#3a1fe6"/><circle cx="1186" cy="615" r="2.800" fill="#3a1fe6"/><path d="M1186 597L1186 615" stroke="#f0109a" stroke-width="1.600"/><circle cx="1186" cy="596.500" r="2.800" fill="#f0109a"/><circle cx="1186" cy="615" r="2.800" fill="#f0109a"/><path d="M1219 597L1229 615" stroke="#3a1fe6" stroke-width="1.600"/><circle cx="1219" cy="596.500" r="2.800" fill="#3a1fe6"/><circle cx="1229" cy="615" r="2.800" fill="#3a1fe6"/><path d="M1229 615L1240 617" stroke="#3a1fe6" stroke-width="1.300"/><rect x="146" y="640" width="1094" height="9" fill="#96357f" opacity="0.650"/><path d="M146 633.700H226" stroke="#60d020" stroke-width="1.300"/><path d="M146 637.3H1240" stroke="#20c8e0" stroke-width="1.8"/><path d="M146 639.8H1240" stroke="#2020c0" stroke-width="1.5"/><path d="M146 643H1240" stroke="#d01818" stroke-width="2.6"/><path d="M146 646.3H1240" stroke="#b820b0" stroke-width="2.2"/><path d="M146 650.7H1240" stroke="#e0d020" stroke-width="1.5"/><path d="M222.500 627.500a3.200 3.200 0 0 1 6 0l4 9v8a3 3 0 0 1 -6 0v-7z" fill="#f07020"/><path d="M227 641h5.500M227 643.500h5.500" stroke="#f0c030" stroke-width="0.800"/><circle cx="977" cy="629.500" r="3.200" fill="#f07020"/><path d="M975.500 630h3v9h-3z" fill="#f07020"/><path d="M974.500 639h5v3.500h-5z" fill="#f0d0c0"/><path d="M426 639H441M427 649L429 640M441 649L439 640" stroke="#d8e060" stroke-width="1.800" fill="none"/><circle cx="427" cy="649.500" r="3" fill="#c8e820"/><circle cx="441.500" cy="649.500" r="3" fill="#c8e820"/><path d="M594 640.500H683" stroke="#e0c020" stroke-width="1.300"/><circle cx="594" cy="640" r="2.800" fill="#f07020"/><circle cx="594" cy="645.500" r="2.800" fill="#3030e0"/><circle cx="683" cy="640" r="2.800" fill="#3030e0"/><circle cx="148" cy="633.700" r="2.800" fill="#60d020"/><circle cx="148" cy="637.500" r="2.800" fill="#20c8e0"/><circle cx="148" cy="650.500" r="2.600" fill="#e0d020"/><rect x="146" y="669" width="84.500" height="37" fill="#ee6a1a"/><circle cx="151.8" cy="672" r="3.100" fill="#c51cf2"/><circle cx="147.1" cy="694" r="2.500" fill="#3a1fe6"/><circle cx="149.7" cy="690" r="2.500" fill="#3a1fe6"/><circle cx="152.4" cy="687" r="2.500" fill="#3a1fe6"/><circle cx="155.1" cy="685" r="2.500" fill="#3a1fe6"/><circle cx="162.7" cy="672" r="3.100" fill="#c51cf2"/><circle cx="158.0" cy="694" r="2.500" fill="#3a1fe6"/><circle cx="160.6" cy="690" r="2.500" fill="#3a1fe6"/><circle cx="163.3" cy="687" r="2.500" fill="#3a1fe6"/><circle cx="166.0" cy="685" r="2.500" fill="#3a1fe6"/><circle cx="173.7" cy="672" r="3.100" fill="#c51cf2"/><circle cx="169.0" cy="694" r="2.500" fill="#3a1fe6"/><circle cx="171.6" cy="690" r="2.500" fill="#3a1fe6"/><circle cx="174.3" cy="687" r="2.500" fill="#3a1fe6"/><circle cx="177.0" cy="685" r="2.500" fill="#3a1fe6"/><circle cx="184.6" cy="672" r="3.100" fill="#c51cf2"/><circle cx="179.9" cy="694" r="2.500" fill="#3a1fe6"/><circle cx="182.5" cy="690" r="2.500" fill="#3a1fe6"/><circle cx="185.2" cy="687" r="2.500" fill="#3a1fe6"/><circle cx="187.9" cy="685" r="2.500" fill="#3a1fe6"/><circle cx="195.6" cy="672" r="3.100" fill="#c51cf2"/><circle cx="190.9" cy="694" r="2.500" fill="#3a1fe6"/><circle cx="193.5" cy="690" r="2.500" fill="#3a1fe6"/><circle cx="196.2" cy="687" r="2.500" fill="#3a1fe6"/><circle cx="198.9" cy="685" r="2.500" fill="#3a1fe6"/><circle cx="206.5" cy="672" r="3.100" fill="#c51cf2"/><circle cx="201.8" cy="694" r="2.500" fill="#3a1fe6"/><circle cx="204.4" cy="690" r="2.500" fill="#3a1fe6"/><circle cx="207.1" cy="687" r="2.500" fill="#3a1fe6"/><circle cx="209.8" cy="685" r="2.500" fill="#3a1fe6"/><circle cx="217.4" cy="672" r="3.100" fill="#c51cf2"/><circle cx="212.7" cy="694" r="2.500" fill="#3a1fe6"/><circle cx="215.3" cy="690" r="2.500" fill="#3a1fe6"/><circle cx="218.0" cy="687" r="2.500" fill="#3a1fe6"/><circle cx="220.7" cy="685" r="2.500" fill="#3a1fe6"/><circle cx="228.4" cy="672" r="3.100" fill="#c51cf2"/><circle cx="223.7" cy="694" r="2.500" fill="#3a1fe6"/><circle cx="226.3" cy="690" r="2.500" fill="#3a1fe6"/><circle cx="229.0" cy="687" r="2.500" fill="#3a1fe6"/><circle cx="231.7" cy="685" r="2.500" fill="#3a1fe6"/><path d="M151.8 672V706M162.7 672V706M173.7 672V706M184.6 672V706M195.6 672V706M206.5 672V706M217.4 672V706M228.4 672V706" stroke="#c51cf2" stroke-width="3"/><path d="M147.1 694V706M149.7 690V706M152.4 687V706M155.1 685V706M158.0 694V706M160.6 690V706M163.3 687V706M166.0 685V706M169.0 694V706M171.6 690V706M174.3 687V706M177.0 685V706M179.9 694V706M182.5 690V706M185.2 687V706M187.9 685V706M190.9 694V706M193.5 690V706M196.2 687V706M198.9 685V706M201.8 694V706M204.4 690V706M207.1 687V706M209.8 685V706M212.7 694V706M215.3 690V706M218.0 687V706M220.7 685V706M223.7 694V706M226.3 690V706M229.0 687V706M231.7 685V706" stroke="#3a1fe6" stroke-width="2"/><rect x="143" y="669" width="4" height="37" fill="#c51cf2"/><circle cx="189" cy="662.500" r="3.200" fill="#f0b010"/><path d="M189 662v8" stroke="#f0b010" stroke-width="2.400"/><rect x="230.5" y="668.500" width="364.5" height="37.500" fill="#05e8b6"/><path d="M230.5 669.500v-10q0 -2 2 -2h5.8q2 0 2 2v10zM241.5 669.500v-10q0 -2 2 -2h16.8q2 0 2 2v10zM263.5 669.500v-10q0 -2 2 -2h27.8q2 0 2 2v10zM296.5 669.500v-10q0 -2 2 -2h27.8q2 0 2 2v10zM329.5 669.500v-10q0 -2 2 -2h27.8q2 0 2 2v10zM362.5 669.500v-10q0 -2 2 -2h2.8q2 0 2 2v10zM370.5 669.500v-10q0 -2 2 -2h8.8q2 0 2 2v10zM384.5 669.500v-10q0 -2 2 -2h2.8q2 0 2 2v10zM392.5 669.500v-10q0 -2 2 -2h13.8q2 0 2 2v10zM411.5 669.500v-10q0 -2 2 -2h27.8q2 0 2 2v10zM444.5 669.500v-10q0 -2 2 -2h13.8q2 0 2 2v10zM463.5 669.500v-10q0 -2 2 -2h13.8q2 0 2 2v10zM482.5 669.500v-10q0 -2 2 -2h22.8q2 0 2 2v10zM510.5 669.500v-10q0 -2 2 -2h13.8q2 0 2 2v10zM529.5 669.500v-10q0 -2 2 -2h27.8q2 0 2 2v10zM562.5 669.500v-10q0 -2 2 -2h5.8q2 0 2 2v10zM573.5 669.500v-10q0 -2 2 -2h2.8q2 0 2 2v10zM581.5 669.500v-10q0 -2 2 -2h8.3q2 0 2 2v10z" fill="#14d8ee"/><path d="M245.5 676V706" stroke="#19b0e0" stroke-width="1"/><path d="M531.8 676V706" stroke="#19b0e0" stroke-width="1"/><path d="M388.9 676V706" stroke="#19b0e0" stroke-width="1"/><path d="M505.7 676V706" stroke="#19b0e0" stroke-width="1"/><path d="M236.2 676V706" stroke="#19b0e0" stroke-width="1"/><path d="M393.4 676V706" stroke="#19b0e0" stroke-width="1"/><path d="M491.3 676V706" stroke="#19b0e0" stroke-width="1"/><path d="M316.6 676V706" stroke="#19b0e0" stroke-width="1"/><path d="M570.6 676V706" stroke="#19b0e0" stroke-width="1"/><rect x="696" y="668.500" width="361" height="37.500" fill="#05e8b6"/><path d="M696.0 669.500v-10q0 -2 2 -2h27.8q2 0 2 2v10zM729.0 669.500v-10q0 -2 2 -2h27.8q2 0 2 2v10zM762.0 669.500v-10q0 -2 2 -2h2.8q2 0 2 2v10zM770.0 669.500v-10q0 -2 2 -2h2.8q2 0 2 2v10zM778.0 669.500v-10q0 -2 2 -2h2.8q2 0 2 2v10zM786.0 669.500v-10q0 -2 2 -2h8.8q2 0 2 2v10zM800.0 669.500v-10q0 -2 2 -2h27.8q2 0 2 2v10zM833.0 669.500v-10q0 -2 2 -2h5.8q2 0 2 2v10zM844.0 669.500v-10q0 -2 2 -2h22.8q2 0 2 2v10zM872.0 669.500v-10q0 -2 2 -2h27.8q2 0 2 2v10zM905.0 669.500v-10q0 -2 2 -2h22.8q2 0 2 2v10zM933.0 669.500v-10q0 -2 2 -2h27.8q2 0 2 2v10zM966.0 669.500v-10q0 -2 2 -2h8.8q2 0 2 2v10zM980.0 669.500v-10q0 -2 2 -2h8.8q2 0 2 2v10zM994.0 669.500v-10q0 -2 2 -2h16.8q2 0 2 2v10zM1016.0 669.500v-10q0 -2 2 -2h5.8q2 0 2 2v10zM1027.0 669.500v-10q0 -2 2 -2h16.8q2 0 2 2v10zM1049.0 669.500v-10q0 -2 2 -2h2.8q2 0 2 2v10z" fill="#14d8ee"/><path d="M905.0 676V706" stroke="#19b0e0" stroke-width="1"/><path d="M756.6 676V706" stroke="#19b0e0" stroke-width="1"/><path d="M852.2 676V706" stroke="#19b0e0" stroke-width="1"/><path d="M839.1 676V706" stroke="#19b0e0" stroke-width="1"/><path d="M954.8 676V706" stroke="#19b0e0" stroke-width="1"/><path d="M1050.2 676V706" stroke="#19b0e0" stroke-width="1"/><path d="M1034.2 676V706" stroke="#19b0e0" stroke-width="1"/><path d="M892.0 676V706" stroke="#19b0e0" stroke-width="1"/><path d="M857.1 676V706" stroke="#19b0e0" stroke-width="1"/><rect x="696" y="657" width="16" height="12" fill="#5a5a5a"/><path d="M357 680V706" stroke="#3a1fe6" stroke-width="1.600"/><circle cx="357" cy="678" r="2.200" fill="#3a1fe6"/><path d="M404 680V706" stroke="#3a1fe6" stroke-width="1.600"/><circle cx="404" cy="678" r="2.200" fill="#3a1fe6"/><path d="M556 680V706" stroke="#3a1fe6" stroke-width="1.600"/><circle cx="556" cy="678" r="2.200" fill="#3a1fe6"/><path d="M838 680V706" stroke="#3a1fe6" stroke-width="1.600"/><circle cx="838" cy="678" r="2.200" fill="#3a1fe6"/><path d="M886 680V706" stroke="#3a1fe6" stroke-width="1.600"/><circle cx="886" cy="678" r="2.200" fill="#3a1fe6"/><path d="M1014 680V706" stroke="#3a1fe6" stroke-width="1.600"/><circle cx="1014" cy="678" r="2.200" fill="#3a1fe6"/><path d="M406.500 676V706M428.500 676V706" stroke="#e07020" stroke-width="1.400"/><rect x="401" y="657" width="27" height="12" fill="#5a5a5a"/><circle cx="404.500" cy="664" r="3" fill="#6a8a30"/><rect x="409" y="658" width="7" height="11" rx="3" fill="#c8e820"/><rect x="417" y="660" width="9" height="9" rx="3" fill="#c8e820"/><rect x="595" y="668" width="101" height="38" fill="#05e8b6"/><path d="M595 706V669q0 -3 3 -3h8.5q3 0 3 3V706zM611 706V669q0 -3 3 -3h10.5q3 0 3 3V706zM629 706V669q0 -3 3 -3h18.5q3 0 3 3V706zM655 706V669q0 -3 3 -3h13.5q3 0 3 3V706zM676 706V669q0 -3 3 -3h-2q3 0 3 3V706zM681 706V669q0 -3 3 -3h9q3 0 3 3V706z" fill="#f0109a"/><path d="M618 672V706M640 672V706M662 672V706" stroke="#e080c0" stroke-width="1"/><circle cx="683" cy="660.500" r="3" fill="#c8e820"/><circle cx="694" cy="660.500" r="3" fill="#c8e820"/><rect x="1057" y="668.500" width="175.500" height="37.500" fill="#05e8b6"/><path d="M1057 706V675q0 -2 2 -2h2.5q2 0 2 2V706zM1067.6 706V675q0 -2 2 -2h11.2q2 0 2 2V706zM1091 706V675q0 -2 2 -2h8.0q2 0 2 2V706zM1106 706V675q0 -2 2 -2h6.0q2 0 2 2V706zM1118 706V675q0 -2 2 -2h7.7q2 0 2 2V706zM1135 706V675q0 -2 2 -2h23.5q2 0 2 2V706zM1163.5 706V675q0 -2 2 -2h64.8q2 0 2 2V706z" fill="#f0109a"/><path d="M146 732.500H1240M146 768.500H1240" stroke="#474747" stroke-width="1"/><path d="M146 750.500H1240" stroke="#1c1c1c" stroke-width="1.300"/><path d="M232 717.300H1240" stroke="#e0c818" stroke-width="1.700"/><path d="M232 725.600H1240" stroke="#d0c020" stroke-width="1.300"/><path d="M190 750L232 717M201 750L215 784L232 725.500" stroke="#e0b818" stroke-width="1.400" fill="none"/><circle cx="190" cy="750" r="3.100" fill="#f0b010"/><circle cx="201" cy="750" r="3.100" fill="#f0b010"/><circle cx="215" cy="784" r="3.100" fill="#e0e020"/><circle cx="232" cy="717" r="3.100" fill="#f0a010"/><circle cx="232" cy="725.5" r="3.100" fill="#e0e020"/><path d="M350 750.500H596" stroke="#3a1fe6" stroke-width="1.600"/><path d="M709 750.500H1057" stroke="#c01860" stroke-width="1.400"/><circle cx="351" cy="743" r="3" fill="#3a1fe6"/><path d="M351 743V750" stroke="#3a1fe6" stroke-width="2"/><path d="M348.5 749.500h5.500" stroke="#3a1fe6" stroke-width="2.400"/><circle cx="461" cy="743" r="3" fill="#3a1fe6"/><path d="M461 743V750" stroke="#3a1fe6" stroke-width="2"/><path d="M458.5 749.500h5.500" stroke="#3a1fe6" stroke-width="2.400"/><circle cx="747" cy="743" r="3" fill="#3a1fe6"/><path d="M747 743V750" stroke="#3a1fe6" stroke-width="2"/><path d="M744.5 749.500h5.500" stroke="#3a1fe6" stroke-width="2.400"/><circle cx="922" cy="743" r="3" fill="#3a1fe6"/><path d="M922 743V750" stroke="#3a1fe6" stroke-width="2"/><path d="M919.5 749.500h5.500" stroke="#3a1fe6" stroke-width="2.400"/><path d="M887 750V785" stroke="#3a1fe6" stroke-width="1.700"/><path d="M883.500 750h7l-3.500 5.500z" fill="#3a1fe6"/><path d="M883.500 785.500l3.500 -5.500l3.500 5.500z" fill="#7a22e0"/><path d="M403.500 750V785" stroke="#7a22e0" stroke-width="1.700"/><circle cx="403.500" cy="750" r="2.800" fill="#7a22e0"/><path d="M400 785.500l3.500 -5.500l3.500 5.500z" fill="#7a22e0"/><circle cx="411" cy="740" r="3.300" fill="#b8e820"/><path d="M411 740L428 737" stroke="#b8e820" stroke-width="1.500"/><circle cx="415" cy="744" r="3.300" fill="#b8e820"/><path d="M415 744L432 766" stroke="#b8e820" stroke-width="1.500"/><circle cx="424" cy="733" r="3.300" fill="#b8e820"/><path d="M424 733L425 756" stroke="#b8e820" stroke-width="1.500"/><circle cx="428" cy="737" r="3.300" fill="#b8e820"/><path d="M428 737L424 733" stroke="#b8e820" stroke-width="1.500"/><circle cx="431" cy="746" r="3.300" fill="#b8e820"/><path d="M431 746L436 771" stroke="#b8e820" stroke-width="1.500"/><circle cx="436" cy="742" r="3.300" fill="#b8e820"/><path d="M436 742L419 758" stroke="#b8e820" stroke-width="1.500"/><circle cx="442" cy="749" r="3.300" fill="#b8e820"/><path d="M442 749L415 744" stroke="#b8e820" stroke-width="1.500"/><circle cx="444" cy="757" r="3.300" fill="#b8e820"/><path d="M444 757L440 765" stroke="#b8e820" stroke-width="1.500"/><circle cx="440" cy="765" r="3.300" fill="#b8e820"/><path d="M440 765L414 762" stroke="#b8e820" stroke-width="1.500"/><circle cx="436" cy="771" r="3.300" fill="#b8e820"/><path d="M436 771L411 740" stroke="#b8e820" stroke-width="1.500"/><circle cx="432" cy="766" r="3.300" fill="#b8e820"/><path d="M432 766L444 757" stroke="#b8e820" stroke-width="1.500"/><circle cx="428" cy="772" r="3.300" fill="#b8e820"/><path d="M428 772L416 770" stroke="#b8e820" stroke-width="1.500"/><circle cx="424" cy="768" r="3.300" fill="#b8e820"/><path d="M424 768L429 752" stroke="#b8e820" stroke-width="1.500"/><circle cx="420" cy="775" r="3.300" fill="#b8e820"/><path d="M420 775L442 749" stroke="#b8e820" stroke-width="1.500"/><circle cx="416" cy="770" r="3.300" fill="#b8e820"/><path d="M416 770L420 775" stroke="#b8e820" stroke-width="1.500"/><circle cx="414" cy="762" r="3.300" fill="#b8e820"/><path d="M414 762L421 750" stroke="#b8e820" stroke-width="1.500"/><circle cx="419" cy="758" r="3.300" fill="#b8e820"/><path d="M419 758L436 742" stroke="#b8e820" stroke-width="1.500"/><circle cx="425" cy="756" r="3.300" fill="#b8e820"/><path d="M425 756L424 768" stroke="#b8e820" stroke-width="1.500"/><circle cx="431" cy="760" r="3.300" fill="#b8e820"/><path d="M431 760L438 758" stroke="#b8e820" stroke-width="1.500"/><circle cx="438" cy="758" r="3.300" fill="#b8e820"/><path d="M438 758L431 746" stroke="#b8e820" stroke-width="1.500"/><circle cx="421" cy="750" r="3.300" fill="#b8e820"/><path d="M421 750L428 772" stroke="#b8e820" stroke-width="1.500"/><circle cx="429" cy="752" r="3.300" fill="#b8e820"/><path d="M429 752L431 760" stroke="#b8e820" stroke-width="1.500"/><path d="M411 750H442M413 753.500H440M414 757H438" stroke="#dcecA0" stroke-width="1.400"/><rect x="633.800" y="714.500" width="20.600" height="37" rx="2" fill="#f0109a"/><path d="M640 722V746M644.500 722V746M649 722V746" stroke="#90d040" stroke-width="0.900"/><path d="M593.800 745h15v13h-3v16h-7v-14h-5z" fill="#f0109a"/><path d="M607 716V746M627 733V750M661.300 716V750" stroke="#f0109a" stroke-width="2.200"/><path d="M663.500 720V750" stroke="#70d040" stroke-width="0.900"/><path d="M622 750.500H687" stroke="#f0109a" stroke-width="4"/><path d="M627 750V785M652 750V785M677 750V785" stroke="#f0109a" stroke-width="2.200"/><path d="M629.500 752V785M679.500 752V785" stroke="#70d040" stroke-width="0.900"/><path d="M622 784.500h10M647 784.500h10M673 784.500h8" stroke="#f0109a" stroke-width="3"/><circle cx="607" cy="716" r="3.200" fill="#f0109a"/><circle cx="661.3" cy="716" r="3.200" fill="#f0109a"/><circle cx="637" cy="716" r="3.200" fill="#f0109a"/><circle cx="651" cy="716" r="3.200" fill="#f0109a"/><circle cx="608" cy="733" r="3.200" fill="#f0109a"/><circle cx="627" cy="733" r="3.200" fill="#f0109a"/><path d="M596.5 750v8" stroke="#22e3b5" stroke-width="1.500"/><circle cx="596.5" cy="758.500" r="3.300" fill="#22e3b5"/><path d="M619.4 750v8" stroke="#22e3b5" stroke-width="1.500"/><circle cx="619.4" cy="758.500" r="3.300" fill="#22e3b5"/><path d="M640 750v8" stroke="#22e3b5" stroke-width="1.500"/><circle cx="640" cy="758.500" r="3.300" fill="#22e3b5"/><path d="M662 750v8" stroke="#22e3b5" stroke-width="1.500"/><circle cx="662" cy="758.500" r="3.300" fill="#22e3b5"/><path d="M683.4 750v8" stroke="#22e3b5" stroke-width="1.500"/><circle cx="683.4" cy="758.500" r="3.300" fill="#22e3b5"/><rect x="680.600" y="714.500" width="29" height="71" rx="3" fill="#bdf01a"/><path d="M681 718.500h28.500" stroke="#d8e860" stroke-width="1"/><path d="M1092.0 741.3h6v10.9h-6zM1097.4 741.8h9v9.5h-9zM1105.5 744.5h12v11.6h-12zM1116.3 744.3h6v8.1h-6zM1121.7 738.6h12v13.6h-12zM1132.5 745.4h6v12.9h-6zM1137.9 746.0h12v13.2h-12zM1148.7 742.9h12v8.2h-12zM1159.5 742.3h9v12.9h-9zM1167.6 738.2h9v13.2h-9zM1175.7 739.0h4v14.5h-4zM1179.3 739.3h12v13.1h-12zM1190.1 741.9h12v9.3h-12zM1200.9 741.8h4v13.7h-4zM1204.5 744.2h4v9.5h-4zM1208.1 739.0h4v11.3h-4zM1211.7 739.6h12v14.5h-12z" fill="#f0109a"/><rect x="1062" y="730" width="30" height="25" rx="2" fill="#f0109a"/><rect x="1092" y="745" width="140" height="8" fill="#f0109a"/><rect x="1218" y="741" width="14" height="14" fill="#f0109a"/><path d="M1066 716V745" stroke="#f0109a" stroke-width="2"/><circle cx="1066" cy="716" r="3.200" fill="#f0109a"/><path d="M1078.6 745V783" stroke="#f0109a" stroke-width="2"/><circle cx="1078.6" cy="783" r="3.200" fill="#f0109a"/><path d="M1107.6 745V783" stroke="#f0109a" stroke-width="2"/><circle cx="1107.6" cy="783" r="3.200" fill="#f0109a"/><path d="M1120 732.5V750" stroke="#f0109a" stroke-width="2"/><circle cx="1120" cy="732.5" r="3.200" fill="#f0109a"/><path d="M1128 738V750" stroke="#f0109a" stroke-width="2"/><circle cx="1128" cy="738" r="3.200" fill="#f0109a"/><path d="M1156 732V750" stroke="#f0109a" stroke-width="2"/><circle cx="1156" cy="732" r="3.200" fill="#f0109a"/><path d="M1185.7 716V750" stroke="#f0109a" stroke-width="2"/><circle cx="1185.7" cy="716" r="3.200" fill="#f0109a"/><path d="M1190 728V750" stroke="#f0109a" stroke-width="2"/><circle cx="1190" cy="728" r="3.200" fill="#f0109a"/><path d="M1056.6 750v8" stroke="#22e3b5" stroke-width="1.500"/><circle cx="1056.6" cy="758.700" r="3.300" fill="#22e3b5"/><path d="M1078.6 750v8" stroke="#22e3b5" stroke-width="1.500"/><circle cx="1078.6" cy="758.700" r="3.300" fill="#22e3b5"/><path d="M1099.3 750v8" stroke="#22e3b5" stroke-width="1.500"/><circle cx="1099.3" cy="758.700" r="3.300" fill="#22e3b5"/><path d="M1121.4 750v8" stroke="#22e3b5" stroke-width="1.500"/><circle cx="1121.4" cy="758.700" r="3.300" fill="#22e3b5"/><path d="M1143.5 750v8" stroke="#22e3b5" stroke-width="1.500"/><circle cx="1143.5" cy="758.700" r="3.300" fill="#22e3b5"/><path d="M1165.5 750v8" stroke="#22e3b5" stroke-width="1.500"/><circle cx="1165.5" cy="758.700" r="3.300" fill="#22e3b5"/><path d="M1187.6 750v8" stroke="#22e3b5" stroke-width="1.500"/><circle cx="1187.6" cy="758.700" r="3.300" fill="#22e3b5"/><path d="M1209.7 750v8" stroke="#22e3b5" stroke-width="1.500"/><circle cx="1209.7" cy="758.700" r="3.300" fill="#22e3b5"/><rect x="143" y="469" width="3" height="317" fill="#2f3a3a"/><rect x="146" y="469" width="1.200" height="317" fill="#5fb3a8"/></svg>
<div class="abs combo" style="top:478px">&#8226;Bank/Program Se</div>
<svg class="abs" style="left:110px;top:485px" width="12" height="8"><path d="M1 1 L6 6 L11 1" fill="none" stroke="#333" stroke-width="1.3"/></svg>
<div class="abs pm" style="top:478px"></div><div class="abs pm" style="top:489px"></div><svg class="abs" style="left:131px;top:478px" width="10" height="21"><path d="M2.500 4.500h4M2.500 15.500h4M4.500 13.500v4" stroke="#6a6f6f" stroke-width="1"/></svg>
<div class="abs combo" style="top:509px">&#8226;07 Volume MSB</div>
<svg class="abs" style="left:110px;top:516px" width="12" height="8"><path d="M1 1 L6 6 L11 1" fill="none" stroke="#333" stroke-width="1.3"/></svg>
<div class="abs pm" style="top:509px"></div><div class="abs pm" style="top:520px"></div><svg class="abs" style="left:131px;top:509px" width="10" height="21"><path d="M2.500 4.500h4M2.500 15.500h4M4.500 13.500v4" stroke="#6a6f6f" stroke-width="1"/></svg>
<div class="abs combo" style="top:564px">&#8226;06 Data Entry MS</div>
<svg class="abs" style="left:110px;top:571px" width="12" height="8"><path d="M1 1 L6 6 L11 1" fill="none" stroke="#333" stroke-width="1.3"/></svg>
<div class="abs pm" style="top:564px"></div><div class="abs pm" style="top:575px"></div><svg class="abs" style="left:131px;top:564px" width="10" height="21"><path d="M2.500 4.500h4M2.500 15.500h4M4.500 13.500v4" stroke="#6a6f6f" stroke-width="1"/></svg>
<div class="abs combo" style="top:595px">&#8226;11 Expression MS</div>
<svg class="abs" style="left:110px;top:602px" width="12" height="8"><path d="M1 1 L6 6 L11 1" fill="none" stroke="#333" stroke-width="1.3"/></svg>
<div class="abs pm" style="top:595px"></div><div class="abs pm" style="top:606px"></div><svg class="abs" style="left:131px;top:595px" width="10" height="21"><path d="M2.500 4.500h4M2.500 15.500h4M4.500 13.500v4" stroke="#6a6f6f" stroke-width="1"/></svg>
<div class="abs combo" style="top:629px">&#8226;10 Pan Position M</div>
<svg class="abs" style="left:110px;top:636px" width="12" height="8"><path d="M1 1 L6 6 L11 1" fill="none" stroke="#333" stroke-width="1.3"/></svg>
<div class="abs pm" style="top:629px"></div><div class="abs pm" style="top:640px"></div><svg class="abs" style="left:131px;top:629px" width="10" height="21"><path d="M2.500 4.500h4M2.500 15.500h4M4.500 13.500v4" stroke="#6a6f6f" stroke-width="1"/></svg>
<div class="abs combo" style="top:684px">&#8226;Velocity</div>
<svg class="abs" style="left:110px;top:691px" width="12" height="8"><path d="M1 1 L6 6 L11 1" fill="none" stroke="#333" stroke-width="1.3"/></svg>
<div class="abs pm" style="top:684px"></div><div class="abs pm" style="top:695px"></div><svg class="abs" style="left:131px;top:684px" width="10" height="21"><path d="M2.500 4.500h4M2.500 15.500h4M4.500 13.500v4" stroke="#6a6f6f" stroke-width="1"/></svg>
<div class="abs combo" style="top:764px">&#8226;Pitch</div>
<svg class="abs" style="left:110px;top:771px" width="12" height="8"><path d="M1 1 L6 6 L11 1" fill="none" stroke="#333" stroke-width="1.3"/></svg>
<div class="abs pm" style="top:764px"></div><div class="abs pm" style="top:775px"></div><svg class="abs" style="left:131px;top:764px" width="10" height="21"><path d="M2.500 4.500h4M2.500 15.500h4M4.500 13.500v4" stroke="#6a6f6f" stroke-width="1"/></svg>
<div class="abs hl" style="top:503px"></div>
<div class="abs hl" style="top:534.5px"></div>
<div class="abs hl" style="top:589.5px"></div>
<div class="abs hl" style="top:620px"></div>
<div class="abs hl" style="top:655.5px"></div>
<div class="abs hl" style="top:708.5px"></div>
<div class="abs lbl" style="left:173px;top:813px">Grid:</div>
<div class="abs" style="left:206px;top:809px;width:68px;height:22px;background:#fff;border:1px solid #333"><div class="abs" style="left:2px;top:2px;width:42px;height:16px;background:#e2e2e2"></div><div class="abs lbl" style="left:3px;top:2px">1/64</div></div>
<div class="abs" style="left:279px;top:809px;width:63px;height:22px;background:#d9dcdc"><div class="abs lbl" style="left:3px;top:4px">triplet</div></div>
<div class="abs lbl" style="left:354px;top:813px">Notes:</div>
<div class="abs" style="left:396px;top:809px;width:58px;height:22px;background:#fff;border:1px solid #333"><div class="abs" style="left:2px;top:2px;width:34px;height:16px;background:#e2e2e2"></div><div class="abs lbl" style="left:3px;top:2px">Grid</div></div>
<div class="abs" style="left:470px;top:812px;width:14px;height:14px;background:#fff;border:1px solid #333"></div>
<div class="abs lbl" style="left:488px;top:813px">Key snap</div>
<div class="abs lbl" style="left:551px;top:813px">Color:</div>
<div class="abs" style="left:591px;top:809px;width:88px;height:22px;background:#e6e8e8"><div class="abs lbl" style="left:3px;top:4px">Channel</div></div>
<svg class="abs" style="left:257px;top:816px" width="12" height="8"><path d="M1 1 L6 6 L11 1" fill="none" stroke="#222" stroke-width="1.3"/></svg>
<svg class="abs" style="left:328px;top:816px" width="12" height="8"><path d="M1 1 L6 6 L11 1" fill="none" stroke="#222" stroke-width="1.3"/></svg>
<svg class="abs" style="left:439px;top:816px" width="12" height="8"><path d="M1 1 L6 6 L11 1" fill="none" stroke="#222" stroke-width="1.3"/></svg>
<svg class="abs" style="left:663px;top:816px" width="12" height="8"><path d="M1 1 L6 6 L11 1" fill="none" stroke="#222" stroke-width="1.3"/></svg>
<div class="abs" style="left:0;top:833px;width:1478px;height:1px;background:#3a3d3d"></div>
<div class="abs" style="left:1266.300px;top:86px;width:2.400px;height:718.500px;background:#151515"></div>
<div class="abs" style="left:1291px;top:87px;width:57px;height:17px;background:#efefef;overflow:hidden"><div class="abs lbl" style="left:5px;top:2px;font-size:11.200px;color:#444">MIDI Recc</div></div>
<div id="cmd" class="abs"><div id="cmdtitle" class="abs"><svg class="abs" style="left:10px;top:10px" width="18" height="15"><rect x="0.5" y="0.5" width="16" height="13" fill="#000" stroke="#ccc"/><rect x="1" y="1" width="15" height="2.5" fill="#ddd"/><text x="2" y="11" font-size="7" font-family="Liberation Sans,sans-serif" font-weight="bold" fill="#fff">C:\.</text></svg><div class="abs t">C:\WINDOWS\system32\cmd.exe</div></div>
<div id="cmdtext" class="abs mono">Active code page: 932
 .MML file --&gt; .M file Compiler ver 4.8s
		Programmed by M.Kajihara(KAJA) 2020/01/22

Part A  Length : 10266
Part B  Length : 8928   / Loop : 192
Part C  Length : 8928   / Loop : 192</div></div>
<div id="np" class="abs"><div id="npi">
<div id="nptitle"><svg class="abs" style="left:8px;top:5px" width="20" height="22"><path d="M5 19.500l13 0.500v-15l-2 -1z" fill="#c8ccd0"/><path d="M3.500 4.500L16 3.500L17 17.500L2.500 18.500Z" fill="#9fd3ea" stroke="#6a9ab0" stroke-width="0.700"/><path d="M4 7.500L16 6.700M3.800 10L16.200 9.300M3.500 12.500L16.500 11.800M3.200 15L16.800 14.300" stroke="#d4ecf6" stroke-width="0.900"/><path d="M4 3.600L16 2.600" stroke="#4a6a7a" stroke-width="2" stroke-dasharray="1 1.100"/></svg><div class="abs t">ATOMU_98.MML - Notepad</div>
<svg class="abs" style="left:586px;top:7px" width="125" height="18"><path d="M7 9.5 H18" stroke="#000" stroke-width="1.2"/><rect x="55.5" y="3.5" width="10" height="10" fill="none" stroke="#000" stroke-width="1.2"/><path d="M105 3 L116 14 M116 3 L105 14" stroke="#000" stroke-width="1.2"/></svg></div>
<div id="npmenu">
<span style="left:7px"><u>F</u>ile</span>
<span style="left:42px"><u>E</u>dit</span>
<span style="left:79px">F<u>o</u>rmat</span>
<span style="left:135px"><u>V</u>iew</span>
<span style="left:177px"><u>H</u>elp</span>
</div>
<div id="nptext" class="abs mono">;intro
A       @025    V122    o4_-12          ;Choir Aahs
B       @025    V119    o4_-12
C   s15 @025    V115    o3_-12
D       @079q3  V104p2  o4              ;Strings
E       @079q3  V102    o4
F       @079q3  V100p1  o3
GH          q3  v-7     o4
Z   s0  @025                            ;dummy @ for hardware compatibility
;       @4:4    |     x     +     x     |     x     +     x     |
A       l1      [e                       g+
A               &gt;c                       f+                     ]2
B       l1      [c+                      f
B                a                      &gt;d+                     ]2
C       l1       a                      &gt;c+
C                f                       b
D       l2      [e      )    g+:)       &gt;c      )    f+(((      ]3
E       l2      [c+     )    f :)        a      )   &gt;d+(((      ]3
F       l2      [a      )   &gt;c+:)        f      )    b (((      ]3
;       @4:4    |     x     +     x     |     x     +     x     |
G       l2  [   [e      )    g+)        &gt;c      )    f+(((      ]2 v+2  ]2
H       l2  [   [c+     )    f )         a      )   &gt;d+(((      ]2 v+2  ]2
K                R1                      R2
K                R3                      R4
K                R5                      R6
K                R7                      R8                     R9
;       @4:4    |     x     +     x     |     x     +     x     |
C   s3  @015q6  V127    o1_0            ;Synth; SFX
D       @015q6  V123p3  o1
E       @015q6  V121    o1
F       @015q6  V119p2  o2
Z   s12 @015q6  V125    o1_0
;       @4:4    |     x     +     x     |     x     +     x     |</div>
<div id="npvs" class="abs"><svg width="17" height="578"><path d="M4.500 14L8.500 9.500L12.500 14" fill="none" stroke="#505050" stroke-width="2.200"/><path d="M4.500 565L8.500 569.500L12.500 565" fill="none" stroke="#505050" stroke-width="2.200"/><rect x="1" y="70" width="15" height="23" fill="#cdcdcd"/></svg></div>
<div id="nphs" class="abs"><svg width="701" height="17"><path d="M10 4.5 L6 8.5 L10 12.5" fill="none" stroke="#bbb" stroke-width="1.6"/><path d="M692 4.500L696 8.500L692 12.500" fill="none" stroke="#bbb" stroke-width="1.600"/></svg></div>
<div id="npstat" class="abs"><i style="left:251px"></i><i style="left:405px"></i><i style="left:458px"></i><i style="left:587px"></i><span style="left:264px">Ln 1, Col 1</span><span style="left:413px">100%</span><span style="left:467px">Windows (CRLF)</span><span style="left:598px">ANSI</span><svg class="abs" style="left:705px;top:13px" width="12" height="12"><path d="M9 1h2v2h-2zM9 5h2v2h-2zM9 9h2v2h-2zM5 5h2v2h-2zM5 9h2v2h-2zM1 9h2v2h-2z" fill="#bdbdbd"/></svg></div>
</div></div>
<div class="abs" style="left:1474px;top:830.500px;width:526px;height:3.500px;background:#6e4a2c"></div>
<div class="abs" style="left:1999px;top:157px;width:1px;height:677px;background:#2a2420"></div>
</div></body></html>
